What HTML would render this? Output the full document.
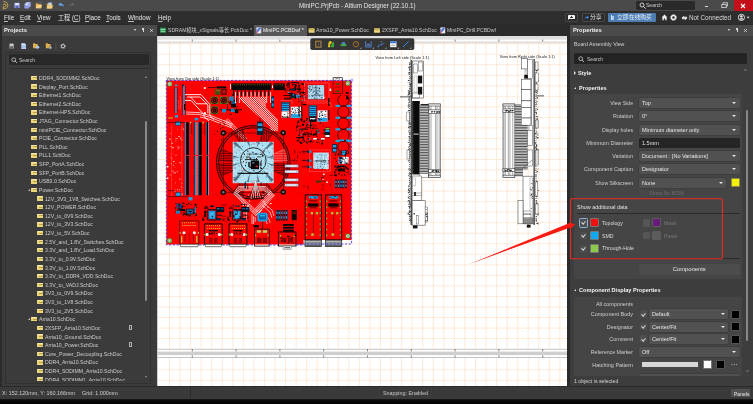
<!DOCTYPE html>
<html lang="en">
<head>
<meta charset="utf-8">
<title>MiniPC.PrjPcb - Altium Designer (22.10.1)</title>
<style>
*{box-sizing:border-box;margin:0;padding:0}
html,body{width:753px;height:404px;overflow:hidden;background:#000}
body{font-family:"Liberation Sans","Noto Sans CJK SC",sans-serif;font-size:7.4px;color:#d8d8d8;line-height:1}
#app{position:relative;width:753px;height:404px;background:#2b2b2b;overflow:hidden;will-change:transform}
.abs{position:absolute}
.t{position:absolute;white-space:nowrap;line-height:10px;height:10px;transform:scaleX(var(--sx,.9));transform-origin:left center}
#titlebar{left:0;top:0;width:753px;height:10.6px;background:#4a4a4a}
#menubar{left:0;top:10.6px;width:753px;height:13.4px;background:#2e2e2e}
#menubar .t{top:2.2px;font-size:6.5px;color:#e6e6e6;--sx:.97}
u{text-decoration-thickness:0.4px;text-underline-offset:0.6px;text-decoration-color:#bbb}
/* left panel */
#left{left:0;top:24px;width:157px;height:362.4px;background:#3b3b3b}
.phead{position:absolute;left:0;top:0;height:12px;background:#4b4b4b;width:100%}
.phead b{position:absolute;left:4px;top:0.6px;font-size:6.1px;line-height:10px;color:#f0f0f0;transform:scaleX(.95);transform-origin:left center}
#tree{position:absolute;left:8px;top:46px;width:141px;height:310.6px;overflow:hidden}
.row{position:absolute;left:0;height:8.62px;width:141px}
.row .fi{position:absolute;top:2.3px;width:5.8px;height:4.3px;background:#ecd67c;border-top:0.8px solid #f4e8a8;border-radius:0.5px}
.row .fi:after{content:"";position:absolute;left:2.4px;top:0.6px;width:3.4px;height:0.8px;background:#a88a34;opacity:.75}
.row span{position:absolute;top:-0.6px;line-height:10px;font-size:5.8px;color:#cecece;white-space:nowrap;transform:scaleX(.89);transform-origin:left center}
.l1 .fi{left:23px}.l1 span{left:31px}
.l2 .fi{left:29px}.l2 span{left:37px}
.tw{position:absolute;left:19.5px;top:3.2px;width:0;height:0;border-left:2.6px solid transparent;border-bottom:2.6px solid #ccc}
.di{position:absolute;left:120.6px;top:1.7px;width:3.6px;height:4.6px;border:0.55px solid #b4b4b4;border-radius:0.4px}
/* tabs */
#tabs{left:157px;top:24px;width:412px;height:13px;background:#2b2b2b}
#tabs .t{top:1px;font-size:5.7px;color:#c8c8c8;--sx:.9}
/* canvas */
#canvas{left:157px;top:36px;width:410px;height:351px;background:#fff;overflow:hidden}
/* right panel */
#right{left:570px;top:24px;width:183px;height:362.4px;background:#3d3d3d}
.lbl{position:absolute;white-space:nowrap;line-height:10px;font-size:5.8px;color:#cfcfcf;text-align:right;width:70px;left:-7px;transform:scaleX(.95);transform-origin:right center}
.dd{position:absolute;height:10px;background:#515151;border-radius:1.5px;box-shadow:0 0 0 0.5px #383838;font-size:5.8px;line-height:10px;color:#e8e8e8;white-space:nowrap}
.dd span,.inp span{position:absolute;left:3px;top:0;transform:scaleX(.955);transform-origin:left center}
.dd:after{content:"";position:absolute;right:3.5px;top:4px;border-left:2px solid transparent;border-right:2px solid transparent;border-top:2.4px solid #e8e8e8}
.inp{position:absolute;height:10px;background:#252525;border-radius:1.5px;font-size:5.8px;line-height:10px;color:#e0e0e0}
.sw{position:absolute;width:9px;height:9px;border:0.7px solid #777;border-radius:1px}
.cb{position:absolute;width:7.5px;height:7.5px;background:#4e4e4e;border-radius:1px}
.cb.on:after{content:"";position:absolute;left:2.7px;top:1.4px;width:1.6px;height:3px;border-right:0.7px solid #d8d8d8;border-bottom:0.7px solid #d8d8d8;transform:rotate(40deg)}
.sec{position:absolute;left:4px;width:168px;background:#454545;border-radius:1px}
.sh{position:absolute;left:7px;font-weight:bold;font-size:6px;line-height:10px;color:#f2f2f2;white-space:nowrap}
.sh span{display:inline-block;transform:scaleX(.93);transform-origin:left center}
.sh i{position:absolute;left:-5px;top:4px;width:0;height:0;border-left:2.4px solid transparent;border-bottom:2.4px solid #ddd}
#status{left:0;top:386.4px;width:753px;height:13px;background:#3a3a3a;border-top:1.9px solid #2a2a2a}
#status .t{top:0.8px;font-size:5.8px;color:#d0d0d0}
</style>
</head>
<body>
<div id="app">

<!-- ===== TITLE BAR ===== -->
<div id="titlebar" class="abs">
  <svg class="abs" style="left:0;top:0" width="80" height="11" viewBox="0 0 80 11">
    <!-- altium logo -->
    <path d="M3.4 1.5 L5.8 2.1 Q7.9 3 7.9 5.3 Q7.9 7.7 5.8 8.5 L3.2 8.9 M3 5.3 Q3.6 3.6 5.2 4 Q6.5 4.8 5.8 6.2 Q4.8 7.2 3.2 6.8 L3.2 8.9" fill="none" stroke="#c8a652" stroke-width="0.95" stroke-linejoin="round"/>
    <!-- save -->
    <rect x="14.3" y="2.7" width="5.4" height="5.4" rx="0.5" fill="#949ce2"/><rect x="15.2" y="3" width="3.6" height="2" fill="#e4e6ff"/><rect x="15.6" y="6" width="2.8" height="2.1" fill="#5a62b4"/>
    <!-- save all -->
    <rect x="26" y="2" width="4.6" height="5" rx="0.5" fill="#aab3f0"/><rect x="24.4" y="3.4" width="4.8" height="5.2" rx="0.5" fill="#8f9be8"/><rect x="25.4" y="3.4" width="2.8" height="1.8" fill="#dfe3ff"/>
    <!-- open -->
    <path d="M35.8 3.2 h2.2 l0.6 0.8 h2.8 v4.2 h-5.6z" fill="#d8a848"/><path d="M36.6 5 h5.4 l-1 3.2 h-5.2z" fill="#f2d282"/><path d="M39.4 2.6 q1.6 -0.8 2.4 0.8" stroke="#5a8ad8" stroke-width="0.6" fill="none"/>
    <!-- open project -->
    <path d="M46.8 3.6 h2 l0.6 0.8 h3 v4 h-5.6z" fill="#d8a848"/><path d="M47.4 5.6 h5.4 l-1 2.8 h-5.2z" fill="#f2d282"/><rect x="48.2" y="2.6" width="3.6" height="2.6" fill="#c8d4e8"/><path d="M50.4 2.2 q1.4 -0.6 2 0.8" stroke="#5a8ad8" stroke-width="0.6" fill="none"/>
    <!-- undo -->
    <path d="M58.4 4.4 L60.6 2.4 L60.6 3.6 Q63.6 3.6 63.8 7 Q62.8 5.2 60.6 5.3 L60.6 6.4 Z" fill="#68a6f2"/>
    <!-- redo -->
    <path d="M74.2 4.4 L72 2.6 L72 3.7 Q69.4 3.7 69 6.6 Q70 5.2 72 5.3 L72 6.2 Z" fill="#666"/>
  </svg>
  <div class="t" style="left:299px;top:0.5px;font-size:6.6px;color:#e4e4e4;--sx:.95">MiniPC.PrjPcb - Altium Designer (22.10.1)</div>
  <div class="abs" style="left:636px;top:0.5px;width:59px;height:9.3px;background:#2a2a2a;border-radius:1.5px"></div>
  <svg class="abs" style="left:639px;top:1.5px" width="8" height="8" viewBox="0 0 8 8"><circle cx="3" cy="3" r="2" fill="none" stroke="#ddd" stroke-width="0.9"/><path d="M4.5 4.5 L6.6 6.6" stroke="#ddd" stroke-width="1"/></svg>
  <div class="t" style="left:646px;top:0px;font-size:5.6px;color:#cfcfcf">Search</div>
  <div class="abs" style="left:704.5px;top:6.2px;width:3.5px;height:1.2px;background:#d8d8d8"></div>
  <svg class="abs" style="left:721px;top:2px" width="8" height="7" viewBox="0 0 8 7"><rect x="2" y="0.8" width="4.4" height="3.2" fill="none" stroke="#d8d8d8" stroke-width="0.8"/><rect x="0.8" y="2.4" width="4.4" height="3.2" fill="#4a4a4a" stroke="#d8d8d8" stroke-width="0.8"/></svg>
  <div class="abs" style="left:734px;top:0;width:19px;height:11px;background:#c40f1a"></div>
  <svg class="abs" style="left:740px;top:2.5px" width="6" height="6" viewBox="0 0 6 6"><path d="M1 1 L5 5 M5 1 L1 5" stroke="#fff" stroke-width="1.1"/></svg>
</div>

<!-- ===== MENU BAR ===== -->
<div id="menubar" class="abs">
  <div class="t" style="left:4px"><u>F</u>ile</div>
  <div class="t" style="left:20px"><u>E</u>dit</div>
  <div class="t" style="left:37px"><u>V</u>iew</div>
  <div class="t" style="left:57.5px;font-size:6.3px">工程 (<u>C</u>)</div>
  <div class="t" style="left:84.5px"><u>P</u>lace</div>
  <div class="t" style="left:106px"><u>T</u>ools</div>
  <div class="t" style="left:127.5px"><u>W</u>indow</div>
  <div class="t" style="left:157.5px"><u>H</u>elp</div>
  <!-- right side -->
  <div class="abs" style="left:565.2px;top:2.6px;width:13px;height:8.6px;background:#2b2b2b;border:0.6px solid #454545;border-radius:1px"></div><div class="abs" style="left:568px;top:4.2px;width:7.4px;height:4.4px;background:#f2f2f2;border-radius:0.6px"></div><div class="abs" style="left:568px;top:8px;border-top:1.6px solid #f2f2f2;border-right:1.8px solid transparent"></div>
  <div class="abs" style="left:570.3px;top:6px;width:2.8px;height:0.8px;background:#333"></div><div class="abs" style="left:571.3px;top:5px;width:0.8px;height:2.8px;background:#333"></div>
  <div class="abs" style="left:581.5px;top:2.6px;width:23px;height:8.6px;background:#2b2b2b;border:0.6px solid #484848;border-radius:1px"></div>
  <svg class="abs" style="left:583.5px;top:4.6px" width="5" height="5" viewBox="0 0 5 5"><path d="M0.4 3.6 Q1.6 1.6 3 1.8 L3 0.6 L4.8 2.4 L3 4 L3 3 Q1.6 2.8 0.4 3.6Z" fill="#3e8cf0"/></svg>
  <div class="t" style="left:589.5px;top:1.9px;font-size:6px;color:#e8e8e8">分享</div>
  <div class="abs" style="left:608px;top:2.6px;width:48px;height:8.6px;background:#4d7db2;border-radius:1px"></div>
  <div class="abs" style="left:610.5px;top:4.6px;width:1px;height:5px;background:#d0e2f8"></div><div class="abs" style="left:612.3px;top:5.1px;width:1.6px;height:4px;background:#a8c8ee"></div>
  <div class="t" style="left:616.5px;top:1.9px;font-size:6px;color:#e8f0fa">立即在线购买</div>
  <svg class="abs" style="left:661px;top:3.8px" width="7" height="7" viewBox="0 0 7 7"><path d="M3.5 0.6 L6.4 3.4 L5.6 3.4 L5.6 6.2 L4.2 6.2 L4.2 4.4 L2.8 4.4 L2.8 6.2 L1.4 6.2 L1.4 3.4 L0.6 3.4Z" fill="#f0f0f0"/></svg>
  <svg class="abs" style="left:670px;top:3.8px" width="7" height="7" viewBox="0 0 7 7"><circle cx="3.5" cy="3.5" r="2" fill="none" stroke="#f0f0f0" stroke-width="1.5"/><circle cx="3.5" cy="3.5" r="2.9" fill="none" stroke="#f0f0f0" stroke-width="0.9" stroke-dasharray="1 1.28"/></svg>
  <svg class="abs" style="left:680.5px;top:4.3px" width="7" height="6" viewBox="0 0 7 6"><path d="M0.6 3 L2.2 1.2 L3.4 1.2 L3.4 2.2 L4.6 2.2 L4.6 1 L6.4 2.8 L4.8 4.8 L3.6 4.8 L3.6 3.8 L2.4 3.8 L2.4 5 Z" fill="#eee"/></svg>
  <div class="t" style="left:688.5px;font-size:6.5px;color:#dcdcdc">Not Connected</div>
  <svg class="abs" style="left:737px;top:2.8px" width="14" height="9" viewBox="0 0 14 9"><circle cx="4.4" cy="4.4" r="3.1" fill="none" stroke="#eee" stroke-width="0.9"/><circle cx="4.4" cy="3.4" r="1.2" fill="#eee"/><path d="M2.2 6.4 Q4.4 3.8 6.6 6.4Z" fill="#eee"/><path d="M9.6 3.8 h3 l-1.5 1.8z" fill="#eee"/></svg>
</div>

<!-- ===== LEFT PANEL ===== -->
<div id="left" class="abs">
  <div class="phead"><b>Projects</b>
    <div class="abs" style="left:133.6px;top:5px;border-left:1.7px solid transparent;border-right:1.7px solid transparent;border-top:2px solid #e8e8e8"></div>
    <div class="abs" style="left:141.8px;top:3.6px;width:2.2px;height:2.8px;background:#dcdcdc"></div><div class="abs" style="left:142.55px;top:6.2px;width:0.7px;height:1.8px;background:#dcdcdc"></div>
    <svg class="abs" style="left:148.6px;top:3.8px" width="5" height="5" viewBox="0 0 5 5"><path d="M1.2 1.2 L3.8 3.8 M3.8 1.2 L1.2 3.8" stroke="#e4e4e4" stroke-width="0.8"/></svg>
  </div>
  <!-- toolbar -->
  <svg class="abs" style="left:0;top:14px" width="80" height="16" viewBox="0 0 80 16">
    <rect x="9.2" y="5.6" width="4.8" height="5.2" rx="0.4" fill="#8e8e8e"/><rect x="10" y="5.9" width="3.2" height="1.7" fill="#d8d8d8"/><rect x="10.2" y="8.8" width="2.8" height="2" fill="#5c5c5c"/>
    <path d="M21.4 5.2 h3.2 l1.4 1.4 v4.4 h-4.6z" fill="#dfe7f8"/><circle cx="24" cy="8.8" r="1.9" fill="#7aa8ea"/><circle cx="24" cy="8.8" r="0.9" fill="#dfe7f8"/>
    <path d="M33 5.2 h1.8 l0.6 0.8 h2.4 v4.2 h-4.8z" fill="#dcae4c"/><path d="M36 8 h2.6 l1 1.2 l-1 1.2 h-2.6z" fill="#a8c8f0"/>
    <path d="M45.8 5.2 h1.8 l0.6 0.8 h2.4 v4.2 h-4.8z" fill="#dcae4c"/><circle cx="50.4" cy="9.6" r="1.6" fill="#8c8c8c"/><circle cx="50.4" cy="9.6" r="0.6" fill="#ccc"/>
    <rect x="55.6" y="4.6" width="0.6" height="7.4" fill="#5a5a5a"/>
    <circle cx="63" cy="8.2" r="1.7" fill="none" stroke="#d0d0d0" stroke-width="1"/><circle cx="63" cy="8.2" r="2.5" fill="none" stroke="#d0d0d0" stroke-width="0.6" stroke-dasharray="0.8 1.16"/>
  </svg>
  <!-- frame -->
  <div class="abs" style="left:4.6px;top:27.6px;width:146.8px;height:332.4px;background:#3b3b3b;border:0.7px solid #313131"></div>
  <!-- search -->
  <div class="abs" style="left:8.8px;top:30.2px;width:140.4px;height:11.3px;background:#282828;border-radius:1.5px"></div>
  <svg class="abs" style="left:10.6px;top:32.6px" width="7" height="7" viewBox="0 0 7 7"><circle cx="2.7" cy="2.7" r="1.9" fill="none" stroke="#ccc" stroke-width="0.8"/><path d="M4.1 4.1 L6 6" stroke="#ccc" stroke-width="0.9"/></svg>
  <div class="t" style="left:18.5px;top:30.8px;font-size:5.6px;color:#c8c8c8">Search</div>
  <div class="abs" style="left:8.6px;top:43.9px;width:140px;height:0.8px;background:#2d2d2d"></div>
  <div id="tree">
<div class="row l1" style="top:3.50px"><i class="fi"></i><span>DDR4_SODIMM2.SchDoc</span></div>
<div class="row l1" style="top:12.12px"><i class="fi"></i><span>Display_Port.SchDoc</span></div>
<div class="row l1" style="top:20.74px"><i class="fi"></i><span>Ethernet1.SchDoc</span></div>
<div class="row l1" style="top:29.36px"><i class="fi"></i><span>Ethernet2.SchDoc</span></div>
<div class="row l1" style="top:37.98px"><i class="fi"></i><span>Ethernet-HPS.SchDoc</span></div>
<div class="row l1" style="top:46.60px"><i class="fi"></i><span>JTAG_Connector.SchDoc</span></div>
<div class="row l1" style="top:55.22px"><i class="fi"></i><span>miniPCIE_Connector.SchDoc</span></div>
<div class="row l1" style="top:63.84px"><i class="fi"></i><span>PCIE_Connector.SchDoc</span></div>
<div class="row l1" style="top:72.46px"><i class="fi"></i><span>PLL.SchDoc</span></div>
<div class="row l1" style="top:81.08px"><i class="fi"></i><span>PLL1.SchDoc</span></div>
<div class="row l1" style="top:89.70px"><i class="fi"></i><span>SFP_PortA.SchDoc</span></div>
<div class="row l1" style="top:98.32px"><i class="fi"></i><span>SFP_PortB.SchDoc</span></div>
<div class="row l1" style="top:106.94px"><i class="fi"></i><span>USB3.0.SchDoc</span></div>
<div class="row l1" style="top:115.56px"><i class="tw"></i><i class="fi"></i><span>Power.SchDoc</span></div>
<div class="row l2" style="top:124.18px"><i class="fi"></i><span>12V_3V3_1V8_Swiches.SchDoc</span></div>
<div class="row l2" style="top:132.80px"><i class="fi"></i><span>12V_POWER.SchDoc</span></div>
<div class="row l2" style="top:141.42px"><i class="fi"></i><span>12V_to_0V9.SchDoc</span></div>
<div class="row l2" style="top:150.04px"><i class="fi"></i><span>12V_to_3V3.SchDoc</span></div>
<div class="row l2" style="top:158.66px"><i class="fi"></i><span>12V_to_5V.SchDoc</span></div>
<div class="row l2" style="top:167.28px"><i class="fi"></i><span>2.5V_and_1.8V_Switches.SchDoc</span></div>
<div class="row l2" style="top:175.90px"><i class="fi"></i><span>3.3V_and_1.8V_Load.SchDoc</span></div>
<div class="row l2" style="top:184.52px"><i class="fi"></i><span>3.3V_to_0.9V.SchDoc</span></div>
<div class="row l2" style="top:193.14px"><i class="fi"></i><span>3.3V_to_1.0V.SchDoc</span></div>
<div class="row l2" style="top:201.76px"><i class="fi"></i><span>3.3V_to_DDR4_VDD.SchDoc</span></div>
<div class="row l2" style="top:210.38px"><i class="fi"></i><span>3.3V_to_VADJ.SchDoc</span></div>
<div class="row l2" style="top:219.00px"><i class="fi"></i><span>3V3_to_0V9.SchDoc</span></div>
<div class="row l2" style="top:227.62px"><i class="fi"></i><span>3V3_to_1V8.SchDoc</span></div>
<div class="row l2" style="top:236.24px"><i class="fi"></i><span>3V3_to_2V5.SchDoc</span></div>
<div class="row l1" style="top:244.86px"><i class="tw"></i><i class="fi"></i><span>Arria10.SchDoc</span></div>
<div class="row l2" style="top:253.48px"><i class="fi"></i><span>2XSFP_Arria10.SchDoc</span><i class="di"></i></div>
<div class="row l2" style="top:262.10px"><i class="fi"></i><span>Arria10_Ground.SchDoc</span></div>
<div class="row l2" style="top:270.72px"><i class="fi"></i><span>Arria10_Power.SchDoc</span><i class="di"></i></div>
<div class="row l2" style="top:279.34px"><i class="fi"></i><span>Core_Power_Decoupling.SchDoc</span></div>
<div class="row l2" style="top:287.96px"><i class="fi"></i><span>DDR4_Arria10.SchDoc</span></div>
<div class="row l2" style="top:296.58px"><i class="fi"></i><span>DDR4_SODIMM_Arria10.SchDoc</span></div>
<div class="row l2" style="top:305.20px"><i class="fi"></i><span>DDR4_SODIMM1_Arria10.SchDoc</span></div>
  </div>
  <!-- scrollbar -->
  <div class="abs" style="left:145px;top:97px;width:2px;height:180px;background:#8a8a8a;border-radius:1px"></div>
  <div class="abs" style="left:145px;top:51.8px;border-left:1.5px solid transparent;border-right:1.5px solid transparent;border-bottom:2px solid #a0a0a0"></div>
  <div class="abs" style="left:145px;top:352.4px;border-left:1.5px solid transparent;border-right:1.5px solid transparent;border-top:2px solid #909090"></div>
</div>

<!-- ===== TABS ===== -->
<div id="tabs" class="abs">
  <div class="abs" style="left:96.5px;top:0;width:53px;height:12.4px;background:#585858"></div>
  <svg class="abs" style="left:0;top:0" width="412" height="13" viewBox="0 0 412 13">
    <rect x="3" y="3.8" width="6" height="5" rx="0.5" fill="#2e9a58"/><rect x="4" y="5" width="1.4" height="1.2" fill="#d8f4e0"/><rect x="6.2" y="5" width="1.8" height="0.8" fill="#d8f4e0"/><rect x="4" y="7" width="4" height="0.7" fill="#a8e0b8"/>
    <rect x="99.4" y="3.4" width="4.8" height="6" fill="#e8e8f2"/><path d="M98.6 9.6 L99.4 6.4 L101 8.2 Z" fill="#d04a6a"/><path d="M99.4 6.4 L102.6 3 L104 4.6 L101 8.2Z" fill="#5a78d8"/>
    <rect x="151.6" y="4.2" width="6" height="4.6" rx="0.5" fill="#e8d27a"/><rect x="151.6" y="5.4" width="6" height="0.8" fill="#b89a3c"/>
    <rect x="217" y="4.2" width="6" height="4.6" rx="0.5" fill="#e8d27a"/><rect x="217" y="5.4" width="6" height="0.8" fill="#b89a3c"/>
    <rect x="283.4" y="3.4" width="4.8" height="6" fill="#e8e8f2"/><path d="M282.6 9.6 L283.4 6.4 L285 8.2 Z" fill="#d04a6a"/><path d="M283.4 6.4 L286.6 3 L288 4.6 L285 8.2Z" fill="#5a78d8"/>
  </svg>
  <div class="t" style="left:10.5px">SDRAM模块_xSignals等长.PcbDoc *</div>
  <div class="t" style="left:106px;color:#f4f4f4">MiniPC.PCBDwf *</div>
  <div class="t" style="left:159px">Arria10_Power.SchDoc</div>
  <div class="t" style="left:224.5px">2XSFP_Arria10.SchDoc</div>
  <div class="t" style="left:290px">MiniPC_Drill.PCBDwf</div>
</div>

<!-- ===== CANVAS ===== -->
<div id="canvas" class="abs">
<svg width="410" height="351" viewBox="157 36 410 351" style="position:absolute;left:0;top:0;font-family:'Liberation Sans',sans-serif">
<rect x="157" y="36" width="410" height="351" fill="#fff"/>
<path d="M169.50 43V349.2M169.50 357.6V387M180.05 43V349.2M180.05 357.6V387M190.60 43V349.2M190.60 357.6V387M201.15 43V349.2M201.15 357.6V387M211.70 43V349.2M211.70 357.6V387M222.25 43V349.2M222.25 357.6V387M232.80 43V349.2M232.80 357.6V387M243.35 43V349.2M243.35 357.6V387M253.90 43V349.2M253.90 357.6V387M264.45 43V349.2M264.45 357.6V387M275.00 43V349.2M275.00 357.6V387M285.55 43V349.2M285.55 357.6V387M296.10 43V349.2M296.10 357.6V387M306.65 43V349.2M306.65 357.6V387M317.20 43V349.2M317.20 357.6V387M327.75 43V349.2M327.75 357.6V387M338.30 43V349.2M338.30 357.6V387M348.85 43V349.2M348.85 357.6V387M359.40 43V349.2M359.40 357.6V387M369.95 43V349.2M369.95 357.6V387M380.50 43V349.2M380.50 357.6V387M391.05 43V349.2M391.05 357.6V387M401.60 43V349.2M401.60 357.6V387M412.15 43V349.2M412.15 357.6V387M422.70 43V349.2M422.70 357.6V387M433.25 43V349.2M433.25 357.6V387M443.80 43V349.2M443.80 357.6V387M454.35 43V349.2M454.35 357.6V387M464.90 43V349.2M464.90 357.6V387M475.45 43V349.2M475.45 357.6V387M486.00 43V349.2M486.00 357.6V387M496.55 43V349.2M496.55 357.6V387M507.10 43V349.2M507.10 357.6V387M517.65 43V349.2M517.65 357.6V387M528.20 43V349.2M528.20 357.6V387M538.75 43V349.2M538.75 357.6V387M549.30 43V349.2M549.30 357.6V387M559.85 43V349.2M559.85 357.6V387M158 54.15H567M158 64.69H567M158 75.22H567M158 85.75H567M158 96.29H567M158 106.82H567M158 117.36H567M158 127.89H567M158 138.43H567M158 148.96H567M158 159.50H567M158 170.03H567M158 180.57H567M158 191.10H567M158 201.64H567M158 212.17H567M158 222.71H567M158 233.24H567M158 243.78H567M158 254.31H567M158 264.85H567M158 275.38H567M158 285.92H567M158 296.46H567M158 306.99H567M158 317.53H567M158 328.06H567M158 338.60H567M158 369.70H567M158 380.20H567" stroke="#ffe1c7" stroke-width="0.7" fill="none"/>
<rect x="157" y="36" width="410" height="3.8" fill="#dedede"/>
<rect x="157" y="39.8" width="410" height="1.5" fill="#fdfdfd"/>
<rect x="157" y="41.3" width="410" height="1.9" fill="#e2e2e2"/>
<rect x="157" y="43.1" width="410" height="0.7" fill="#ffd9c2"/>
<rect x="157" y="348.9" width="410" height="9" fill="#fff"/>
<rect x="157" y="348.8" width="410" height="0.8" fill="#b4b4b4"/>
<rect x="157" y="351.6" width="410" height="3.5" fill="#cfcfcf"/>
<rect x="157" y="357.2" width="410" height="0.8" fill="#b4b4b4"/>
<path d="M192.3 39.6V41.6M192.3 349V351.4M192.3 355.4V357.6M236.1 39.6V41.6M236.1 349V351.4M236.1 355.4V357.6M279.9 39.6V41.6M279.9 349V351.4M279.9 355.4V357.6M323.7 39.6V41.6M323.7 349V351.4M323.7 355.4V357.6M367.5 39.6V41.6M367.5 349V351.4M367.5 355.4V357.6M411.3 39.6V41.6M411.3 349V351.4M411.3 355.4V357.6M455.1 39.6V41.6M455.1 349V351.4M455.1 355.4V357.6M498.9 39.6V41.6M498.9 349V351.4M498.9 355.4V357.6M542.7 39.6V41.6M542.7 349V351.4M542.7 355.4V357.6" stroke="#555" stroke-width="0.7" fill="none"/>
<rect x="157" y="36" width="1" height="351" fill="#cfcfcf"/>
<rect x="310.3" y="38.3" width="104" height="11.8" rx="1.8" fill="#353535"/>
<rect x="315.79999999999995" y="41.2" width="5.2" height="6" fill="none" stroke="#c8923a" stroke-width="0.9"/><rect x="318.79999999999995" y="41.2" width="2.2" height="6" fill="none" stroke="#7a6a5a" stroke-width="0.6"/>
<path d="M328 47.2 L328.4 43.2 Q328.6 41.0 330.6 41.0 Q332.2 41.2 331.8 43.2 L330.2 44.2 L330 47.2Z" fill="#e8c01e"/><path d="M330.4 47.2 L332.2 42.800000000000004 L334 41.6 L334 47.2Z" fill="#3aa83a"/>
<rect x="340.7" y="44.0" width="5.6" height="2.2" fill="#3ea848"/><rect x="341.9" y="42.2" width="3.2" height="1.8" fill="#4a8ae0"/>
<circle cx="355.9" cy="44.2" r="2.7" fill="none" stroke="#c47a28" stroke-width="0.8"/><path d="M355.9 44.2 l1.4 -1.2" stroke="#c47a28" stroke-width="0.6"/>
<path d="M365.59999999999997 41.2 V47.0 H371.2 V41.2" fill="none" stroke="#4a84d8" stroke-width="0.9"/><rect x="366.59999999999997" y="43.6" width="3.6" height="2.6" fill="#5a6a98"/>
<path d="M378.09999999999997 46.6 L380.29999999999995 44.6 H382.29999999999995 L383.9 42.6" fill="none" stroke="#4a8ae0" stroke-width="0.9"/><circle cx="378.09999999999997" cy="46.6" r="0.8" fill="#4a8ae0"/><circle cx="381.29999999999995" cy="41.800000000000004" r="0.6" fill="#9ab"/>
<rect x="390.1" y="41.2" width="6.4" height="6" fill="#f4f4f4"/><rect x="390.1" y="41.2" width="6.4" height="2" fill="#3a78d0"/><rect x="391.3" y="44.800000000000004" width="4" height="0.8" fill="#999"/>
<path d="M403.0 47.0 L408.6 41.400000000000006" stroke="#3a84e0" stroke-width="1"/>
<path d="M361.5 48.800000000000004 h-1.6 l1.6 -1.6z" fill="#bbb"/>
<path d="M374.0 48.800000000000004 h-1.6 l1.6 -1.6z" fill="#bbb"/>
<path d="M386.5 48.800000000000004 h-1.6 l1.6 -1.6z" fill="#bbb"/>
<path d="M398.90000000000003 48.800000000000004 h-1.6 l1.6 -1.6z" fill="#bbb"/>
<path d="M411.40000000000003 48.800000000000004 h-1.6 l1.6 -1.6z" fill="#bbb"/><g id="sideviews">
<text x="375.6" y="59.4" font-size="4.2" fill="#222" textLength="53.5" lengthAdjust="spacingAndGlyphs">View from Left side (Scale 1:1)</text>
<text x="499.8" y="58.4" font-size="4.2" fill="#222" textLength="55" lengthAdjust="spacingAndGlyphs">View from Right side (Scale 1:1)</text>
<rect x="410.60" y="60.00" width="1.30" height="165.00" fill="#3a3a3a" />
<path d="M408.2 149.1h0.8v1.0h-0.8zM409.2 72.5h0.5v1.2h-0.5zM408.3 99.5h1.3v0.9h-1.3zM409.8 138.2h1.0v0.6h-1.0zM409.3 200.9h0.9v1.1h-0.9zM409.3 72.2h1.1v1.0h-1.1zM408.4 67.0h1.2v0.9h-1.2zM409.5 202.6h1.1v1.2h-1.1zM408.6 190.1h0.9v1.2h-0.9zM409.9 77.6h0.6v0.7h-0.6zM410.1 131.8h1.0v0.7h-1.0zM408.9 123.7h0.8v1.0h-0.8zM409.1 206.7h1.0v1.2h-1.0zM409.8 220.6h1.0v0.6h-1.0zM409.8 216.3h1.2v1.0h-1.2zM409.5 95.8h1.2v1.0h-1.2zM408.3 72.2h1.2v1.3h-1.2zM407.8 190.1h0.8v0.6h-0.8zM408.4 185.0h1.2v0.5h-1.2zM409.2 69.2h1.1v0.8h-1.1zM409.9 218.9h0.9v1.3h-0.9zM408.4 74.3h1.0v0.5h-1.0zM408.1 127.3h1.0v0.6h-1.0zM407.7 200.8h0.8v1.3h-0.8zM409.9 122.4h0.9v0.9h-0.9zM409.3 157.3h0.9v1.0h-0.9zM410.0 143.1h0.8v1.1h-0.8zM408.2 110.2h1.3v0.9h-1.3zM409.0 63.8h0.8v1.0h-0.8zM407.7 160.5h1.0v0.5h-1.0zM409.2 136.6h1.0v0.8h-1.0zM409.4 180.1h0.5v0.5h-0.5zM409.4 216.1h0.7v0.9h-0.7zM409.1 113.2h0.8v0.8h-0.8zM408.6 157.3h0.7v0.8h-0.7zM409.6 66.3h1.0v1.1h-1.0zM408.4 97.6h1.1v0.7h-1.1zM408.1 131.6h1.1v0.6h-1.1zM408.4 115.4h1.2v0.9h-1.2zM409.8 89.1h0.8v1.0h-0.8zM409.9 134.2h0.7v0.6h-0.7zM409.0 92.5h1.1v1.2h-1.1zM408.1 106.6h1.1v1.0h-1.1zM409.7 117.2h0.6v0.7h-0.6zM409.7 105.4h0.8v0.8h-0.8zM408.7 127.5h1.2v0.6h-1.2zM407.6 212.9h1.2v1.3h-1.2zM408.7 214.0h1.2v0.7h-1.2zM409.5 195.9h1.0v0.9h-1.0zM408.4 116.6h0.7v0.6h-0.7zM409.1 107.9h1.1v0.5h-1.1zM409.9 173.0h1.2v1.2h-1.2zM409.9 154.3h0.5v1.1h-0.5zM408.0 110.0h1.0v0.9h-1.0zM408.7 212.2h1.0v0.8h-1.0zM408.3 199.9h0.9v1.1h-0.9zM408.5 93.6h0.9v1.2h-0.9zM408.0 188.7h1.2v1.1h-1.2zM409.7 63.2h1.0v1.2h-1.0zM407.7 105.4h0.7v0.9h-0.7zM408.7 137.7h1.1v0.5h-1.1zM407.7 82.3h0.6v0.6h-0.6zM410.1 198.7h0.6v0.9h-0.6zM408.4 112.3h0.8v1.0h-0.8zM409.1 119.7h0.7v0.8h-0.7zM407.9 150.9h1.1v0.8h-1.1zM407.8 90.6h0.8v1.0h-0.8zM409.6 122.8h1.1v1.0h-1.1zM408.7 121.6h0.9v1.1h-0.9zM408.7 173.1h0.9v0.7h-0.9zM409.0 173.2h0.6v0.8h-0.6zM408.7 202.7h1.2v0.8h-1.2zM409.9 188.5h0.7v0.9h-0.7zM407.9 192.1h1.0v1.2h-1.0zM409.7 168.8h1.1v1.0h-1.1zM407.9 156.0h0.5v0.6h-0.5zM409.6 69.1h0.6v0.6h-0.6zM409.9 90.7h0.5v1.2h-0.5zM407.9 197.0h1.0v1.2h-1.0zM410.1 154.7h1.1v0.5h-1.1zM409.6 143.8h1.1v0.6h-1.1zM409.5 211.5h0.5v0.8h-0.5zM409.1 194.5h0.7v0.6h-0.7zM408.2 160.6h1.1v0.8h-1.1zM408.6 125.5h0.8v0.8h-0.8zM407.8 142.0h1.3v0.8h-1.3zM409.5 87.7h1.1v1.1h-1.1zM409.4 144.7h0.9v1.0h-0.9zM409.9 85.9h0.6v1.1h-0.6zM410.0 144.8h0.9v1.1h-0.9zM408.1 104.8h0.7v1.0h-0.7zM408.4 99.2h1.1v1.3h-1.1zM408.4 174.9h0.8v1.2h-0.8zM409.1 104.7h0.7v0.5h-0.7zM408.8 123.2h0.6v0.8h-0.6zM408.4 185.9h0.6v1.3h-0.6zM408.8 157.8h0.9v1.2h-0.9zM409.7 151.1h0.9v1.1h-0.9zM409.8 126.0h1.1v1.3h-1.1zM408.8 98.7h0.7v1.1h-0.7zM409.4 215.4h1.2v0.7h-1.2zM408.1 103.4h0.6v1.1h-0.6zM409.8 206.0h0.7v1.2h-0.7zM408.4 129.7h1.1v0.6h-1.1zM407.8 195.4h0.7v0.8h-0.7zM409.1 170.1h0.5v0.8h-0.5zM408.7 139.7h0.7v1.0h-0.7zM410.1 124.5h0.9v0.6h-0.9zM408.3 168.5h0.6v1.2h-0.6zM410.0 77.5h1.3v0.8h-1.3zM409.6 183.2h0.7v1.0h-0.7zM409.3 191.0h0.7v1.1h-0.7zM410.1 169.7h0.9v0.6h-0.9zM408.9 118.3h1.1v1.0h-1.1zM409.1 91.1h1.0v1.0h-1.0zM408.1 204.4h1.0v0.6h-1.0zM410.0 84.6h0.8v1.1h-0.8zM409.2 150.8h1.0v0.9h-1.0zM408.4 90.2h0.6v1.1h-0.6zM409.6 148.9h1.1v0.8h-1.1zM408.3 123.3h1.2v0.5h-1.2zM408.9 101.6h1.1v0.8h-1.1zM408.5 126.5h0.9v1.1h-0.9zM408.5 197.5h0.6v0.7h-0.6zM407.9 80.0h1.1v1.1h-1.1zM408.1 92.3h0.8v1.1h-0.8zM409.7 181.8h1.0v0.6h-1.0zM408.6 93.0h0.9v1.0h-0.9zM408.1 102.0h1.1v0.5h-1.1zM409.7 204.6h1.3v0.8h-1.3zM409.0 155.3h1.0v1.3h-1.0zM409.4 109.9h1.2v0.9h-1.2zM409.2 178.3h0.5v1.1h-0.5zM409.3 140.7h0.9v0.9h-0.9zM408.1 146.7h0.5v0.9h-0.5zM409.3 133.1h1.0v1.3h-1.0zM409.9 83.7h1.1v1.0h-1.1zM407.7 119.6h0.7v0.6h-0.7zM409.0 210.8h0.8v1.2h-0.8zM409.4 83.5h1.2v1.0h-1.2zM410.0 176.6h1.1v0.8h-1.1zM409.7 211.1h1.2v0.8h-1.2zM409.6 139.6h0.6v0.5h-0.6zM407.8 94.0h0.6v0.9h-0.6zM409.4 148.0h0.8v1.0h-0.8zM408.4 136.3h1.1v0.8h-1.1zM408.1 205.9h1.1v0.8h-1.1zM408.6 146.7h1.0v0.7h-1.0zM407.6 95.4h1.1v0.6h-1.1zM408.8 93.2h0.7v0.6h-0.7z" fill="#333"/>
<rect x="406.80" y="112.00" width="3.00" height="9.00" fill="#fff" stroke="#4a4a4a" stroke-width="0.45" />
<rect x="407.00" y="150.00" width="2.80" height="9.00" fill="#fff" stroke="#4a4a4a" stroke-width="0.45" />
<path d="M409.4 62V222" stroke="#555" stroke-width="0.8" stroke-dasharray="1.2 0.8"/>
<rect x="400.00" y="96.50" width="10.00" height="0.80" fill="#333" />
<rect x="412.30" y="61.00" width="11.20" height="37.00" fill="#fff" stroke="#4a4a4a" stroke-width="0.6" />
<rect x="417.90" y="75.60" width="4.30" height="7.80" fill="#111" />
<rect x="417.90" y="86.80" width="4.30" height="7.70" fill="#111" />
<rect x="413.40" y="64.00" width="4.00" height="9.00" fill="none" stroke="#4a4a4a" stroke-width="0.45" />
<rect x="418.60" y="62.00" width="4.00" height="9.00" fill="none" stroke="#4a4a4a" stroke-width="0.45" />
<rect x="412.30" y="93.00" width="7.00" height="5.00" fill="none" stroke="#4a4a4a" stroke-width="0.45" />
<rect x="414.00" y="76.00" width="3.00" height="16.00" fill="none" stroke="#888" stroke-width="0.4" />
<rect x="412.20" y="101.00" width="7.60" height="73.40" fill="#0a0a0a" />
<path d="M413.2 102V174" stroke="#999" stroke-width="0.5" stroke-dasharray="0.5 0.9"/>
<rect x="413.60" y="133.60" width="5.00" height="1.00" fill="#ddd" />
<rect x="419.80" y="104.00" width="8.90" height="73.20" fill="#fff" />
<path d="M419.8 106.00H428.7M419.8 107.60H428.7M419.8 109.20H428.7M419.8 110.80H428.7M419.8 112.40H428.7M419.8 114.00H428.7M419.8 115.60H428.7M419.8 117.20H428.7M419.8 118.80H428.7M419.8 120.40H428.7M419.8 122.00H428.7M419.8 123.60H428.7M419.8 125.20H428.7M419.8 126.80H428.7M419.8 128.40H428.7M419.8 130.00H428.7M419.8 131.60H428.7M419.8 133.20H428.7M419.8 134.80H428.7M419.8 136.40H428.7M419.8 138.00H428.7M419.8 139.60H428.7M419.8 141.20H428.7M419.8 142.80H428.7M419.8 144.40H428.7M419.8 146.00H428.7M419.8 147.60H428.7M419.8 149.20H428.7M419.8 150.80H428.7M419.8 152.40H428.7M419.8 154.00H428.7M419.8 155.60H428.7M419.8 157.20H428.7M419.8 158.80H428.7M419.8 160.40H428.7M419.8 162.00H428.7M419.8 163.60H428.7M419.8 165.20H428.7M419.8 166.80H428.7M419.8 168.40H428.7M419.8 170.00H428.7M419.8 171.60H428.7M419.8 173.20H428.7" stroke="#111" stroke-width="0.75"/>
<rect x="420.60" y="104.00" width="8.10" height="1.40" fill="#222" />
<rect x="419.80" y="173.60" width="8.90" height="3.60" fill="#fff" stroke="#4a4a4a" stroke-width="0.45" />
<rect x="428.70" y="104.00" width="11.90" height="73.20" fill="#fff" stroke="#4a4a4a" stroke-width="0.6" />
<path d="M429.6 104.3V177M431.0 104.3V177M435.6 104.3V177M437.0 104.3V177M439.2 104.3V177" stroke="#555" stroke-width="0.5"/>
<rect x="428.70" y="104.00" width="11.90" height="2.00" fill="#fff" stroke="#2a2a2a" stroke-width="0.55" />
<rect x="428.70" y="109.90" width="11.90" height="3.60" fill="#fff" stroke="#2a2a2a" stroke-width="0.55" />
<rect x="428.70" y="169.30" width="11.90" height="3.20" fill="#fff" stroke="#2a2a2a" stroke-width="0.55" />
<rect x="428.70" y="175.20" width="11.90" height="2.00" fill="#fff" stroke="#2a2a2a" stroke-width="0.55" />
<path d="M434.0 111.1h0.6v0.7h-0.6zM432.0 111.6h0.6v0.6h-0.6zM434.4 111.5h1.1v0.6h-1.1zM434.0 111.5h0.6v1.3h-0.6zM432.4 111.0h0.9v0.7h-0.9zM435.8 111.4h0.7v0.6h-0.7zM436.7 111.3h1.2v0.9h-1.2zM438.4 111.3h0.8v0.8h-0.8zM437.4 111.8h0.8v0.7h-0.8zM436.3 112.3h1.0v0.6h-1.0zM430.9 111.0h0.7v0.6h-0.7zM431.1 111.8h1.2v0.7h-1.2zM438.8 111.6h1.2v1.2h-1.2zM438.5 110.9h0.8v1.0h-0.8zM438.6 111.0h0.8v1.2h-0.8zM431.6 111.4h0.8v1.1h-0.8z" fill="#111"/>
<path d="M438.4 170.3h1.1v1.1h-1.1zM437.6 170.9h1.2v0.9h-1.2zM434.1 170.4h1.1v0.9h-1.1zM432.9 170.3h1.1v1.0h-1.1zM436.6 170.6h0.9v0.7h-0.9zM436.6 170.1h0.9v1.1h-0.9zM436.3 170.2h0.8v1.2h-0.8zM436.0 171.3h1.2v0.9h-1.2zM438.1 171.1h0.8v0.9h-0.8zM431.2 170.7h1.3v0.7h-1.3zM435.4 170.3h0.7v1.1h-0.7zM432.6 170.2h0.7v1.1h-0.7zM435.5 170.1h0.8v1.3h-0.8zM432.4 170.9h0.9v1.1h-0.9zM435.7 171.2h1.0v0.7h-1.0zM432.1 170.2h1.2v0.7h-1.2z" fill="#111"/>
<rect x="412.20" y="176.00" width="9.10" height="24.60" fill="#fff" stroke="#4a4a4a" stroke-width="0.5" />
<rect x="412.20" y="193.00" width="9.10" height="2.30" fill="#fff" stroke="#4a4a4a" stroke-width="0.4" />
<rect x="414.00" y="192.00" width="2.00" height="4.00" fill="#333" />
<rect x="412.60" y="178.00" width="3.00" height="8.00" fill="none" stroke="#888" stroke-width="0.4" />
<rect x="412.20" y="200.70" width="13.00" height="24.50" fill="#fff" stroke="#4a4a4a" stroke-width="0.6" />
<rect x="425.20" y="207.00" width="2.30" height="15.00" fill="#fff" stroke="#4a4a4a" stroke-width="0.45" />
<path d="M425.3 220.6h0.6v0.9h-0.6zM425.5 214.0h0.6v0.9h-0.6zM426.5 216.3h0.9v0.9h-0.9zM426.0 215.8h0.7v0.6h-0.7zM426.9 215.7h0.9v0.6h-0.9zM426.3 214.0h0.9v0.5h-0.9zM426.0 214.3h0.5v0.8h-0.5zM426.7 213.5h0.8v0.8h-0.8zM425.7 212.6h1.0v0.7h-1.0zM426.1 209.1h0.6v0.6h-0.6zM427.1 217.4h0.9v1.0h-0.9zM426.5 220.1h0.8v0.7h-0.8zM427.1 219.7h1.0v0.7h-1.0zM426.8 213.3h1.0v1.0h-1.0z" fill="#111"/>
<rect x="416.70" y="215.30" width="1.80" height="8.70" fill="#fff" stroke="#4a4a4a" stroke-width="0.45" />
<rect x="413.60" y="213.00" width="1.20" height="1.60" fill="#333" />
<rect x="412.90" y="225.40" width="4.60" height="3.00" fill="#111" />
<rect x="533.50" y="59.00" width="1.30" height="166.00" fill="#3a3a3a" />
<path d="M535.8 213.3h0.6v0.6h-0.6zM536.9 109.0h0.9v1.0h-0.9zM535.1 182.5h0.7v0.8h-0.7zM535.9 182.0h1.1v0.7h-1.1zM535.3 109.8h0.8v0.6h-0.8zM535.4 185.3h1.1v1.3h-1.1zM537.5 203.8h0.8v0.6h-0.8zM535.8 136.5h0.9v0.9h-0.9zM535.9 200.0h0.7v0.9h-0.7zM537.3 192.6h0.7v0.7h-0.7zM537.1 62.6h0.6v0.9h-0.6zM536.4 88.0h0.5v0.7h-0.5zM537.0 136.9h1.3v1.1h-1.3zM537.5 66.7h0.6v0.5h-0.6zM536.1 116.1h0.5v0.9h-0.5zM535.2 111.8h0.7v1.1h-0.7zM536.1 103.4h0.5v0.8h-0.5zM536.6 171.1h1.2v1.1h-1.2zM535.6 83.1h1.1v1.1h-1.1zM536.3 196.5h0.9v0.7h-0.9zM535.4 63.8h1.0v1.2h-1.0zM537.4 137.2h1.0v1.2h-1.0zM537.1 159.2h0.8v0.9h-0.8zM535.4 90.8h1.0v1.3h-1.0zM536.4 127.5h0.8v0.9h-0.8zM537.1 134.8h1.3v0.6h-1.3zM535.8 146.1h0.8v1.2h-0.8zM537.2 212.8h1.0v0.5h-1.0zM536.5 150.6h0.9v0.7h-0.9zM536.8 209.6h0.6v1.0h-0.6zM536.0 144.9h1.2v1.3h-1.2zM536.7 92.8h1.2v0.6h-1.2zM536.0 196.0h0.8v0.7h-0.8zM537.5 214.8h0.8v0.8h-0.8zM535.7 82.4h0.7v1.3h-0.7zM535.2 98.4h0.7v0.6h-0.7zM536.4 182.1h1.2v1.0h-1.2zM537.1 61.9h0.7v1.3h-0.7zM535.2 104.6h0.9v0.7h-0.9zM536.4 68.7h0.7v1.3h-0.7zM535.4 208.6h0.6v1.3h-0.6zM536.8 166.4h0.6v0.5h-0.6zM537.0 89.7h0.7v1.2h-0.7zM537.3 69.0h1.3v0.9h-1.3zM536.0 78.5h0.8v1.3h-0.8zM535.7 82.4h0.6v0.6h-0.6zM535.9 210.1h0.6v0.7h-0.6zM537.4 223.5h1.3v0.7h-1.3zM535.9 216.0h0.9v1.1h-0.9zM535.8 64.5h0.8v1.1h-0.8zM537.0 153.7h0.9v0.9h-0.9zM536.1 148.1h1.2v0.7h-1.2zM536.5 213.0h1.2v0.6h-1.2zM537.5 197.9h0.6v0.7h-0.6zM535.5 69.6h1.3v0.8h-1.3zM537.3 79.7h0.5v1.2h-0.5zM537.1 222.6h1.0v0.9h-1.0zM537.0 76.1h0.9v0.9h-0.9zM535.4 158.9h0.8v0.9h-0.8zM536.0 112.9h0.8v1.0h-0.8zM537.5 213.6h1.2v1.2h-1.2zM535.7 220.2h0.7v0.6h-0.7zM536.3 180.4h0.8v1.0h-0.8zM535.7 218.6h0.9v0.9h-0.9zM536.4 203.6h1.3v0.9h-1.3zM536.1 161.7h0.6v0.8h-0.6zM537.2 187.7h0.5v1.2h-0.5zM536.0 220.9h0.8v0.7h-0.8zM536.4 205.1h0.8v1.2h-0.8zM536.8 119.9h0.7v0.9h-0.7zM536.0 121.7h1.0v1.2h-1.0zM536.5 84.8h0.7v0.8h-0.7zM536.6 83.7h0.6v0.8h-0.6zM535.7 65.8h0.9v1.2h-0.9zM536.4 181.2h1.2v1.2h-1.2zM537.4 132.9h1.0v0.6h-1.0zM537.3 122.7h0.9v1.2h-0.9zM535.7 92.0h1.2v1.0h-1.2zM535.2 65.6h0.8v0.5h-0.8zM537.2 90.9h0.7v0.8h-0.7zM536.3 131.5h1.0v1.0h-1.0zM536.1 76.8h1.3v1.1h-1.3zM535.2 133.0h1.1v1.3h-1.1zM535.2 62.5h0.9v0.8h-0.9zM537.3 195.7h0.8v0.8h-0.8zM536.5 205.1h0.7v0.8h-0.7zM535.2 165.5h0.5v1.2h-0.5zM536.4 154.5h0.6v0.7h-0.6zM536.2 200.8h0.9v0.7h-0.9zM537.6 168.8h0.9v0.7h-0.9zM535.8 207.7h0.6v0.9h-0.6zM536.6 118.8h1.1v1.2h-1.1zM537.2 181.3h0.7v0.5h-0.7zM536.1 111.9h0.7v1.2h-0.7zM535.6 195.1h1.3v0.6h-1.3zM537.4 125.7h0.7v0.6h-0.7zM535.1 142.3h0.8v1.2h-0.8zM537.2 70.3h0.8v0.8h-0.8zM535.5 101.9h0.7v1.1h-0.7zM535.9 79.1h0.7v0.9h-0.7zM536.5 101.0h1.1v0.7h-1.1zM536.7 160.3h0.6v1.1h-0.6zM536.0 148.9h1.0v1.0h-1.0zM536.2 70.1h1.1v1.2h-1.1zM536.3 155.4h0.7v1.2h-0.7zM536.8 97.2h1.2v1.3h-1.2zM535.9 223.3h0.9v0.6h-0.9zM536.9 116.2h1.1v1.0h-1.1zM535.3 147.1h1.2v0.9h-1.2zM536.4 201.7h0.9v0.9h-0.9zM536.5 195.3h0.7v0.6h-0.7zM537.0 151.1h0.7v1.2h-0.7zM537.3 149.3h1.3v1.2h-1.3zM536.9 108.5h0.5v1.0h-0.5zM536.9 118.2h0.9v1.0h-0.9zM535.6 174.7h1.0v0.8h-1.0zM535.3 151.3h0.8v1.1h-0.8zM535.4 125.3h0.7v0.8h-0.7zM536.5 78.4h0.5v0.9h-0.5zM535.5 143.3h0.6v0.6h-0.6zM536.4 211.5h1.2v0.9h-1.2zM536.0 71.8h0.7v0.8h-0.7zM537.4 80.1h1.3v0.9h-1.3zM536.1 103.8h1.3v0.6h-1.3zM536.5 144.3h0.7v0.7h-0.7zM537.6 189.9h1.1v1.2h-1.1zM535.3 175.7h1.1v0.7h-1.1zM536.2 219.8h0.8v1.1h-0.8zM535.4 169.8h0.7v0.9h-0.7zM536.0 202.9h1.1v0.9h-1.1z" fill="#333"/>
<path d="M536 62V222" stroke="#555" stroke-width="0.8" stroke-dasharray="1.2 0.8"/>
<rect x="535.20" y="62.00" width="2.80" height="8.00" fill="#fff" stroke="#4a4a4a" stroke-width="0.45" />
<rect x="535.20" y="73.00" width="3.20" height="9.00" fill="#fff" stroke="#4a4a4a" stroke-width="0.45" />
<rect x="535.40" y="84.00" width="2.60" height="6.00" fill="#fff" stroke="#4a4a4a" stroke-width="0.45" />
<rect x="535.40" y="120.00" width="2.80" height="8.00" fill="#ddd" stroke="#4a4a4a" stroke-width="0.45" />
<rect x="535.40" y="150.00" width="2.80" height="15.00" fill="#ddd" stroke="#4a4a4a" stroke-width="0.45" />
<rect x="535.20" y="182.00" width="2.40" height="14.00" fill="#fff" stroke="#4a4a4a" stroke-width="0.45" />
<rect x="535.40" y="204.00" width="2.60" height="10.00" fill="#fff" stroke="#4a4a4a" stroke-width="0.45" />
<rect x="535.40" y="95.50" width="8.60" height="0.80" fill="#333" />
<rect x="527.50" y="59.20" width="4.90" height="19.30" fill="#fff" stroke="#4a4a4a" stroke-width="0.5" />
<rect x="521.50" y="58.50" width="6.00" height="10.40" fill="#fff" stroke="#4a4a4a" stroke-width="0.6" />
<rect x="524.20" y="74.80" width="3.70" height="3.80" fill="#111" />
<rect x="525.00" y="70.00" width="2.00" height="4.60" fill="#fff" stroke="#4a4a4a" stroke-width="0.4" />
<rect x="521.50" y="79.20" width="10.10" height="10.40" fill="#fff" stroke="#4a4a4a" stroke-width="0.6" />
<rect x="521.50" y="89.60" width="10.10" height="11.20" fill="#fff" stroke="#4a4a4a" stroke-width="0.6" />
<rect x="521.50" y="100.80" width="10.10" height="6.70" fill="#fff" stroke="#4a4a4a" stroke-width="0.6" />
<rect x="521.50" y="107.50" width="10.10" height="10.50" fill="#fff" stroke="#4a4a4a" stroke-width="0.6" />
<rect x="521.50" y="118.00" width="10.10" height="7.20" fill="#fff" stroke="#4a4a4a" stroke-width="0.6" />
<path d="M530.5 79.2V125.2" stroke="#666" stroke-width="0.45"/>
<rect x="514.80" y="104.00" width="6.70" height="21.70" fill="#fff" />
<path d="M514.8 105.00H521.5M514.8 106.60H521.5M514.8 108.20H521.5M514.8 109.80H521.5M514.8 111.40H521.5M514.8 113.00H521.5M514.8 114.60H521.5M514.8 116.20H521.5M514.8 117.80H521.5M514.8 119.40H521.5M514.8 121.00H521.5M514.8 122.60H521.5M514.8 124.20H521.5" stroke="#111" stroke-width="0.75"/>
<rect x="514.80" y="125.70" width="12.90" height="43.60" fill="#fff" />
<path d="M514.8 125.70H527.7M514.8 127.30H527.7M514.8 128.90H527.7M514.8 130.50H527.7M514.8 132.10H527.7M514.8 133.70H527.7M514.8 135.30H527.7M514.8 136.90H527.7M514.8 138.50H527.7M514.8 140.10H527.7M514.8 141.70H527.7M514.8 143.30H527.7M514.8 144.90H527.7M514.8 146.50H527.7M514.8 148.10H527.7M514.8 149.70H527.7M514.8 151.30H527.7M514.8 152.90H527.7M514.8 154.50H527.7M514.8 156.10H527.7M514.8 157.70H527.7M514.8 159.30H527.7M514.8 160.90H527.7M514.8 162.50H527.7M514.8 164.10H527.7M514.8 165.70H527.7M514.8 167.30H527.7M514.8 168.90H527.7" stroke="#111" stroke-width="0.75"/>
<rect x="514.80" y="169.30" width="8.40" height="7.90" fill="#fff" />
<path d="M514.8 169.30H523.0M514.8 170.90H523.0M514.8 172.50H523.0M514.8 174.10H523.0M514.8 175.70H523.0" stroke="#111" stroke-width="0.75"/>
<rect x="527.70" y="130.70" width="4.90" height="14.80" fill="#fff" stroke="#4a4a4a" stroke-width="0.5" />
<rect x="527.70" y="150.00" width="4.90" height="16.00" fill="#fff" stroke="#4a4a4a" stroke-width="0.5" />
<rect x="529.00" y="125.20" width="3.60" height="5.50" fill="#fff" stroke="#4a4a4a" stroke-width="0.45" />
<path d="M523 168 L532 160" stroke="#444" stroke-width="0.5"/>
<rect x="503.00" y="104.00" width="11.80" height="73.20" fill="#fff" stroke="#4a4a4a" stroke-width="0.6" />
<path d="M503.9 104.3V177M505.3 104.3V177M508.3 104.3V177M509.9 104.3V177M512.8 104.3V177" stroke="#555" stroke-width="0.5"/>
<rect x="503.00" y="104.00" width="11.80" height="2.00" fill="#fff" stroke="#2a2a2a" stroke-width="0.55" />
<rect x="503.00" y="108.90" width="11.80" height="3.40" fill="#fff" stroke="#2a2a2a" stroke-width="0.55" />
<rect x="503.00" y="168.30" width="11.80" height="3.00" fill="#fff" stroke="#2a2a2a" stroke-width="0.55" />
<rect x="503.00" y="175.20" width="11.80" height="2.00" fill="#fff" stroke="#2a2a2a" stroke-width="0.55" />
<path d="M510.0 110.4h1.2v0.8h-1.2zM508.9 110.6h0.9v0.6h-0.9zM505.8 110.7h0.7v1.1h-0.7zM508.5 111.1h1.2v1.1h-1.2zM507.5 109.9h1.0v1.1h-1.0zM512.0 110.1h0.7v1.3h-0.7zM510.5 110.5h1.1v0.7h-1.1zM508.9 110.7h1.0v0.7h-1.0zM505.5 110.7h1.2v0.7h-1.2zM504.5 109.9h1.1v0.9h-1.1zM508.1 111.2h1.0v0.8h-1.0zM510.1 109.8h0.8v1.1h-0.8zM505.8 109.8h1.0v0.8h-1.0zM512.4 109.9h1.2v0.9h-1.2zM511.0 110.4h1.1v0.8h-1.1zM506.2 110.4h1.2v0.8h-1.2z" fill="#111"/>
<path d="M506.3 169.7h0.7v0.8h-0.7zM509.1 169.9h1.0v0.8h-1.0zM504.6 169.1h0.8v0.7h-0.8zM509.1 169.5h1.1v1.0h-1.1zM509.8 170.1h1.0v0.9h-1.0zM506.9 169.2h1.2v1.0h-1.2zM505.2 170.4h1.0v1.0h-1.0zM508.0 169.3h1.3v0.7h-1.3zM507.4 170.5h0.7v0.9h-0.7zM508.3 169.4h1.2v0.9h-1.2zM504.5 169.8h0.6v1.1h-0.6zM511.5 170.4h0.6v1.1h-0.6zM506.9 169.8h0.8v0.8h-0.8zM505.5 170.0h0.7v1.3h-0.7zM504.8 170.4h0.7v0.7h-0.7zM510.5 169.8h1.1v1.0h-1.1z" fill="#111"/>
<rect x="523.00" y="176.20" width="10.30" height="47.60" fill="#fff" stroke="#4a4a4a" stroke-width="0.6" />
<rect x="518.00" y="200.70" width="5.00" height="23.10" fill="#fff" stroke="#4a4a4a" stroke-width="0.55" />
<rect x="530.00" y="178.00" width="2.40" height="40.00" fill="none" stroke="#777" stroke-width="0.4" />
<path d="M531.5 183.1h0.8v0.8h-0.8zM532.1 180.2h0.5v0.8h-0.5zM532.1 196.0h0.9v0.8h-0.9zM531.0 197.7h0.8v0.5h-0.8zM530.8 208.0h0.6v0.7h-0.6zM530.7 193.6h0.8v0.9h-0.8zM532.1 198.1h0.6v0.7h-0.6zM530.3 189.1h0.8v0.8h-0.8zM530.7 186.9h0.5v0.6h-0.5zM531.2 189.7h0.9v0.8h-0.9zM530.9 196.4h0.5v0.9h-0.5zM531.7 193.8h0.9v0.6h-0.9zM530.6 188.7h0.6v0.8h-0.6zM531.5 207.7h0.6v0.9h-0.6zM531.2 194.4h0.8v0.7h-0.8zM530.6 195.0h0.8v0.9h-0.8zM532.0 187.4h0.9v0.9h-0.9zM531.6 217.2h0.6v0.9h-0.6z" fill="#222"/>
<rect x="523.60" y="211.00" width="7.40" height="2.60" fill="#fff" stroke="#4a4a4a" stroke-width="0.45" />
<rect x="523.60" y="214.60" width="7.40" height="3.00" fill="#fff" stroke="#4a4a4a" stroke-width="0.45" />
<rect x="523.40" y="218.60" width="9.60" height="5.20" fill="#8a8a8a" stroke="#4a4a4a" stroke-width="0.45" />
<rect x="526.80" y="224.60" width="3.80" height="3.00" fill="#111" />
</g><defs>
<pattern id="hw" width="1.3" height="1.3" patternUnits="userSpaceOnUse" patternTransform="rotate(-45)"><rect width="1.3" height="1.3" fill="#ff0000"/><rect width="0.6" height="1.3" fill="#fff"/></pattern>
<pattern id="hw2" width="1.3" height="1.3" patternUnits="userSpaceOnUse" patternTransform="rotate(45)"><rect width="1.3" height="1.3" fill="#ff0000"/><rect width="0.6" height="1.3" fill="#fff"/></pattern>
<pattern id="hv" width="1.4" height="1.4" patternUnits="userSpaceOnUse"><rect width="1.4" height="1.4" fill="#ff0000"/><rect width="0.7" height="1.4" fill="#fff"/></pattern>
</defs>
<g id="pcb">
<text x="166.6" y="80" font-size="4.2" fill="#222" textLength="52.5" lengthAdjust="spacingAndGlyphs">View from Top side (Scale 1:1)</text>
<path d="M166.4 80.6H351.4V239.9H303.6V244.6H166.4Z" fill="#ff0000"/>
<path d="M249.9 169.8h.7v.7h-.7zM335.3 155.2h.7v.7h-.7zM259.9 174.0h.7v.7h-.7zM201.4 162.3h.7v.7h-.7zM282.0 205.9h.7v.7h-.7zM185.0 130.0h.7v.7h-.7zM184.4 208.5h.7v.7h-.7zM293.5 89.5h.7v.7h-.7zM345.8 232.5h.7v.7h-.7zM286.4 178.4h.7v.7h-.7zM196.5 85.3h.7v.7h-.7zM263.6 92.2h.7v.7h-.7zM202.4 120.5h.7v.7h-.7zM173.4 154.9h.7v.7h-.7zM247.7 213.6h.7v.7h-.7zM262.0 182.2h.7v.7h-.7zM258.5 185.7h.7v.7h-.7zM250.8 126.1h.7v.7h-.7zM348.6 237.3h.7v.7h-.7zM320.1 192.7h.7v.7h-.7zM225.1 118.6h.7v.7h-.7zM220.3 93.9h.7v.7h-.7zM306.7 145.1h.7v.7h-.7zM321.2 142.9h.7v.7h-.7zM341.4 214.3h.7v.7h-.7zM168.1 115.5h.7v.7h-.7zM332.8 155.8h.7v.7h-.7zM345.4 144.6h.7v.7h-.7zM181.2 180.6h.7v.7h-.7zM308.9 124.8h.7v.7h-.7zM183.8 134.6h.7v.7h-.7zM342.5 200.5h.7v.7h-.7zM189.4 121.2h.7v.7h-.7zM186.3 92.3h.7v.7h-.7zM312.3 110.5h.7v.7h-.7zM269.2 152.4h.7v.7h-.7zM202.5 196.4h.7v.7h-.7zM191.7 182.8h.7v.7h-.7zM189.1 148.2h.7v.7h-.7zM206.5 124.8h.7v.7h-.7zM343.7 207.5h.7v.7h-.7zM223.1 220.2h.7v.7h-.7zM206.1 144.1h.7v.7h-.7zM322.6 182.5h.7v.7h-.7zM186.2 236.3h.7v.7h-.7zM206.6 123.0h.7v.7h-.7zM307.9 134.0h.7v.7h-.7zM221.6 94.4h.7v.7h-.7zM184.3 173.3h.7v.7h-.7zM212.0 176.2h.7v.7h-.7zM235.3 153.2h.7v.7h-.7zM341.6 158.0h.7v.7h-.7zM272.0 217.3h.7v.7h-.7zM201.1 106.9h.7v.7h-.7zM332.4 209.8h.7v.7h-.7zM213.2 112.4h.7v.7h-.7zM301.8 228.8h.7v.7h-.7zM203.6 230.3h.7v.7h-.7zM327.7 176.5h.7v.7h-.7zM244.3 99.1h.7v.7h-.7zM175.0 232.2h.7v.7h-.7zM211.2 192.2h.7v.7h-.7zM214.5 210.7h.7v.7h-.7zM276.0 128.5h.7v.7h-.7zM199.8 194.7h.7v.7h-.7zM180.4 118.4h.7v.7h-.7zM269.2 215.1h.7v.7h-.7zM279.2 126.4h.7v.7h-.7zM334.0 114.6h.7v.7h-.7zM171.0 124.7h.7v.7h-.7zM248.7 92.4h.7v.7h-.7zM199.9 140.2h.7v.7h-.7zM271.6 103.4h.7v.7h-.7zM233.5 221.1h.7v.7h-.7zM345.5 184.8h.7v.7h-.7zM293.1 173.6h.7v.7h-.7zM193.4 88.4h.7v.7h-.7zM171.2 224.1h.7v.7h-.7zM294.9 232.2h.7v.7h-.7zM171.8 181.6h.7v.7h-.7zM255.3 196.2h.7v.7h-.7zM225.7 237.9h.7v.7h-.7zM181.6 167.6h.7v.7h-.7zM301.4 222.5h.7v.7h-.7zM301.4 192.1h.7v.7h-.7zM311.6 224.8h.7v.7h-.7zM231.7 189.2h.7v.7h-.7zM331.1 218.0h.7v.7h-.7zM243.5 205.5h.7v.7h-.7zM324.3 171.8h.7v.7h-.7zM281.1 142.3h.7v.7h-.7zM273.5 177.4h.7v.7h-.7zM182.5 182.1h.7v.7h-.7zM347.8 219.4h.7v.7h-.7zM299.8 143.2h.7v.7h-.7zM301.0 173.0h.7v.7h-.7zM247.7 212.9h.7v.7h-.7zM183.2 199.3h.7v.7h-.7zM173.4 176.2h.7v.7h-.7zM255.1 118.7h.7v.7h-.7zM294.4 160.1h.7v.7h-.7zM279.2 225.7h.7v.7h-.7zM214.3 84.8h.7v.7h-.7zM222.5 188.1h.7v.7h-.7zM204.7 109.3h.7v.7h-.7zM331.9 185.3h.7v.7h-.7zM248.0 221.2h.7v.7h-.7zM227.2 186.2h.7v.7h-.7zM203.9 149.8h.7v.7h-.7zM313.9 224.7h.7v.7h-.7zM327.3 142.6h.7v.7h-.7zM273.5 132.1h.7v.7h-.7zM192.6 160.0h.7v.7h-.7zM319.5 214.6h.7v.7h-.7zM296.7 230.3h.7v.7h-.7zM218.1 109.2h.7v.7h-.7zM249.6 125.7h.7v.7h-.7zM206.7 147.2h.7v.7h-.7zM281.3 159.6h.7v.7h-.7zM225.1 213.1h.7v.7h-.7zM345.7 153.1h.7v.7h-.7zM181.5 87.9h.7v.7h-.7zM326.0 89.4h.7v.7h-.7zM296.3 171.4h.7v.7h-.7zM223.9 205.7h.7v.7h-.7zM171.5 104.1h.7v.7h-.7zM250.3 86.8h.7v.7h-.7zM318.2 119.8h.7v.7h-.7zM193.5 90.3h.7v.7h-.7zM281.9 152.2h.7v.7h-.7zM282.0 184.5h.7v.7h-.7zM314.1 231.6h.7v.7h-.7zM291.9 113.9h.7v.7h-.7zM254.0 110.7h.7v.7h-.7zM169.9 156.2h.7v.7h-.7zM297.3 110.8h.7v.7h-.7zM217.3 136.6h.7v.7h-.7zM294.2 163.7h.7v.7h-.7zM279.2 200.2h.7v.7h-.7zM239.2 205.7h.7v.7h-.7zM332.0 96.5h.7v.7h-.7zM336.8 195.0h.7v.7h-.7zM191.5 153.3h.7v.7h-.7zM281.2 224.0h.7v.7h-.7zM236.2 171.2h.7v.7h-.7zM327.2 206.5h.7v.7h-.7zM338.9 154.9h.7v.7h-.7zM285.9 114.8h.7v.7h-.7zM298.7 209.8h.7v.7h-.7zM284.1 194.2h.7v.7h-.7zM206.6 222.5h.7v.7h-.7zM345.5 234.5h.7v.7h-.7zM265.2 205.6h.7v.7h-.7zM226.0 224.0h.7v.7h-.7zM322.9 137.0h.7v.7h-.7zM183.0 151.3h.7v.7h-.7zM267.6 202.1h.7v.7h-.7zM256.2 87.4h.7v.7h-.7zM314.5 92.9h.7v.7h-.7zM312.8 109.8h.7v.7h-.7zM228.6 205.1h.7v.7h-.7zM193.4 106.0h.7v.7h-.7zM261.5 195.2h.7v.7h-.7zM320.0 189.9h.7v.7h-.7zM339.2 159.4h.7v.7h-.7zM339.8 96.3h.7v.7h-.7zM208.1 164.6h.7v.7h-.7zM220.5 196.0h.7v.7h-.7zM283.6 164.0h.7v.7h-.7zM320.7 169.8h.7v.7h-.7zM224.4 142.1h.7v.7h-.7zM321.0 222.6h.7v.7h-.7zM205.7 214.9h.7v.7h-.7zM343.3 164.3h.7v.7h-.7zM271.7 114.1h.7v.7h-.7zM265.0 161.0h.7v.7h-.7zM277.5 87.3h.7v.7h-.7zM343.5 163.0h.7v.7h-.7zM240.5 207.2h.7v.7h-.7zM269.9 159.1h.7v.7h-.7zM293.1 93.2h.7v.7h-.7zM265.5 147.1h.7v.7h-.7zM341.2 226.1h.7v.7h-.7zM216.7 156.3h.7v.7h-.7zM191.0 150.2h.7v.7h-.7zM315.6 222.6h.7v.7h-.7zM254.3 132.2h.7v.7h-.7zM202.7 178.8h.7v.7h-.7zM335.5 103.1h.7v.7h-.7zM309.1 86.5h.7v.7h-.7zM203.1 118.2h.7v.7h-.7zM292.4 132.9h.7v.7h-.7zM232.3 179.1h.7v.7h-.7zM187.0 196.3h.7v.7h-.7zM190.2 162.1h.7v.7h-.7zM213.4 113.6h.7v.7h-.7zM264.0 150.7h.7v.7h-.7zM236.0 147.1h.7v.7h-.7zM263.8 107.8h.7v.7h-.7zM205.0 180.9h.7v.7h-.7zM283.6 165.1h.7v.7h-.7zM322.1 177.8h.7v.7h-.7zM323.1 119.1h.7v.7h-.7zM302.1 208.6h.7v.7h-.7zM331.4 132.0h.7v.7h-.7zM225.0 226.0h.7v.7h-.7zM207.5 237.7h.7v.7h-.7zM328.6 103.8h.7v.7h-.7zM211.3 195.6h.7v.7h-.7zM215.0 98.0h.7v.7h-.7zM318.6 148.4h.7v.7h-.7zM311.0 102.5h.7v.7h-.7zM240.9 189.2h.7v.7h-.7zM171.2 114.1h.7v.7h-.7zM291.5 224.3h.7v.7h-.7zM343.3 100.9h.7v.7h-.7zM259.5 200.5h.7v.7h-.7zM259.0 189.3h.7v.7h-.7zM202.2 93.9h.7v.7h-.7zM187.2 88.8h.7v.7h-.7zM267.9 162.8h.7v.7h-.7zM270.9 105.7h.7v.7h-.7zM201.4 114.6h.7v.7h-.7zM320.1 236.5h.7v.7h-.7zM335.8 97.8h.7v.7h-.7zM179.2 230.5h.7v.7h-.7zM251.6 201.5h.7v.7h-.7zM227.2 155.4h.7v.7h-.7zM261.3 149.7h.7v.7h-.7zM276.8 85.1h.7v.7h-.7zM294.9 213.9h.7v.7h-.7zM200.8 153.4h.7v.7h-.7zM301.8 145.8h.7v.7h-.7zM203.3 108.6h.7v.7h-.7zM260.8 85.4h.7v.7h-.7zM329.7 207.3h.7v.7h-.7zM295.5 216.4h.7v.7h-.7zM281.9 145.7h.7v.7h-.7zM276.5 161.2h.7v.7h-.7zM345.9 207.7h.7v.7h-.7zM214.7 224.3h.7v.7h-.7zM302.7 203.6h.7v.7h-.7zM315.5 145.9h.7v.7h-.7zM330.3 219.4h.7v.7h-.7zM293.8 201.9h.7v.7h-.7zM306.5 145.9h.7v.7h-.7zM298.8 93.9h.7v.7h-.7zM229.9 155.7h.7v.7h-.7zM169.9 138.1h.7v.7h-.7zM283.6 179.7h.7v.7h-.7zM210.0 229.4h.7v.7h-.7zM288.6 135.4h.7v.7h-.7zM287.4 171.3h.7v.7h-.7zM264.5 143.4h.7v.7h-.7zM349.0 182.6h.7v.7h-.7zM294.9 201.1h.7v.7h-.7zM345.4 86.5h.7v.7h-.7zM279.4 197.5h.7v.7h-.7zM214.5 145.2h.7v.7h-.7zM177.1 113.3h.7v.7h-.7zM236.0 98.3h.7v.7h-.7zM213.4 223.4h.7v.7h-.7zM267.6 161.7h.7v.7h-.7zM343.1 171.0h.7v.7h-.7zM348.1 181.9h.7v.7h-.7zM314.5 94.8h.7v.7h-.7zM276.2 200.7h.7v.7h-.7zM176.2 227.2h.7v.7h-.7zM196.9 156.1h.7v.7h-.7zM198.6 159.8h.7v.7h-.7zM278.6 92.1h.7v.7h-.7zM339.1 148.2h.7v.7h-.7zM263.3 175.7h.7v.7h-.7zM234.2 127.3h.7v.7h-.7zM286.6 169.9h.7v.7h-.7zM219.3 194.1h.7v.7h-.7zM221.6 85.2h.7v.7h-.7zM212.3 89.6h.7v.7h-.7zM196.3 200.0h.7v.7h-.7zM238.6 222.1h.7v.7h-.7zM303.5 90.8h.7v.7h-.7zM347.0 229.4h.7v.7h-.7zM181.3 223.4h.7v.7h-.7zM245.7 157.0h.7v.7h-.7zM344.1 120.8h.7v.7h-.7zM262.7 228.3h.7v.7h-.7zM298.8 155.6h.7v.7h-.7zM345.2 209.6h.7v.7h-.7zM277.3 100.8h.7v.7h-.7zM281.0 153.6h.7v.7h-.7zM204.9 91.1h.7v.7h-.7zM263.6 102.3h.7v.7h-.7zM248.2 186.5h.7v.7h-.7zM250.5 123.6h.7v.7h-.7zM273.4 148.0h.7v.7h-.7zM308.8 165.3h.7v.7h-.7zM348.6 230.7h.7v.7h-.7zM300.9 120.0h.7v.7h-.7zM188.6 221.4h.7v.7h-.7zM310.0 179.9h.7v.7h-.7zM233.0 125.1h.7v.7h-.7zM292.0 170.6h.7v.7h-.7zM275.1 181.1h.7v.7h-.7zM304.4 112.4h.7v.7h-.7zM213.1 234.9h.7v.7h-.7zM333.7 219.2h.7v.7h-.7zM175.2 92.4h.7v.7h-.7zM217.0 148.9h.7v.7h-.7zM280.8 98.9h.7v.7h-.7zM266.0 94.2h.7v.7h-.7zM183.6 187.8h.7v.7h-.7zM267.7 180.8h.7v.7h-.7zM235.5 157.2h.7v.7h-.7zM206.1 136.3h.7v.7h-.7zM302.8 213.0h.7v.7h-.7zM181.5 101.6h.7v.7h-.7zM314.5 179.7h.7v.7h-.7zM307.1 116.0h.7v.7h-.7zM244.8 123.0h.7v.7h-.7zM314.6 140.2h.7v.7h-.7zM286.3 236.3h.7v.7h-.7zM226.9 168.0h.7v.7h-.7zM303.0 225.7h.7v.7h-.7zM245.4 140.2h.7v.7h-.7zM185.6 218.7h.7v.7h-.7zM182.2 95.9h.7v.7h-.7zM270.1 158.2h.7v.7h-.7zM292.0 129.3h.7v.7h-.7zM308.4 94.8h.7v.7h-.7zM206.6 185.6h.7v.7h-.7z" fill="#d80000"/>
<path d="M182.8 130.8v8.1M219.2 106.0v5.5M234.3 102.1v8.0M334.3 228.8h9.4M313.4 130.9h5.2M337.2 221.8h4.7M234.2 140.0h5.8M203.3 170.8v8.6M319.4 170.7v4.2M327.4 127.3v3.2M266.5 171.4v9.8M313.6 93.9v6.8M183.2 96.6v8.2M183.3 181.7v4.0M285.5 121.8v4.5M262.4 201.8h5.8M343.3 187.5v6.5M298.5 193.1h9.4M317.5 186.7v9.0M318.9 220.9v9.7M262.8 193.4h8.6M244.1 106.5v8.2M236.0 109.8h4.4M220.9 233.3h3.4M188.8 183.8h8.4M179.3 154.6v7.1M174.6 100.7h4.3M210.6 194.5h7.2M201.5 127.3v4.2M224.4 168.4h8.7M215.1 220.7h9.4M267.1 231.4h6.4M177.0 229.9h8.6M263.5 163.4v4.9M287.0 120.6h3.1M235.3 206.7v8.0M196.5 108.2h5.3M325.3 163.5v7.5M216.2 166.3v4.1M168.2 210.5v8.9M182.9 125.6h8.0M254.9 156.2v9.7M323.2 130.8h8.5M333.9 98.0h8.8M266.4 165.0v4.1M224.4 131.9h3.5M252.6 194.1v5.5M187.1 144.7v6.2M318.2 184.7h3.1M296.5 120.6h6.9M169.9 236.7h8.6M279.5 128.7v5.6M222.0 136.0v5.7M214.4 114.8h8.1M339.1 170.7h8.1M317.7 98.2h4.0M290.7 193.1h4.3M319.5 175.3h3.6M196.4 103.1h5.8M334.6 149.8v6.6" stroke="#e00000" stroke-width="0.5" fill="none"/>
<rect x="175.20" y="87.60" width="1.50" height="25.40" fill="#1aa2e2" />
<path d="M174.29999999999998 87.6V113M177.5 87.6V113" stroke="#000" stroke-width="0.6" stroke-dasharray="0.8 0.7"/>
<rect x="183.20" y="85.60" width="1.50" height="29.40" fill="#1aa2e2" />
<path d="M182.29999999999998 85.6V115M185.5 85.6V115" stroke="#000" stroke-width="0.6" stroke-dasharray="0.8 0.7"/>
<rect x="175.00" y="84.40" width="2.40" height="1.80" fill="#1aa2e2" />
<rect x="175.00" y="115.00" width="3.00" height="2.60" fill="#1aa2e2" />
<rect x="182.00" y="84.60" width="2.00" height="1.60" fill="#0a2a44" />
<rect x="184.00" y="104.00" width="1.20" height="6.00" fill="#000" />
<path d="M178 100 q2 4 0 9 M180 96 q2 6 0 14" stroke="#ff9a9a" stroke-width="0.4" fill="none"/>
<rect x="168.60" y="117.20" width="2.00" height="1.60" fill="#b0b828" />
<rect x="171.20" y="117.20" width="1.40" height="1.60" fill="#b0b828" />
<path d="M185 94.6 H201 L209.8 104.4 V115.6 L214 119.6 M187 97 H199.9 L207.9 105 V113.2 M190.6 97 L196.8 103.8 H207.3 M185 100.4 L191 100.4 L204 114.6 L204 116.6 L209 121" fill="none" stroke="#fff" stroke-width="0.9"/>
<path d="M186 112 L199 112.6 L212 116 L233 124.4 M186 114 L199 114.4 L211 117.6 L232 126 M200 117 L210 119.4 L231 127.6" fill="none" stroke="#fff" stroke-width="0.75"/>
<circle cx="204.8" cy="88" r="1.1" fill="#fff"/>
<circle cx="204.8" cy="113.2" r="1.1" fill="#fff"/>
<rect x="167.50" y="81.70" width="4.60" height="4.60" fill="#4f8a1e" />
<circle cx="169.8" cy="84" r="1.5" fill="none" stroke="#fff" stroke-width="0.6"/><circle cx="169.8" cy="84" r="0.7" fill="#fff"/>
<rect x="345.50" y="81.00" width="4.60" height="4.60" fill="#4f8a1e" />
<circle cx="347.8" cy="83.3" r="1.5" fill="none" stroke="#fff" stroke-width="0.6"/><circle cx="347.8" cy="83.3" r="0.7" fill="#fff"/>
<rect x="167.30" y="238.30" width="4.60" height="4.60" fill="#4f8a1e" />
<circle cx="169.6" cy="240.6" r="1.5" fill="none" stroke="#fff" stroke-width="0.6"/><circle cx="169.6" cy="240.6" r="0.7" fill="#fff"/>
<rect x="345.50" y="233.70" width="4.60" height="4.60" fill="#4f8a1e" />
<circle cx="347.8" cy="236" r="1.5" fill="none" stroke="#fff" stroke-width="0.6"/><circle cx="347.8" cy="236" r="0.7" fill="#fff"/>
<rect x="210.85" y="96.60" width="7.40" height="7.40" fill="#3f8a1c" />
<circle cx="214.55" cy="100.3" r="3.4" fill="#140c08"/><circle cx="214.55" cy="100.3" r="2.35" fill="none" stroke="#e01010" stroke-width="0.75"/><circle cx="214.55" cy="100.3" r="1.5" fill="#140c08"/><circle cx="214.55" cy="100.3" r="0.65" fill="#e00000"/>
<rect x="220.10" y="96.60" width="7.40" height="7.40" fill="#3f8a1c" />
<circle cx="223.8" cy="100.3" r="3.4" fill="#140c08"/><circle cx="223.8" cy="100.3" r="2.35" fill="none" stroke="#e01010" stroke-width="0.75"/><circle cx="223.8" cy="100.3" r="1.5" fill="#140c08"/><circle cx="223.8" cy="100.3" r="0.65" fill="#e00000"/>
<rect x="210.85" y="106.50" width="7.40" height="7.40" fill="#3f8a1c" />
<circle cx="214.55" cy="110.2" r="3.4" fill="#140c08"/><circle cx="214.55" cy="110.2" r="2.35" fill="none" stroke="#e01010" stroke-width="0.75"/><circle cx="214.55" cy="110.2" r="1.5" fill="#140c08"/><circle cx="214.55" cy="110.2" r="0.65" fill="#e00000"/>
<rect x="214.90" y="88.90" width="5.40" height="5.90" fill="#4a4a14" />
<rect x="215.60" y="89.60" width="4.00" height="1.60" fill="#9a5a1a" />
<rect x="215.60" y="92.40" width="4.00" height="1.40" fill="#2a5a1a" />
<rect x="221.30" y="88.90" width="5.40" height="5.90" fill="#4a0808" />
<rect x="222.40" y="90.00" width="3.20" height="3.60" fill="#c01010" />
<rect x="216.80" y="86.40" width="9.40" height="2.00" fill="#0a0606" />
<rect x="208.00" y="87.20" width="9.00" height="0.60" fill="#0a0606" />
<rect x="220.00" y="109.40" width="22.00" height="0.90" fill="#0a0606" />
<rect x="222.00" y="109.00" width="4.00" height="3.50" fill="#1a8ac4" />
<rect x="230.70" y="108.60" width="4.30" height="3.40" fill="#1a8ac4" />
<rect x="235.00" y="110.00" width="3.00" height="3.00" fill="#0a0606" />
<rect x="227.40" y="104.00" width="0.60" height="5.00" fill="#0a0606" />
<rect x="229.00" y="96.50" width="4.60" height="4.50" fill="#1a8ac4" />
<rect x="232.00" y="101.00" width="4.00" height="3.00" fill="#0c5a8c" />
<rect x="231.00" y="104.00" width="5.00" height="3.40" fill="#0a0606" />
<rect x="229.60" y="100.60" width="1.60" height="4.00" fill="#0a0606" />
<rect x="235.60" y="97.60" width="1.20" height="4.00" fill="#0a0606" />
<path d="M235.7 112.1h0.8v0.8h-0.8zM232.1 94.3h0.9v1.1h-0.9zM237.8 111.4h1.1v1.0h-1.1zM228.2 101.3h0.8v1.1h-0.8zM229.1 102.3h1.0v1.2h-1.0zM236.3 107.5h0.6v1.2h-0.6zM237.0 106.1h0.8v1.0h-0.8zM229.4 109.7h1.4v1.0h-1.4zM235.2 112.4h0.7v1.4h-0.7zM234.3 98.4h0.6v0.7h-0.6zM233.8 109.3h0.8v1.3h-0.8zM231.6 104.2h0.6v1.4h-0.6zM229.4 113.9h1.0v1.0h-1.0zM233.6 99.8h1.3v1.4h-1.3zM236.2 107.2h0.6v1.2h-0.6zM230.9 113.7h0.7v1.0h-0.7z" fill="#0a0606"/>
<rect x="231.50" y="83.40" width="39.80" height="6.80" fill="#0a0804" />
<rect x="273.50" y="83.40" width="11.40" height="6.80" fill="#0a0804" />
<path d="M232.6 84.2h0.9v1h-0.9zM234.5 84.2h0.9v1h-0.9zM236.4 84.2h0.9v1h-0.9zM238.3 84.2h0.9v1h-0.9zM240.2 84.2h0.9v1h-0.9zM242.1 84.2h0.9v1h-0.9zM244.0 84.2h0.9v1h-0.9zM245.9 84.2h0.9v1h-0.9zM247.8 84.2h0.9v1h-0.9zM249.7 84.2h0.9v1h-0.9zM251.6 84.2h0.9v1h-0.9zM253.5 84.2h0.9v1h-0.9zM255.4 84.2h0.9v1h-0.9zM257.3 84.2h0.9v1h-0.9zM259.2 84.2h0.9v1h-0.9zM261.1 84.2h0.9v1h-0.9zM263.0 84.2h0.9v1h-0.9zM264.9 84.2h0.9v1h-0.9zM266.8 84.2h0.9v1h-0.9zM268.7 84.2h0.9v1h-0.9zM274.6 84.2h0.9v1h-0.9zM276.5 84.2h0.9v1h-0.9zM278.4 84.2h0.9v1h-0.9zM280.3 84.2h0.9v1h-0.9zM282.2 84.2h0.9v1h-0.9z" fill="#6a6a1a"/>
<rect x="230.20" y="84.00" width="0.80" height="5.00" fill="#fff" />
<rect x="272.00" y="85.40" width="1.00" height="2.60" fill="#fff" />
<path d="M233.6 90.4v5.6M237.5 90.4v5.6M241.4 90.4v5.6M245.3 90.4v5.6M249.2 90.4v5.6M253.1 90.4v5.6M257.0 90.4v5.6M260.9 90.4v5.6M264.8 90.4v5.6M268.7 90.4v5.6" stroke="#1a0000" stroke-width="1.3"/>
<path d="M235.5 92v11M239.4 92v11M243.3 92v11M247.2 92v11M251.1 92v11M255.0 92v11M258.9 92v11M262.8 92v11M266.7 92v11M270.6 92v11" stroke="#fff" stroke-width="0.8"/>
<path d="M238 97 H266 V107.4 L278 119.4 V131 H270.4 V127 L240.6 100 Z" fill="url(#hw)"/>
<path d="M226 119.4 L245.4 139.6 M227.4 118.6 L246.8 138.8 M224.6 120.2 L244 140.4" stroke="#fff" stroke-width="0.7" fill="none"/>
<rect x="271.40" y="96.20" width="2.60" height="12.00" fill="#0a2a44" />
<rect x="271.80" y="98.00" width="1.80" height="3.00" fill="#1aa2e2" />
<rect x="271.80" y="103.40" width="1.80" height="3.00" fill="#1aa2e2" />
<rect x="175.60" y="121.80" width="4.80" height="3.40" fill="#1aa2e2" stroke="#0a3a5a" stroke-width="0.5"/>
<rect x="194.60" y="117.80" width="3.60" height="2.60" fill="#1aa2e2" />
<rect x="167.00" y="122.20" width="18.00" height="0.50" fill="#0a0606" />
<rect x="184.90" y="122.20" width="1.40" height="73.00" fill="#2088c4" />
<rect x="186.20" y="122.20" width="2.60" height="73.00" fill="#040404" />
<rect x="189.60" y="123.20" width="0.50" height="71.00" fill="#0a6aa0" />
<rect x="193.80" y="122.20" width="0.90" height="73.00" fill="#200000" />
<rect x="194.70" y="122.20" width="1.60" height="73.00" fill="#2498d8" />
<rect x="196.30" y="122.20" width="1.50" height="73.00" fill="#e85858" />
<rect x="197.80" y="122.20" width="1.40" height="73.00" fill="#0a5a84" />
<rect x="199.20" y="122.20" width="2.50" height="73.00" fill="#040404" />
<path d="M197 122.2V195.2" stroke="#ffd0d0" stroke-width="0.6" stroke-dasharray="0.7 1.1"/>
<rect x="206.00" y="122.20" width="1.10" height="73.00" fill="#0c5c88" />
<rect x="207.00" y="122.20" width="1.10" height="73.00" fill="#040404" />
<rect x="208.20" y="122.20" width="0.70" height="73.00" fill="#7ac0e4" />
<rect x="184.00" y="154.90" width="26.00" height="0.90" fill="#e81010" />
<rect x="186.00" y="155.00" width="3.00" height="0.70" fill="#666" />
<rect x="199.00" y="155.00" width="3.00" height="0.70" fill="#666" />
<rect x="189.80" y="121.80" width="1.40" height="1.50" fill="#c8d050" />
<rect x="202.40" y="121.80" width="1.40" height="1.50" fill="#c8d050" />
<path d="M191.7 123.4V134.4M204.7 123.4V135" stroke="#100" stroke-width="0.8" stroke-dasharray="1 0.6"/>
<path d="M180.6 139.0h0.8v0.5h-0.8zM169.4 138.6h1.1v1.1h-1.1zM178.2 147.5h0.9v0.9h-0.9zM174.3 167.4h1.0v0.4h-1.0zM171.8 158.8h0.5v0.7h-0.5zM177.0 138.2h0.8v0.6h-0.8zM177.0 149.2h0.8v0.4h-0.8zM178.4 136.1h1.1v0.8h-1.1zM175.6 154.8h0.8v0.9h-0.8zM179.6 178.6h0.7v1.1h-0.7zM180.7 185.9h0.7v0.7h-0.7zM176.9 189.4h0.8v0.8h-0.8zM175.1 189.3h0.6v0.4h-0.6zM179.2 189.0h0.9v0.8h-0.9zM179.5 147.3h0.8v0.4h-0.8zM170.7 157.3h0.8v0.7h-0.8zM169.7 174.6h0.8v0.6h-0.8zM173.3 153.7h0.6v0.4h-0.6zM181.8 193.7h0.9v1.0h-0.9zM174.9 182.4h0.6v0.9h-0.6zM176.9 189.2h0.5v1.0h-0.5zM170.7 163.6h1.1v0.4h-1.1zM172.4 146.9h0.6v0.4h-0.6zM181.5 183.1h0.7v0.6h-0.7zM177.2 129.2h0.4v1.0h-0.4zM173.3 160.9h1.1v1.1h-1.1zM175.6 140.5h0.6v1.0h-0.6zM181.6 139.7h1.0v0.6h-1.0zM175.6 138.0h1.0v1.1h-1.0zM171.8 170.3h0.5v1.0h-0.5zM169.7 133.4h0.9v0.6h-0.9zM181.6 186.9h0.9v0.5h-0.9zM178.7 191.6h0.7v0.5h-0.7zM172.1 147.5h0.9v0.5h-0.9z" fill="#fff"/>
<path d="M171.5 142.5h1.2v1.4h-1.2zM174.2 172.3h1.5v1.1h-1.5zM172.2 147.1h1.5v1.2h-1.5zM172.9 170.8h0.6v1.6h-0.6zM175.2 163.0h1.1v0.5h-1.1zM177.4 145.9h0.8v1.4h-0.8zM170.2 146.0h1.3v0.8h-1.3zM172.9 164.4h0.7v1.5h-0.7zM182.8 128.4h1.0v1.3h-1.0zM174.4 191.0h1.0v0.7h-1.0zM176.8 171.1h0.9v1.2h-0.9zM180.0 162.2h1.1v1.4h-1.1zM178.6 162.4h1.5v0.7h-1.5zM179.9 137.6h1.2v0.8h-1.2z" fill="#ffb4b4"/>
<path d="M171.6 124.5V196M181.8 124.5V196" stroke="#ff7a7a" stroke-width="0.4" fill="none"/>
<rect x="167.00" y="166.00" width="1.40" height="1.40" fill="#fff" />
<rect x="167.00" y="177.60" width="1.40" height="1.40" fill="#fff" />
<rect x="175.90" y="192.70" width="4.70" height="3.30" fill="#1aa2e2" stroke="#0a3a5a" stroke-width="0.5"/>
<rect x="188.50" y="197.10" width="4.00" height="3.30" fill="#1aa2e2" />
<rect x="167.00" y="196.60" width="22.00" height="0.50" fill="#0a0606" />
<rect x="168.00" y="190.60" width="6.00" height="0.50" fill="#0a0606" />
<circle cx="253.2" cy="162.4" r="36.8" fill="none" stroke="#0c0000" stroke-width="0.95"/><circle cx="253.2" cy="162.4" r="34.6" fill="none" stroke="#0c0000" stroke-width="0.9"/><circle cx="253.2" cy="162.4" r="35.7" fill="none" stroke="#a00000" stroke-width="0.9"/>
<rect x="223.3" y="133" width="60" height="59.2" fill="none" stroke="#300" stroke-width="0.5"/>
<clipPath id="w1"><path d="M253.2 162.4L218.8 160.6A34.4 34.4 0 0 1 221.5 149.0Z"/></clipPath>
<path d="M217.2 126.40h72M217.2 128.10h72M217.2 129.80h72M217.2 131.50h72M217.2 133.20h72M217.2 134.90h72M217.2 136.60h72M217.2 138.30h72M217.2 140.00h72M217.2 141.70h72M217.2 143.40h72M217.2 145.10h72M217.2 146.80h72M217.2 148.50h72M217.2 150.20h72M217.2 151.90h72M217.2 153.60h72M217.2 155.30h72M217.2 157.00h72M217.2 158.70h72M217.2 160.40h72M217.2 162.10h72M217.2 163.80h72M217.2 165.50h72M217.2 167.20h72M217.2 168.90h72M217.2 170.60h72M217.2 172.30h72M217.2 174.00h72M217.2 175.70h72M217.2 177.40h72M217.2 179.10h72M217.2 180.80h72M217.2 182.50h72M217.2 184.20h72M217.2 185.90h72M217.2 187.60h72M217.2 189.30h72M217.2 191.00h72M217.2 192.70h72M217.2 194.40h72M217.2 196.10h72M217.2 197.80h72" stroke="#140000" stroke-width="0.6" fill="none" clip-path="url(#w1)"/>
<path d="M253.2 162.4L218.8 160.6M253.2 162.4L221.5 149.0" stroke="#140000" stroke-width="0.5" fill="none"/>
<clipPath id="w2"><path d="M253.2 162.4L221.5 175.8A34.4 34.4 0 0 1 218.8 164.2Z"/></clipPath>
<path d="M217.2 126.40h72M217.2 128.10h72M217.2 129.80h72M217.2 131.50h72M217.2 133.20h72M217.2 134.90h72M217.2 136.60h72M217.2 138.30h72M217.2 140.00h72M217.2 141.70h72M217.2 143.40h72M217.2 145.10h72M217.2 146.80h72M217.2 148.50h72M217.2 150.20h72M217.2 151.90h72M217.2 153.60h72M217.2 155.30h72M217.2 157.00h72M217.2 158.70h72M217.2 160.40h72M217.2 162.10h72M217.2 163.80h72M217.2 165.50h72M217.2 167.20h72M217.2 168.90h72M217.2 170.60h72M217.2 172.30h72M217.2 174.00h72M217.2 175.70h72M217.2 177.40h72M217.2 179.10h72M217.2 180.80h72M217.2 182.50h72M217.2 184.20h72M217.2 185.90h72M217.2 187.60h72M217.2 189.30h72M217.2 191.00h72M217.2 192.70h72M217.2 194.40h72M217.2 196.10h72M217.2 197.80h72" stroke="#140000" stroke-width="0.6" fill="none" clip-path="url(#w2)"/>
<path d="M253.2 162.4L221.5 175.8M253.2 162.4L218.8 164.2" stroke="#140000" stroke-width="0.5" fill="none"/>
<clipPath id="w3"><path d="M253.2 162.4L284.9 149.0A34.4 34.4 0 0 1 287.6 160.6Z"/></clipPath>
<path d="M217.2 126.40h72M217.2 128.10h72M217.2 129.80h72M217.2 131.50h72M217.2 133.20h72M217.2 134.90h72M217.2 136.60h72M217.2 138.30h72M217.2 140.00h72M217.2 141.70h72M217.2 143.40h72M217.2 145.10h72M217.2 146.80h72M217.2 148.50h72M217.2 150.20h72M217.2 151.90h72M217.2 153.60h72M217.2 155.30h72M217.2 157.00h72M217.2 158.70h72M217.2 160.40h72M217.2 162.10h72M217.2 163.80h72M217.2 165.50h72M217.2 167.20h72M217.2 168.90h72M217.2 170.60h72M217.2 172.30h72M217.2 174.00h72M217.2 175.70h72M217.2 177.40h72M217.2 179.10h72M217.2 180.80h72M217.2 182.50h72M217.2 184.20h72M217.2 185.90h72M217.2 187.60h72M217.2 189.30h72M217.2 191.00h72M217.2 192.70h72M217.2 194.40h72M217.2 196.10h72M217.2 197.80h72" stroke="#ff9090" stroke-width="0.6" fill="none" clip-path="url(#w3)"/>
<path d="M253.2 162.4L284.9 149.0M253.2 162.4L287.6 160.6" stroke="#ff9090" stroke-width="0.5" fill="none"/>
<clipPath id="w4"><path d="M253.2 162.4L287.6 164.2A34.4 34.4 0 0 1 284.9 175.8Z"/></clipPath>
<path d="M217.2 126.40h72M217.2 128.10h72M217.2 129.80h72M217.2 131.50h72M217.2 133.20h72M217.2 134.90h72M217.2 136.60h72M217.2 138.30h72M217.2 140.00h72M217.2 141.70h72M217.2 143.40h72M217.2 145.10h72M217.2 146.80h72M217.2 148.50h72M217.2 150.20h72M217.2 151.90h72M217.2 153.60h72M217.2 155.30h72M217.2 157.00h72M217.2 158.70h72M217.2 160.40h72M217.2 162.10h72M217.2 163.80h72M217.2 165.50h72M217.2 167.20h72M217.2 168.90h72M217.2 170.60h72M217.2 172.30h72M217.2 174.00h72M217.2 175.70h72M217.2 177.40h72M217.2 179.10h72M217.2 180.80h72M217.2 182.50h72M217.2 184.20h72M217.2 185.90h72M217.2 187.60h72M217.2 189.30h72M217.2 191.00h72M217.2 192.70h72M217.2 194.40h72M217.2 196.10h72M217.2 197.80h72" stroke="#140000" stroke-width="0.6" fill="none" clip-path="url(#w4)"/>
<path d="M253.2 162.4L287.6 164.2M253.2 162.4L284.9 175.8" stroke="#140000" stroke-width="0.5" fill="none"/>
<clipPath id="w5"><path d="M253.2 162.4L234.0 133.9A34.4 34.4 0 0 1 242.6 129.7Z"/></clipPath>
<path d="M217.20 126.4v72M218.90 126.4v72M220.60 126.4v72M222.30 126.4v72M224.00 126.4v72M225.70 126.4v72M227.40 126.4v72M229.10 126.4v72M230.80 126.4v72M232.50 126.4v72M234.20 126.4v72M235.90 126.4v72M237.60 126.4v72M239.30 126.4v72M241.00 126.4v72M242.70 126.4v72M244.40 126.4v72M246.10 126.4v72M247.80 126.4v72M249.50 126.4v72M251.20 126.4v72M252.90 126.4v72M254.60 126.4v72M256.30 126.4v72M258.00 126.4v72M259.70 126.4v72M261.40 126.4v72M263.10 126.4v72M264.80 126.4v72M266.50 126.4v72M268.20 126.4v72M269.90 126.4v72M271.60 126.4v72M273.30 126.4v72M275.00 126.4v72M276.70 126.4v72M278.40 126.4v72M280.10 126.4v72M281.80 126.4v72M283.50 126.4v72M285.20 126.4v72M286.90 126.4v72M288.60 126.4v72" stroke="#140000" stroke-width="0.6" fill="none" clip-path="url(#w5)"/>
<path d="M253.2 162.4L234.0 133.9M253.2 162.4L242.6 129.7" stroke="#140000" stroke-width="0.5" fill="none"/>
<clipPath id="w6"><path d="M253.2 162.4L263.8 129.7A34.4 34.4 0 0 1 272.4 133.9Z"/></clipPath>
<path d="M217.20 126.4v72M218.90 126.4v72M220.60 126.4v72M222.30 126.4v72M224.00 126.4v72M225.70 126.4v72M227.40 126.4v72M229.10 126.4v72M230.80 126.4v72M232.50 126.4v72M234.20 126.4v72M235.90 126.4v72M237.60 126.4v72M239.30 126.4v72M241.00 126.4v72M242.70 126.4v72M244.40 126.4v72M246.10 126.4v72M247.80 126.4v72M249.50 126.4v72M251.20 126.4v72M252.90 126.4v72M254.60 126.4v72M256.30 126.4v72M258.00 126.4v72M259.70 126.4v72M261.40 126.4v72M263.10 126.4v72M264.80 126.4v72M266.50 126.4v72M268.20 126.4v72M269.90 126.4v72M271.60 126.4v72M273.30 126.4v72M275.00 126.4v72M276.70 126.4v72M278.40 126.4v72M280.10 126.4v72M281.80 126.4v72M283.50 126.4v72M285.20 126.4v72M286.90 126.4v72M288.60 126.4v72" stroke="#140000" stroke-width="0.6" fill="none" clip-path="url(#w6)"/>
<path d="M253.2 162.4L263.8 129.7M253.2 162.4L272.4 133.9" stroke="#140000" stroke-width="0.5" fill="none"/>
<clipPath id="w7"><path d="M253.2 162.4L272.4 190.9A34.4 34.4 0 0 1 263.8 195.1Z"/></clipPath>
<path d="M217.20 126.4v72M218.90 126.4v72M220.60 126.4v72M222.30 126.4v72M224.00 126.4v72M225.70 126.4v72M227.40 126.4v72M229.10 126.4v72M230.80 126.4v72M232.50 126.4v72M234.20 126.4v72M235.90 126.4v72M237.60 126.4v72M239.30 126.4v72M241.00 126.4v72M242.70 126.4v72M244.40 126.4v72M246.10 126.4v72M247.80 126.4v72M249.50 126.4v72M251.20 126.4v72M252.90 126.4v72M254.60 126.4v72M256.30 126.4v72M258.00 126.4v72M259.70 126.4v72M261.40 126.4v72M263.10 126.4v72M264.80 126.4v72M266.50 126.4v72M268.20 126.4v72M269.90 126.4v72M271.60 126.4v72M273.30 126.4v72M275.00 126.4v72M276.70 126.4v72M278.40 126.4v72M280.10 126.4v72M281.80 126.4v72M283.50 126.4v72M285.20 126.4v72M286.90 126.4v72M288.60 126.4v72" stroke="#140000" stroke-width="0.6" fill="none" clip-path="url(#w7)"/>
<path d="M253.2 162.4L272.4 190.9M253.2 162.4L263.8 195.1" stroke="#140000" stroke-width="0.5" fill="none"/>
<clipPath id="w8"><path d="M253.2 162.4L242.6 195.1A34.4 34.4 0 0 1 234.0 190.9Z"/></clipPath>
<path d="M217.20 126.4v72M218.90 126.4v72M220.60 126.4v72M222.30 126.4v72M224.00 126.4v72M225.70 126.4v72M227.40 126.4v72M229.10 126.4v72M230.80 126.4v72M232.50 126.4v72M234.20 126.4v72M235.90 126.4v72M237.60 126.4v72M239.30 126.4v72M241.00 126.4v72M242.70 126.4v72M244.40 126.4v72M246.10 126.4v72M247.80 126.4v72M249.50 126.4v72M251.20 126.4v72M252.90 126.4v72M254.60 126.4v72M256.30 126.4v72M258.00 126.4v72M259.70 126.4v72M261.40 126.4v72M263.10 126.4v72M264.80 126.4v72M266.50 126.4v72M268.20 126.4v72M269.90 126.4v72M271.60 126.4v72M273.30 126.4v72M275.00 126.4v72M276.70 126.4v72M278.40 126.4v72M280.10 126.4v72M281.80 126.4v72M283.50 126.4v72M285.20 126.4v72M286.90 126.4v72M288.60 126.4v72" stroke="#140000" stroke-width="0.6" fill="none" clip-path="url(#w8)"/>
<path d="M253.2 162.4L242.6 195.1M253.2 162.4L234.0 190.9" stroke="#140000" stroke-width="0.5" fill="none"/>
<rect x="232.70" y="141.80" width="41.00" height="41.40" fill="#aae0f4" />
<path d="M250.7 173.5h0.8v0.8h-0.8zM242.5 162.0h0.5v0.7h-0.5zM253.1 143.4h0.7v0.8h-0.7zM256.0 177.6h0.5v0.5h-0.5zM233.7 162.2h0.6v0.6h-0.6zM243.6 174.6h0.4v0.9h-0.4zM255.9 164.2h0.8v0.5h-0.8zM238.9 154.7h0.4v0.6h-0.4zM258.0 163.4h0.5v0.7h-0.5zM236.6 175.5h0.5v0.5h-0.5zM239.4 170.2h0.8v0.8h-0.8zM235.5 158.8h0.6v0.5h-0.6zM272.0 143.7h0.6v0.8h-0.6zM272.6 147.9h0.6v0.8h-0.6zM234.6 151.8h0.8v0.5h-0.8zM248.8 154.2h0.6v0.4h-0.6zM234.4 182.6h0.8v0.8h-0.8zM242.2 152.3h0.7v0.5h-0.7zM251.6 180.0h0.6v0.6h-0.6zM272.4 166.9h0.4v0.6h-0.4zM259.1 144.4h0.6v0.7h-0.6zM267.7 166.1h0.8v0.6h-0.8zM248.8 176.4h0.6v0.8h-0.6zM241.7 156.2h0.5v0.7h-0.5zM239.6 150.3h0.5v0.6h-0.5zM245.4 160.2h0.9v0.7h-0.9zM267.7 150.3h0.6v0.4h-0.6zM260.8 156.8h0.5v0.4h-0.5zM240.3 152.7h0.6v0.9h-0.6zM261.8 153.0h0.6v0.5h-0.6zM270.7 156.7h0.8v0.8h-0.8zM269.5 142.8h0.6v0.6h-0.6zM236.3 178.0h0.6v0.8h-0.6zM253.9 144.2h0.6v0.5h-0.6zM234.6 148.2h0.7v0.4h-0.7zM245.6 159.3h0.7v0.5h-0.7zM261.4 152.6h0.8v0.7h-0.8zM238.9 150.4h0.5v0.8h-0.5zM249.3 157.8h0.8v0.5h-0.8zM244.7 156.1h0.5v0.4h-0.5zM234.0 167.7h0.7v0.8h-0.7zM272.2 154.2h0.7v0.9h-0.7zM241.7 170.1h0.7v0.9h-0.7zM267.9 151.6h0.7v0.4h-0.7zM250.2 158.0h0.4v0.6h-0.4zM246.2 162.3h0.5v0.5h-0.5zM249.2 161.4h0.5v0.7h-0.5zM242.6 145.8h0.6v0.6h-0.6zM239.1 165.8h0.8v0.7h-0.8zM261.1 142.9h0.6v0.6h-0.6zM235.5 158.5h0.4v0.6h-0.4zM256.6 161.1h0.6v0.5h-0.6zM233.9 156.2h0.8v0.7h-0.8zM243.5 169.3h0.5v0.6h-0.5zM257.7 181.0h0.6v0.7h-0.6zM270.9 173.5h0.7v0.7h-0.7zM249.5 159.0h0.5v0.8h-0.5zM268.4 157.6h0.9v0.4h-0.9zM238.5 162.7h0.6v0.6h-0.6zM272.3 148.1h0.5v0.5h-0.5zM260.3 151.6h0.4v0.7h-0.4zM248.8 151.8h0.6v0.7h-0.6zM255.0 167.5h0.7v0.8h-0.7zM271.9 155.6h0.6v0.8h-0.6zM245.6 171.2h0.7v0.7h-0.7zM271.7 175.6h0.5v0.7h-0.5zM252.7 165.0h0.6v0.5h-0.6zM263.1 163.8h0.5v0.5h-0.5zM246.1 149.3h0.7v0.5h-0.7zM235.5 144.8h0.5v0.8h-0.5zM237.5 160.4h0.8v0.6h-0.8zM239.5 177.3h0.8v0.4h-0.8zM243.2 162.7h0.8v0.6h-0.8zM261.8 152.3h0.8v0.6h-0.8zM246.4 173.0h0.8v0.8h-0.8zM255.8 159.2h0.8v0.7h-0.8zM266.4 174.7h0.5v0.6h-0.5zM259.9 151.4h0.5v0.4h-0.5zM256.5 180.4h0.9v0.5h-0.9zM260.6 159.1h0.7v0.6h-0.7zM270.5 182.3h0.4v0.8h-0.4zM237.8 143.7h0.5v0.8h-0.5zM272.9 146.9h0.6v0.4h-0.6zM254.8 161.7h0.6v0.6h-0.6zM265.2 176.2h0.5v0.6h-0.5zM257.8 173.2h0.9v0.6h-0.9zM260.9 164.3h0.8v0.5h-0.8zM240.0 146.4h0.9v0.5h-0.9zM252.6 146.9h0.6v0.4h-0.6zM255.7 147.9h0.7v0.5h-0.7zM242.1 161.7h0.6v0.5h-0.6zM235.1 144.6h0.8v0.6h-0.8zM236.2 149.4h0.6v0.9h-0.6zM241.1 177.4h0.6v0.6h-0.6zM265.4 158.2h0.4v0.7h-0.4zM259.4 167.4h0.5v0.9h-0.5zM267.8 182.6h0.6v0.8h-0.6zM262.1 149.2h0.4v0.5h-0.4zM237.8 145.0h0.6v0.8h-0.6zM245.5 163.0h0.4v0.5h-0.4zM271.6 142.4h0.7v0.8h-0.7zM264.9 172.0h0.6v0.8h-0.6zM266.3 173.3h0.9v0.5h-0.9zM271.2 158.4h0.8v0.5h-0.8zM269.6 143.0h0.7v0.5h-0.7zM248.6 157.1h0.7v0.8h-0.7zM247.7 168.0h0.6v0.5h-0.6zM269.4 155.1h0.4v0.6h-0.4zM262.8 150.6h0.8v0.7h-0.8zM260.3 149.2h0.5v0.5h-0.5zM247.1 159.6h0.4v0.7h-0.4zM249.2 155.1h0.7v0.9h-0.7zM241.2 177.9h0.6v0.8h-0.6zM237.4 182.3h0.6v0.9h-0.6zM241.8 158.7h0.8v0.5h-0.8zM244.0 169.6h0.9v0.6h-0.9zM240.4 156.6h0.9v0.5h-0.9zM258.5 157.4h0.7v0.5h-0.7zM257.8 178.2h0.8v0.7h-0.8zM253.3 165.2h0.5v0.8h-0.5zM260.7 160.5h0.7v0.6h-0.7zM248.5 151.4h0.7v0.7h-0.7zM253.7 143.3h0.7v0.6h-0.7zM256.9 166.3h0.9v0.5h-0.9zM251.8 182.5h0.8v0.6h-0.8zM262.6 182.4h0.6v0.8h-0.6zM238.1 182.4h0.6v0.5h-0.6zM266.8 168.5h0.9v0.8h-0.9zM265.1 162.9h0.9v0.4h-0.9zM268.0 171.0h0.5v0.8h-0.5zM251.3 163.9h0.8v0.5h-0.8zM244.2 168.3h0.4v0.7h-0.4zM264.6 162.0h0.5v0.8h-0.5zM267.4 173.4h0.7v0.9h-0.7zM265.0 148.2h0.6v0.5h-0.6zM234.5 156.1h0.8v0.8h-0.8zM237.7 149.4h0.6v0.8h-0.6zM257.8 178.8h0.4v0.9h-0.4zM241.3 167.7h0.8v0.8h-0.8zM240.9 169.3h0.6v0.4h-0.6zM246.7 154.9h0.7v0.5h-0.7zM257.2 170.4h0.5v0.5h-0.5zM260.9 161.0h0.5v0.5h-0.5zM270.8 166.9h0.6v0.5h-0.6zM273.0 170.2h0.8v0.6h-0.8zM245.5 158.7h0.5v0.7h-0.5zM250.1 175.5h0.6v0.6h-0.6zM253.4 180.4h0.6v0.8h-0.6zM242.4 165.6h0.5v0.8h-0.5zM244.5 176.9h0.7v0.6h-0.7z" fill="#e04848"/>
<path d="M270.5 157.8h0.8v0.8h-0.8zM251.0 144.6h0.7v0.6h-0.7zM250.7 180.9h0.6v0.8h-0.6zM260.0 152.0h0.6v0.5h-0.6zM269.0 152.3h0.7v0.6h-0.7zM266.0 176.7h0.8v0.7h-0.8zM237.0 178.6h0.5v0.6h-0.5zM248.1 171.5h0.8v0.6h-0.8zM269.1 180.7h0.4v0.8h-0.4zM251.9 156.8h0.7v0.6h-0.7zM260.0 166.7h1.0v1.0h-1.0zM272.9 158.1h0.9v0.8h-0.9zM261.2 182.7h0.4v0.7h-0.4zM249.1 168.8h0.5v1.0h-0.5zM241.4 157.1h0.5v0.6h-0.5zM262.8 145.4h0.5v0.8h-0.5zM258.0 172.3h0.6v0.9h-0.6zM262.4 173.7h0.5v0.7h-0.5zM233.6 177.1h1.0v0.9h-1.0zM234.0 156.3h0.7v0.7h-0.7zM237.5 174.2h0.6v0.7h-0.6zM238.0 165.2h0.5v0.5h-0.5zM253.6 154.0h0.9v0.5h-0.9zM249.6 144.2h0.5v0.7h-0.5zM255.4 160.7h0.9v0.5h-0.9zM267.2 148.3h1.0v0.7h-1.0zM249.3 167.0h0.9v1.0h-0.9zM249.6 142.4h0.5v0.9h-0.5zM262.5 171.1h0.5v0.7h-0.5zM234.1 146.5h0.6v1.0h-0.6zM258.9 176.6h0.4v0.6h-0.4zM236.1 152.6h0.5v1.0h-0.5zM246.2 162.0h0.8v0.9h-0.8zM271.0 165.2h0.7v0.9h-0.7zM248.9 154.2h0.8v0.6h-0.8zM247.8 159.5h0.7v0.6h-0.7zM250.3 160.4h0.4v0.9h-0.4zM235.5 163.5h0.7v0.6h-0.7zM242.0 146.0h0.6v0.6h-0.6zM252.5 151.4h0.8v0.7h-0.8zM233.4 158.6h1.0v0.4h-1.0zM256.9 181.2h0.6v0.8h-0.6zM247.8 154.3h0.8v0.8h-0.8zM245.7 162.3h0.7v0.9h-0.7zM235.1 145.8h0.6v0.6h-0.6zM265.0 159.4h0.9v0.6h-0.9zM244.5 169.7h0.5v1.0h-0.5zM266.4 155.4h0.6v0.9h-0.6zM264.7 168.2h0.4v0.9h-0.4zM234.9 167.5h0.7v1.0h-0.7zM258.7 142.9h1.0v0.9h-1.0zM256.3 142.2h0.8v0.7h-0.8zM260.3 182.1h1.0v0.4h-1.0zM264.4 160.0h0.9v0.6h-0.9zM251.0 159.8h0.5v0.6h-0.5zM262.5 144.9h0.5v0.9h-0.5zM259.8 164.4h0.5v0.5h-0.5zM245.5 180.9h0.7v1.0h-0.7zM241.5 158.9h0.7v0.9h-0.7zM238.0 177.6h0.7v0.4h-0.7zM250.4 157.4h0.8v1.0h-0.8zM252.8 170.1h0.6v0.9h-0.6zM237.2 172.3h0.5v0.8h-0.5zM241.1 156.1h0.5v0.6h-0.5zM256.8 163.2h0.6v0.7h-0.6zM266.9 156.6h0.8v0.7h-0.8zM272.4 155.4h0.8v0.5h-0.8zM243.5 171.8h0.7v0.6h-0.7zM235.6 175.7h0.6v0.8h-0.6zM250.4 167.2h0.7v1.0h-0.7z" fill="#2a4858"/>
<path d="M269.6 160.6h0.9v0.7h-0.9zM263.3 146.2h0.7v1.2h-0.7zM234.4 170.5h1.0v0.9h-1.0zM246.4 148.2h1.3v1.1h-1.3zM265.4 146.0h1.1v0.7h-1.1zM241.0 163.8h1.0v0.6h-1.0zM263.7 165.8h1.2v1.2h-1.2zM260.7 156.9h1.3v1.1h-1.3zM244.7 177.0h1.1v0.7h-1.1zM243.0 142.8h0.9v0.7h-0.9zM244.8 152.3h0.6v0.9h-0.6zM244.0 153.6h0.7v0.9h-0.7zM268.1 148.5h1.2v1.2h-1.2zM257.5 164.2h1.1v0.9h-1.1zM259.5 179.5h1.1v0.7h-1.1zM235.2 180.2h0.8v1.1h-0.8zM242.4 160.5h0.8v1.1h-0.8zM270.9 162.6h1.0v0.8h-1.0zM242.3 180.8h0.6v1.3h-0.6zM259.4 144.9h1.2v0.6h-1.2zM255.7 146.9h1.3v0.7h-1.3zM268.1 144.5h1.0v0.6h-1.0zM234.2 165.3h1.3v1.0h-1.3zM267.4 174.0h0.9v0.6h-0.9zM254.2 149.5h0.9v0.8h-0.9zM253.1 150.1h1.1v0.8h-1.1zM252.5 145.2h0.9v0.9h-0.9zM272.1 164.9h0.6v0.7h-0.6zM246.5 170.6h1.3v1.3h-1.3zM271.2 179.8h1.2v1.2h-1.2zM233.8 162.0h1.0v1.0h-1.0zM257.6 167.0h1.2v0.6h-1.2zM253.9 181.1h0.5v0.6h-0.5zM267.9 181.1h0.5v0.5h-0.5zM266.4 170.1h0.9v1.0h-0.9zM263.4 175.0h0.5v0.6h-0.5zM264.9 181.8h1.2v0.8h-1.2zM246.5 156.1h0.5v1.1h-0.5zM243.5 165.9h0.9v0.8h-0.9zM260.1 160.6h0.7v1.2h-0.7zM240.1 148.1h0.7v0.9h-0.7zM264.5 155.6h0.7v1.0h-0.7zM243.5 163.3h0.7v1.2h-0.7zM240.4 151.5h0.7v0.8h-0.7zM262.2 169.5h1.1v0.9h-1.1zM236.2 173.1h0.7v0.7h-0.7zM249.7 182.4h0.8v0.8h-0.8zM269.6 182.4h0.8v0.6h-0.8zM264.7 173.9h0.8v1.1h-0.8zM248.3 153.7h1.0v1.1h-1.0zM252.1 175.4h0.5v0.9h-0.5zM248.3 144.7h1.2v0.6h-1.2zM241.3 177.8h1.3v1.2h-1.3zM246.7 180.0h0.6v1.1h-0.6zM271.0 149.9h0.6v1.0h-0.6zM268.5 171.6h1.3v0.9h-1.3zM248.0 146.9h0.7v1.3h-0.7zM235.9 149.5h0.8v0.5h-0.8zM245.3 149.5h0.6v0.9h-0.6zM254.7 165.2h1.1v0.9h-1.1z" fill="#f0faff"/>
<path d="M262.5 169.7L273.5 179.6L271.2 181.9Z" fill="#35566a" opacity=".8"/>
<path d="M244.1 169.7L235.4 181.9L233.1 179.6Z" fill="#35566a" opacity=".8"/>
<path d="M244.1 151.3L233.1 143.8L235.4 141.5Z" fill="#35566a" opacity=".8"/>
<path d="M262.5 151.3L271.2 141.5L273.5 143.8Z" fill="#35566a" opacity=".8"/>
<path d="M266.1 162.8L273.5 164.4L273.5 166.2Z" fill="#35566a" opacity=".8"/>
<path d="M265.9 157.4L273.5 155.7L273.5 157.6Z" fill="#35566a" opacity=".8"/>
<path d="M240.5 162.8L233.1 166.2L233.1 164.4Z" fill="#35566a" opacity=".8"/>
<path d="M240.7 157.4L233.1 157.6L233.1 155.7Z" fill="#35566a" opacity=".8"/>
<path d="M256.7 173.1L259.7 181.9L257.8 181.9Z" fill="#35566a" opacity=".8"/>
<path d="M249.9 173.1L248.8 181.9L246.9 181.9Z" fill="#35566a" opacity=".8"/>
<path d="M249.9 147.9L246.9 141.5L248.8 141.5Z" fill="#35566a" opacity=".8"/>
<path d="M256.7 147.9L257.8 141.5L259.7 141.5Z" fill="#35566a" opacity=".8"/>
<circle cx="253.3" cy="160.5" r="12.8" fill="none" stroke="#0a0a0a" stroke-width="0.8"/>
<rect x="245.00" y="159.00" width="13.00" height="0.90" fill="#0a0606" opacity=".85"/>
<rect x="247.00" y="153.60" width="12.00" height="0.80" fill="#0a0606" opacity=".6"/>
<rect x="246.00" y="156.40" width="4.00" height="1.00" fill="#0a0606" opacity=".6"/>
<rect x="257.00" y="156.40" width="5.00" height="1.00" fill="#0a0606" opacity=".6"/>
<rect x="250.90" y="160.50" width="8.10" height="8.70" fill="#0a0606" />
<rect x="252.00" y="162.00" width="2.40" height="1.60" fill="#4a7a90" />
<rect x="255.60" y="165.60" width="2.40" height="1.60" fill="#c03030" />
<rect x="248.00" y="162.00" width="2.40" height="5.00" fill="#0a0606" opacity=".7"/>
<rect x="259.60" y="161.60" width="2.00" height="4.60" fill="#0a0606" opacity=".7"/>
<rect x="237.60" y="172.80" width="30.80" height="1.10" fill="#0a0606" />
<path d="M262.9 151.8h0.8v0.7h-0.8zM249.5 166.7h1.4v1.1h-1.4zM246.4 157.3h1.1v0.9h-1.1zM259.6 171.4h1.0v1.1h-1.0zM260.8 160.2h0.8v1.4h-0.8zM263.5 150.5h1.3v1.0h-1.3zM244.1 153.6h0.8v1.3h-0.8zM247.4 150.4h0.8v1.3h-0.8zM253.5 164.4h1.0v0.8h-1.0zM243.3 156.7h0.6v0.8h-0.6zM256.0 158.1h1.0v1.2h-1.0zM249.7 157.8h1.4v1.1h-1.4zM251.8 161.9h1.0v0.9h-1.0zM262.2 155.1h1.4v1.4h-1.4zM261.5 153.6h1.1v1.5h-1.1zM249.1 153.8h1.3v0.8h-1.3zM255.3 153.5h1.5v0.9h-1.5zM245.0 165.1h0.9v1.1h-0.9zM253.4 170.3h1.1v0.9h-1.1zM243.0 160.9h0.8v1.1h-0.8zM256.3 160.2h0.7v1.0h-0.7zM253.1 164.1h1.5v0.9h-1.5zM252.3 151.9h1.3v0.8h-1.3zM260.4 167.6h0.8v1.4h-0.8zM253.6 159.4h1.1v1.5h-1.1zM253.3 160.6h0.9v1.4h-0.9zM253.6 157.5h0.8v0.8h-0.8zM260.5 167.7h1.5v1.4h-1.5zM257.4 167.5h1.2v1.3h-1.2zM259.8 153.9h1.3v0.9h-1.3z" fill="#0a0606"/>
<circle cx="223.3" cy="133" r="2.7" fill="#0a0606"/><circle cx="223.3" cy="133" r="1.3" fill="#6e6e6e"/>
<circle cx="283.2" cy="132.8" r="2.7" fill="#0a0606"/><circle cx="283.2" cy="132.8" r="1.3" fill="#6e6e6e"/>
<circle cx="223.3" cy="192.3" r="2.7" fill="#0a0606"/><circle cx="223.3" cy="192.3" r="1.3" fill="#6e6e6e"/>
<circle cx="283.2" cy="192" r="2.7" fill="#0a0606"/><circle cx="283.2" cy="192" r="1.3" fill="#6e6e6e"/>
<rect x="257.00" y="121.60" width="6.00" height="13.40" fill="#082238" />
<rect x="257.60" y="123.40" width="4.80" height="2.60" fill="#1aa2e2" />
<rect x="257.60" y="128.40" width="4.80" height="2.60" fill="#1aa2e2" />
<rect x="259.60" y="118.00" width="0.70" height="4.00" fill="#0a0606" />
<path d="M238.6 186.5 H265.8 L274.5 195.4 L256 215.8 L233.7 193.6 Z" fill="none" stroke="#fff" stroke-width="0.65"/>
<path d="M239.3 187.8 H265.1 L273.2 195.4 L256 213.9 L234.9 193.6 Z" fill="none" stroke="#fff" stroke-width="0.65"/>
<path d="M240.1 189.0 H264.3 L272.0 195.4 L256 212.1 L236.2 193.6 Z" fill="none" stroke="#fff" stroke-width="0.65"/>
<path d="M240.8 190.2 H263.6 L270.8 195.4 L256 210.2 L237.4 193.6 Z" fill="none" stroke="#fff" stroke-width="0.65"/>
<path d="M274.5 195.4 L256 215.8 L251.8 211.2 L269.6 191.6 Z" fill="url(#hw2)" opacity=".85"/>
<path d="M252 214 V224 M253.6 216 V224 M255.2 217 V222 M258 214 L262 210 M250 204 L246 208 V214 M260 216 C266 214 270 218 270 223 M258 219 C264 217 267 220 267 224 M249 207 L244 212 L244 220 M247 209 L246 220 M262 205 L270 212 L272 218 M264 203 L272 210 L274 216" stroke="#fff" stroke-width="0.65" fill="none"/>
<path d="M255.6 180.6L249.6 198M255.6 180.6L252.0 198M255.6 180.6L254.4 198M255.6 180.6L256.8 198M255.6 180.6L259.2 198M255.6 180.6L261.6 198" stroke="#0a0000" stroke-width="0.6" fill="none"/>
<path d="M255.6 180.6L250.8 198M255.6 180.6L253.2 198M255.6 180.6L255.6 198M255.6 180.6L258.0 198M255.6 180.6L260.4 198" stroke="#fff" stroke-width="0.6" fill="none"/>
<path d="M247 198.4 H264" stroke="#200" stroke-width="0.6"/>
<path d="M244.8 210.1h0.5v0.9h-0.5zM248.4 207.0h1.0v1.2h-1.0zM269.6 203.5h0.6v1.0h-0.6zM239.9 211.6h1.2v0.7h-1.2zM242.7 204.7h1.1v1.3h-1.1zM258.4 191.0h1.1v0.5h-1.1zM267.2 206.4h1.1v1.2h-1.1zM256.5 210.6h1.0v0.9h-1.0zM249.8 196.5h0.5v0.6h-0.5zM264.6 193.5h1.0v1.1h-1.0zM261.0 200.4h0.8v0.7h-0.8zM242.7 203.5h1.0v1.3h-1.0zM247.9 210.3h1.2v0.7h-1.2zM270.3 202.9h1.3v1.1h-1.3zM248.0 194.7h0.9v0.9h-0.9zM237.3 208.7h0.9v0.9h-0.9zM262.8 194.0h0.7v1.0h-0.7zM244.7 195.9h0.6v0.5h-0.6zM248.8 200.6h1.3v1.0h-1.3zM250.9 197.8h0.7v0.9h-0.7zM270.5 190.9h0.8v1.0h-0.8zM263.4 201.3h1.0v1.3h-1.0zM268.5 194.0h0.9v1.3h-0.9zM255.0 192.5h1.1v0.5h-1.1zM241.4 201.2h0.7v1.1h-0.7zM262.2 195.7h1.1v1.0h-1.1z" fill="#fff"/>
<rect x="244.60" y="182.40" width="1.40" height="6.00" fill="#0a2a44" />
<rect x="247.40" y="184.40" width="0.80" height="5.00" fill="#0a0606" />
<rect x="304.40" y="83.00" width="24.60" height="18.00" fill="none" stroke="#ff9090" stroke-width="0.45"/>
<rect x="307.40" y="84.60" width="17.40" height="15.20" fill="#c01010" />
<rect x="307.90" y="85.10" width="16.30" height="14.10" fill="#acd6ee" />
<path d="M319.0 91.6h0.7v0.5h-0.7zM315.4 98.4h1.0v0.4h-1.0zM309.1 89.0h0.9v0.7h-0.9zM310.0 91.1h0.8v0.9h-0.8zM314.3 94.2h0.9v0.8h-0.9zM308.7 95.0h0.5v0.4h-0.5zM315.4 85.5h0.5v0.7h-0.5zM315.3 86.7h1.1v1.0h-1.1zM315.6 93.4h0.6v1.1h-0.6zM309.9 89.5h0.6v1.0h-0.6zM315.9 90.9h0.7v1.0h-0.7zM312.0 96.1h0.9v0.7h-0.9zM313.7 91.3h0.7v0.6h-0.7zM317.7 90.9h0.6v0.9h-0.6zM315.1 91.8h1.0v0.7h-1.0zM313.9 97.6h1.1v0.9h-1.1zM314.3 94.5h0.9v0.6h-0.9zM319.3 98.3h0.9v0.9h-0.9zM314.8 94.3h0.6v0.9h-0.6zM316.4 98.7h0.6v0.9h-0.6zM308.3 91.0h0.9v0.6h-0.9zM317.6 88.3h0.7v1.1h-0.7zM311.1 97.8h0.4v0.8h-0.4zM320.8 96.8h0.7v0.8h-0.7zM319.1 95.7h0.9v0.8h-0.9zM311.9 95.0h0.8v0.8h-0.8zM323.4 87.2h0.9v0.6h-0.9zM319.3 98.3h0.6v0.8h-0.6zM316.2 92.1h0.5v0.8h-0.5zM321.9 94.4h0.6v1.0h-0.6zM314.6 87.3h0.8v0.7h-0.8zM316.3 98.9h0.8v1.1h-0.8zM313.5 95.7h0.5v0.6h-0.5zM318.8 94.8h1.0v0.7h-1.0zM312.3 90.2h0.8v0.4h-0.8zM313.8 94.3h0.5v0.6h-0.5zM321.6 98.1h0.6v0.5h-0.6zM309.8 86.5h1.0v0.9h-1.0zM312.1 92.0h0.9v0.4h-0.9zM320.8 97.1h0.5v0.9h-0.5zM318.9 89.9h1.0v0.6h-1.0zM315.4 89.6h0.7v1.0h-0.7zM316.9 93.6h1.1v0.6h-1.1zM311.5 93.8h0.5v1.1h-0.5zM313.3 91.3h0.7v1.0h-0.7zM322.3 94.6h0.5v0.6h-0.5zM319.0 88.3h1.0v1.0h-1.0zM311.5 90.3h0.6v0.9h-0.6zM308.7 94.8h0.4v1.0h-0.4zM316.5 93.3h0.5v0.4h-0.5zM313.5 98.8h0.8v1.0h-0.8zM309.0 86.7h0.4v0.9h-0.4zM310.8 89.0h0.9v0.9h-0.9zM313.0 91.7h0.6v0.8h-0.6zM313.6 90.2h0.6v0.6h-0.6zM312.1 85.5h0.6v0.8h-0.6zM312.2 86.8h1.0v0.7h-1.0zM316.0 89.6h1.0v0.9h-1.0zM317.7 94.3h0.9v0.8h-0.9zM314.4 90.6h0.8v0.7h-0.8zM316.3 92.6h1.0v1.0h-1.0zM311.5 85.6h0.6v0.4h-0.6zM320.4 93.8h0.6v0.5h-0.6zM321.6 96.8h0.9v0.9h-0.9zM319.6 91.5h0.7v0.8h-0.7zM321.7 98.9h1.0v1.0h-1.0zM309.2 88.7h1.1v0.8h-1.1zM316.0 89.5h1.0v0.8h-1.0zM323.4 86.3h1.1v0.4h-1.1zM310.3 90.6h0.8v0.5h-0.8zM316.8 98.2h0.7v0.9h-0.7zM317.2 93.3h0.5v0.7h-0.5zM322.0 94.5h0.6v0.7h-0.6zM316.5 89.9h0.8v0.8h-0.8zM308.3 88.3h0.9v0.6h-0.9zM309.1 95.7h0.6v1.1h-0.6zM316.7 86.7h0.8v0.6h-0.8zM320.7 95.2h0.9v0.4h-0.9zM308.5 96.2h0.5v0.5h-0.5zM308.5 87.5h0.7v1.1h-0.7zM313.0 88.9h1.0v0.5h-1.0zM317.9 93.7h1.1v0.4h-1.1zM316.8 90.5h1.0v0.6h-1.0zM319.2 87.8h0.7v1.1h-0.7zM311.7 89.1h1.0v0.9h-1.0zM309.0 87.9h0.6v0.6h-0.6zM321.2 94.9h1.1v0.9h-1.1zM317.8 90.5h0.9v0.7h-0.9zM308.9 92.0h0.7v0.8h-0.7zM308.8 85.7h1.1v0.7h-1.1z" fill="#284a60"/>
<path d="M313.1 87.3h1.0v1.2h-1.0zM310.8 92.2h0.9v1.1h-0.9zM316.8 88.6h0.7v1.1h-0.7zM309.2 97.1h0.5v0.7h-0.5zM315.3 96.9h1.0v1.1h-1.0zM319.9 95.2h0.5v1.2h-0.5zM310.3 87.5h0.5v0.5h-0.5zM321.7 90.5h0.6v0.5h-0.6zM321.2 93.5h1.2v0.5h-1.2zM309.8 89.2h0.7v0.6h-0.7zM311.1 94.1h0.6v0.6h-0.6zM316.4 90.4h0.6v1.0h-0.6zM315.9 90.6h0.9v0.5h-0.9zM317.6 87.9h0.8v0.5h-0.8zM321.8 93.4h0.8v0.9h-0.8zM322.7 87.1h0.8v1.1h-0.8zM313.8 95.0h1.2v0.5h-1.2zM312.4 89.3h1.1v1.1h-1.1zM318.9 98.0h0.6v0.8h-0.6zM321.3 95.8h0.6v1.3h-0.6zM319.6 97.2h0.8v1.0h-0.8zM323.0 97.6h1.0v1.2h-1.0zM323.6 96.8h1.0v1.3h-1.0zM310.2 90.8h1.0v0.6h-1.0z" fill="#f0faff"/>
<path d="M316 85.4V99M312 88H320M311 95.6H321" stroke="#1a2a3a" stroke-width="0.6" opacity=".7"/>
<rect x="333.10" y="77.70" width="9.20" height="15.60" fill="none" stroke="#111" stroke-width="0.7"/>
<rect x="333.50" y="80.80" width="8.40" height="12.20" fill="#ff0000" />
<rect x="335.60" y="83.20" width="4.40" height="1.60" fill="#4a4a0e" />
<rect x="335.60" y="90.40" width="4.40" height="1.60" fill="#4a4a0e" />
<rect x="335.00" y="86.60" width="5.60" height="0.80" fill="#8a0000" />
<rect x="336.00" y="78.40" width="3.60" height="2.20" fill="#f4f4f4" stroke="#444" stroke-width="0.4"/>
<rect x="345.80" y="92.00" width="3.00" height="3.60" fill="#1c1008" />
<rect x="346.00" y="96.40" width="2.60" height="3.00" fill="#0a0606" />
<rect x="329.60" y="88.60" width="1.60" height="2.40" fill="#fff" />
<rect x="288.40" y="82.60" width="1.20" height="5.00" fill="#0a0606" />
<rect x="291.00" y="82.20" width="8.00" height="1.00" fill="#0a0606" />
<rect x="294.60" y="84.00" width="1.40" height="6.60" fill="#0a0606" />
<rect x="298.60" y="84.60" width="1.00" height="8.00" fill="#0a0606" />
<rect x="301.60" y="83.40" width="2.40" height="1.40" fill="#0a0606" />
<rect x="289.60" y="88.60" width="6.00" height="1.60" fill="#0a2a44" />
<rect x="296.60" y="88.40" width="4.60" height="1.60" fill="#0a0606" />
<rect x="290.40" y="93.60" width="5.40" height="4.60" fill="#08283a" />
<rect x="296.40" y="94.60" width="3.40" height="3.00" fill="#1aa2e2" />
<rect x="283.40" y="95.20" width="8.00" height="0.80" fill="#0a0606" />
<rect x="300.60" y="92.00" width="4.60" height="1.00" fill="#0a0606" />
<rect x="284.00" y="97.60" width="7.00" height="2.00" fill="#0a0606" opacity=".7"/>
<path d="M300.6 83.2h1.3v0.8h-1.3zM291.5 93.5h0.7v1.0h-0.7zM302.1 100.8h0.8v0.9h-0.8zM298.9 85.6h1.5v0.7h-1.5zM296.1 88.4h0.5v0.5h-0.5zM285.0 88.2h0.8v1.7h-0.8zM297.8 83.2h1.4v0.8h-1.4zM294.6 95.7h1.5v1.6h-1.5zM293.4 88.0h1.0v0.9h-1.0zM299.8 90.8h1.3v0.7h-1.3zM300.7 100.4h0.7v1.2h-0.7zM288.2 82.7h1.0v0.7h-1.0zM299.6 92.9h1.3v1.7h-1.3zM286.2 83.9h0.5v1.1h-0.5zM301.5 95.0h1.2v1.5h-1.2zM292.4 84.1h1.3v0.5h-1.3zM289.6 82.6h0.7v0.6h-0.7zM295.6 84.4h1.2v1.5h-1.2zM291.9 84.3h1.3v1.4h-1.3zM302.7 92.5h1.2v1.5h-1.2zM298.5 100.5h0.8v1.4h-0.8zM297.7 90.9h0.5v1.1h-0.5zM290.3 93.4h1.1v1.1h-1.1zM286.2 84.5h1.2v1.3h-1.2zM304.8 97.1h0.8v1.0h-0.8zM295.1 97.3h1.0v1.6h-1.0zM294.7 89.6h1.1v0.9h-1.1zM305.0 82.9h1.0v0.6h-1.0zM298.6 84.9h0.7v1.0h-0.7zM297.0 96.5h1.0v0.9h-1.0zM292.4 98.9h0.8v0.5h-0.8zM302.7 91.2h0.7v0.7h-0.7zM302.8 96.2h0.6v1.3h-0.6zM289.3 90.5h1.2v0.6h-1.2zM303.7 88.4h0.7v1.4h-0.7zM287.2 82.7h1.3v1.1h-1.3zM303.0 97.0h0.7v0.6h-0.7zM297.1 90.9h0.9v1.6h-0.9zM289.2 94.2h0.6v1.6h-0.6zM304.0 93.7h0.9v1.4h-0.9zM303.1 97.1h0.5v1.1h-0.5zM287.8 92.4h1.6v1.5h-1.6zM290.0 92.5h0.9v0.7h-0.9zM299.9 96.4h0.9v1.0h-0.9z" fill="#0a0606"/>
<path d="M298.5 97.3h1.3v0.9h-1.3zM287.7 91.7h1.6v1.3h-1.6zM297.6 93.6h1.2v1.0h-1.2zM303.5 96.1h0.9v1.5h-0.9zM296.8 96.1h1.6v1.4h-1.6zM301.8 99.7h1.2v1.4h-1.2zM292.7 94.1h1.2v1.4h-1.2z" fill="#1aa2e2"/>
<path d="M292.1 88.3v5.4M298.5 97.2v2.8M290.0 87.7v2.4M303.4 87.4h1.6M287.8 93.5h5.6M290.1 95.7v2.9M292.1 90.5h2.8M293.5 87.0h4.9M297.8 96.4h3.3M287.4 83.4v5.2M285.3 90.2h4.4M285.7 89.6v3.4" stroke="#0a0606" stroke-width="0.5" fill="none"/>
<rect x="281.60" y="102.20" width="7.60" height="9.00" fill="#1aa2e2" />
<rect x="281.60" y="103.20" width="7.60" height="0.75" fill="#0a3c70" />
<rect x="281.60" y="105.20" width="7.60" height="0.75" fill="#0a3c70" />
<rect x="281.60" y="107.20" width="7.60" height="0.75" fill="#0a3c70" />
<rect x="281.60" y="109.20" width="7.60" height="0.75" fill="#0a3c70" />
<rect x="281.6" y="102.2" width="7.6" height="9" fill="none" stroke="#111" stroke-width="0.4"/>
<rect x="290.80" y="106.70" width="10.10" height="11.10" fill="#f6fcff" />
<rect x="290.80" y="114.20" width="10.10" height="3.60" fill="#1aa2e2" />
<path d="M294.3 113.3h1.1v0.9h-1.1zM292.3 112.5h0.5v0.8h-0.5zM292.0 107.7h0.7v0.5h-0.7zM299.8 111.0h1.1v1.2h-1.1zM297.8 111.4h0.8v1.0h-0.8zM297.0 108.2h0.8v0.7h-0.8zM295.7 111.9h1.0v0.9h-1.0zM298.1 112.6h0.5v0.5h-0.5zM291.6 108.2h1.2v0.6h-1.2zM295.0 110.2h0.9v0.6h-0.9zM298.0 109.3h1.1v1.0h-1.1zM291.2 110.8h0.5v1.1h-0.5zM291.8 108.9h1.0v0.9h-1.0zM297.0 109.9h0.8v0.6h-0.8zM295.2 108.8h0.9v0.5h-0.9zM292.4 108.4h0.8v0.9h-0.8zM291.2 113.7h1.1v0.7h-1.1zM292.6 112.6h1.2v0.5h-1.2zM297.8 112.6h1.1v0.6h-1.1zM292.2 108.2h0.6v1.1h-0.6zM299.1 110.3h0.5v0.7h-0.5zM293.3 111.4h1.0v1.0h-1.0zM295.0 110.2h0.8v0.7h-0.8zM295.2 111.7h1.0v0.7h-1.0zM296.1 108.1h0.4v0.7h-0.4zM294.3 107.3h0.5v0.7h-0.5zM299.4 112.7h0.4v0.7h-0.4zM294.4 109.2h0.5v0.9h-0.5z" fill="#101820"/>
<rect x="281.60" y="111.40" width="7.60" height="6.40" fill="#f6fcff" />
<path d="M287.5 114.1h0.5v0.5h-0.5zM282.1 116.1h0.6v0.9h-0.6zM287.2 112.5h0.5v0.6h-0.5zM287.1 116.0h0.6v0.7h-0.6zM284.3 114.5h1.0v0.6h-1.0zM287.3 117.0h0.8v1.1h-0.8zM288.2 112.9h1.1v0.5h-1.1zM287.3 112.7h0.6v0.7h-0.6zM287.5 115.7h0.5v1.0h-0.5zM287.7 114.8h0.4v0.6h-0.4zM283.9 114.3h1.1v0.8h-1.1zM287.4 112.4h0.6v0.9h-0.6z" fill="#123"/>
<rect x="281.60" y="116.40" width="7.60" height="1.40" fill="#0a0606" opacity=".6"/>
<rect x="309.00" y="105.20" width="7.40" height="11.10" fill="#1aa2e2" />
<rect x="309.00" y="106.20" width="7.40" height="0.75" fill="#0a3c70" />
<rect x="309.00" y="108.20" width="7.40" height="0.75" fill="#0a3c70" />
<rect x="309.00" y="110.20" width="7.40" height="0.75" fill="#0a3c70" />
<rect x="309.00" y="112.20" width="7.40" height="0.75" fill="#0a3c70" />
<rect x="309.00" y="114.20" width="7.40" height="0.75" fill="#0a3c70" />
<rect x="309" y="105.2" width="7.4" height="11.1" fill="none" stroke="#111" stroke-width="0.4"/>
<rect x="317.60" y="110.40" width="9.80" height="11.10" fill="#f6fcff" />
<rect x="317.60" y="117.90" width="9.80" height="3.60" fill="#1aa2e2" />
<path d="M320.9 112.3h0.5v0.4h-0.5zM321.5 114.5h0.7v0.9h-0.7zM320.4 110.9h0.9v0.7h-0.9zM322.1 113.3h0.6v0.4h-0.6zM320.5 112.8h0.5v0.4h-0.5zM322.0 110.9h1.1v0.7h-1.1zM321.7 114.3h0.4v0.5h-0.4zM324.6 114.5h0.8v0.7h-0.8zM324.3 114.2h1.0v1.1h-1.0zM325.5 115.7h0.9v0.8h-0.9zM322.5 114.7h0.8v1.1h-0.8zM325.2 111.1h1.0v0.9h-1.0zM323.0 116.9h0.4v0.8h-0.4zM321.2 117.2h0.5v0.9h-0.5zM319.2 115.9h0.8v1.0h-0.8zM320.6 116.7h0.4v0.6h-0.4zM324.2 116.7h1.0v0.6h-1.0zM318.7 115.6h1.0v0.4h-1.0zM325.9 114.3h0.4v0.8h-0.4zM320.8 111.5h1.1v1.1h-1.1zM319.0 113.8h0.6v0.9h-0.6zM318.9 113.0h0.7v0.8h-0.7zM321.7 114.8h1.2v1.1h-1.2zM325.6 116.4h0.6v0.6h-0.6zM321.9 115.1h0.9v0.7h-0.9zM326.3 112.9h0.4v0.5h-0.4zM319.8 115.7h1.1v0.4h-1.1z" fill="#101820"/>
<rect x="309.00" y="116.30" width="7.40" height="5.60" fill="#0c1a2a" />
<rect x="310.00" y="118.00" width="5.40" height="1.40" fill="#eef" />
<rect x="298.60" y="106.00" width="1.00" height="10.60" fill="#0a0606" />
<rect x="301.40" y="102.00" width="1.00" height="20.00" fill="#0a0606" opacity=".8"/>
<rect x="303.00" y="104.00" width="3.40" height="1.20" fill="#0a0606" />
<rect x="328.00" y="98.00" width="1.40" height="8.00" fill="#0a0606" />
<rect x="328.40" y="110.00" width="1.00" height="10.00" fill="#0a0606" />
<path d="M280.4 100.6H292V104.4M306 103H331V108" stroke="#ff9a9a" stroke-width="0.4" fill="none"/>
<path d="M302.6 124.1h1.5v1.7h-1.5zM303.4 120.6h1.8v1.8h-1.8zM316.1 129.8h1.5v1.5h-1.5zM310.3 124.8h1.2v1.4h-1.2zM305.1 134.0h0.7v1.8h-0.7zM301.9 123.7h1.7v1.7h-1.7zM321.9 139.0h1.6v1.6h-1.6zM311.9 119.9h1.5v1.6h-1.5zM319.5 119.1h0.6v1.4h-0.6zM309.7 140.3h1.8v1.1h-1.8zM314.9 134.6h1.4v1.0h-1.4zM313.9 119.7h1.7v1.4h-1.7zM318.5 129.6h0.8v1.1h-0.8zM315.1 131.7h0.6v0.5h-0.6zM307.1 124.1h0.8v0.8h-0.8zM307.6 135.4h1.7v1.4h-1.7zM296.6 139.7h1.3v1.5h-1.3zM313.2 126.9h0.9v0.6h-0.9zM314.6 119.4h1.4v1.7h-1.4zM314.7 133.2h1.6v1.7h-1.6zM318.8 142.8h1.1v0.5h-1.1zM313.2 134.0h1.6v1.3h-1.6zM306.2 118.1h1.6v1.3h-1.6zM323.6 132.8h1.6v1.5h-1.6zM323.7 129.6h1.7v1.0h-1.7zM296.3 126.1h1.0v1.8h-1.0zM307.1 124.9h1.4v0.6h-1.4zM304.6 127.9h0.7v1.3h-0.7zM307.8 138.1h0.9v1.8h-0.9zM301.5 131.3h0.8v0.5h-0.8zM304.4 140.4h0.9v1.1h-0.9zM310.7 124.7h1.2v0.6h-1.2zM305.8 125.1h1.6v1.5h-1.6zM315.6 132.9h1.6v1.5h-1.6zM297.5 121.3h1.5v1.6h-1.5zM323.7 137.4h0.7v1.2h-0.7zM313.5 133.1h0.7v1.8h-0.7zM310.3 124.7h1.8v1.0h-1.8zM298.0 134.7h0.8v0.8h-0.8zM304.5 133.2h0.9v1.4h-0.9zM321.3 142.8h1.7v1.7h-1.7zM303.1 138.6h0.6v1.3h-0.6zM298.1 120.5h1.7v0.7h-1.7zM316.1 131.2h0.5v1.5h-0.5zM297.7 140.2h1.6v1.1h-1.6zM308.5 118.7h1.4v0.6h-1.4zM310.7 141.1h1.4v0.7h-1.4zM316.2 135.5h0.9v1.5h-0.9zM312.2 128.3h1.2v0.9h-1.2zM304.0 140.2h1.0v1.5h-1.0zM306.3 122.8h0.5v1.8h-0.5zM317.0 142.5h1.3v0.6h-1.3zM300.6 119.2h1.3v1.3h-1.3zM322.8 125.4h0.8v0.8h-0.8zM300.1 118.7h1.1v1.0h-1.1zM306.3 141.8h0.9v1.6h-0.9zM310.9 120.6h0.5v1.3h-0.5zM320.5 119.3h1.4v0.8h-1.4zM315.2 138.8h1.4v0.8h-1.4zM300.4 142.2h1.7v1.7h-1.7zM311.2 119.3h1.0v1.7h-1.0zM297.9 125.4h0.6v1.6h-0.6zM305.9 120.1h1.0v0.8h-1.0zM308.1 133.4h1.4v0.6h-1.4zM311.0 119.4h1.1v1.6h-1.1zM303.3 138.6h0.8v1.0h-0.8zM318.2 118.1h1.2v1.2h-1.2zM316.0 141.7h1.4v0.8h-1.4zM301.6 130.0h0.9v1.2h-0.9zM298.5 135.3h1.0v0.6h-1.0zM299.4 141.4h1.6v1.6h-1.6zM306.9 142.6h0.7v1.4h-0.7zM322.4 123.2h0.5v0.7h-0.5zM298.3 138.1h1.3v1.1h-1.3zM299.2 134.1h0.7v0.7h-0.7zM312.6 134.1h1.5v1.6h-1.5zM299.8 125.6h0.7v1.1h-0.7zM296.8 139.7h1.4v1.6h-1.4zM309.7 140.8h1.6v1.6h-1.6zM318.6 123.4h0.9v0.6h-0.9z" fill="#0a0606"/>
<path d="M316.6 129.9h1.5v0.9h-1.5zM308.9 138.2h1.5v1.3h-1.5zM319.3 139.4h0.8v1.2h-0.8zM300.5 134.2h1.5v1.1h-1.5zM302.4 132.0h0.7v1.0h-0.7zM300.8 128.8h1.3v1.3h-1.3zM318.6 129.6h1.0v0.6h-1.0zM317.1 132.0h1.0v0.7h-1.0zM309.5 121.3h0.7v0.7h-0.7zM308.8 122.9h1.3v1.1h-1.3zM318.9 131.6h0.7v0.8h-0.7zM318.3 132.3h1.2v1.2h-1.2z" fill="#1aa2e2"/>
<path d="M297.3 123.0v4.2M322.4 132.8h1.6M311.6 128.2h6.7M301.7 118.4v2.1M320.4 121.8v2.1M302.9 133.4v6.6M303.8 133.2v3.4M303.2 139.7v3.3M305.7 141.9h4.9M314.1 125.8h2.6M313.1 124.0v2.5M300.0 136.9h3.4M322.1 138.7v4.3M312.9 141.4v1.6M305.1 127.5h4.8M314.0 139.6h5.6M296.8 127.2v4.2M311.3 130.9v5.0M315.0 131.9h4.8M299.5 129.0v6.4M304.2 132.4h4.6M301.0 137.7h2.4" stroke="#0a0606" stroke-width="0.55" fill="none"/>
<rect x="300.00" y="128.60" width="8.00" height="1.00" fill="#0a0606" />
<rect x="303.00" y="133.60" width="9.00" height="1.00" fill="#0a0606" />
<rect x="296.00" y="137.00" width="8.00" height="0.90" fill="#0a0606" />
<rect x="310.00" y="121.00" width="1.00" height="8.00" fill="#0a0606" />
<rect x="325.00" y="127.60" width="5.00" height="9.80" fill="#0a1626" />
<rect x="325.40" y="128.00" width="4.20" height="1.50" fill="#8ab030" />
<rect x="325.40" y="130.00" width="4.20" height="2.00" fill="#1aa2e2" />
<rect x="325.40" y="135.00" width="4.20" height="2.00" fill="#eef6ff" />
<rect x="313.20" y="138.00" width="3.60" height="1.60" fill="#fff" />
<rect x="321.00" y="138.00" width="3.60" height="1.60" fill="#fff" />
<circle cx="343.4" cy="100.3" r="5.7" fill="none" stroke="#100" stroke-width="0.75"/>
<circle cx="343.4" cy="111.9" r="5.7" fill="none" stroke="#100" stroke-width="0.75"/>
<circle cx="343.4" cy="123.5" r="5.7" fill="none" stroke="#100" stroke-width="0.75"/>
<circle cx="343.4" cy="135.2" r="5.7" fill="none" stroke="#100" stroke-width="0.75"/>
<circle cx="343.4" cy="146.9" r="5.7" fill="none" stroke="#100" stroke-width="0.75"/>
<rect x="335.50" y="104.80" width="4.50" height="2.20" fill="#1aa2e2" />
<rect x="346.60" y="104.80" width="4.40" height="2.20" fill="#1aa2e2" />
<rect x="335.50" y="116.70" width="4.50" height="2.20" fill="#1aa2e2" />
<rect x="346.60" y="116.70" width="4.40" height="2.20" fill="#1aa2e2" />
<rect x="335.50" y="128.20" width="4.50" height="2.20" fill="#1aa2e2" />
<rect x="346.60" y="128.20" width="4.40" height="2.20" fill="#1aa2e2" />
<rect x="335.50" y="139.90" width="4.50" height="2.20" fill="#1aa2e2" />
<rect x="346.60" y="139.90" width="4.40" height="2.20" fill="#1aa2e2" />
<rect x="340.60" y="93.80" width="10.00" height="1.60" fill="#ff0000" />
<rect x="309.40" y="150.00" width="21.00" height="21.40" fill="none" stroke="#ff7a7a" stroke-width="0.4"/>
<rect x="313.20" y="152.50" width="15.60" height="16.50" fill="#b4dcf0" />
<path d="M317.5 155.9h0.5v0.4h-0.5zM321.1 155.4h0.8v0.8h-0.8zM322.6 160.3h0.8v0.6h-0.8zM320.3 163.6h0.5v0.8h-0.5zM322.1 168.2h0.8v0.7h-0.8zM324.8 157.3h0.6v0.7h-0.6zM324.3 164.1h0.5v1.0h-0.5zM327.9 160.6h1.0v0.8h-1.0zM319.1 154.1h0.4v0.8h-0.4zM324.0 162.5h0.9v0.7h-0.9zM324.4 162.3h0.8v0.7h-0.8zM323.3 161.6h0.5v0.8h-0.5zM323.8 159.5h1.0v0.7h-1.0zM315.9 160.8h0.6v0.5h-0.6zM326.6 155.5h0.8v0.5h-0.8zM321.1 168.5h0.5v0.9h-0.5zM313.5 168.2h0.9v0.7h-0.9zM322.8 160.0h0.5v0.6h-0.5zM319.9 166.5h0.5v0.7h-0.5zM320.4 161.5h0.9v0.8h-0.9zM318.2 167.9h0.8v0.6h-0.8zM321.5 166.5h0.4v0.8h-0.4zM320.6 157.3h0.5v0.5h-0.5zM319.9 159.4h0.8v0.6h-0.8zM322.6 160.2h0.9v0.9h-0.9zM316.9 168.2h0.7v0.6h-0.7zM317.2 164.0h0.7v0.8h-0.7zM317.2 166.4h0.6v0.9h-0.6zM319.9 159.1h0.7v0.7h-0.7zM321.5 161.6h1.0v0.8h-1.0zM314.8 168.4h0.4v0.4h-0.4zM325.5 157.1h0.4v0.5h-0.4zM320.7 166.1h0.4v0.5h-0.4zM313.6 153.6h0.6v0.7h-0.6zM327.7 163.0h0.9v0.8h-0.9zM326.9 163.4h0.5v0.6h-0.5zM320.5 154.4h1.0v0.7h-1.0zM316.4 160.5h0.9v0.6h-0.9zM322.1 154.2h0.5v0.5h-0.5zM320.9 163.6h0.5v0.8h-0.5zM322.1 164.6h1.0v0.6h-1.0zM328.1 159.9h0.7v0.5h-0.7zM314.7 163.0h0.5v0.4h-0.5zM314.6 161.3h0.5v0.6h-0.5zM324.8 159.8h0.5v0.8h-0.5zM328.1 162.6h0.7v0.7h-0.7zM323.8 166.0h0.9v0.5h-0.9zM324.9 154.3h0.5v0.7h-0.5zM316.1 161.6h0.6v1.0h-0.6zM319.8 165.7h1.0v0.7h-1.0zM324.8 160.5h0.6v0.5h-0.6zM323.1 167.4h0.8v0.6h-0.8zM321.2 158.4h0.6v0.9h-0.6zM313.5 160.4h0.7v0.5h-0.7zM324.2 156.7h0.6v0.5h-0.6zM322.2 159.5h0.8v0.7h-0.8zM325.0 161.5h0.5v0.7h-0.5zM317.1 157.4h1.0v0.7h-1.0zM324.3 155.2h0.8v0.5h-0.8zM316.7 154.7h0.4v0.9h-0.4z" fill="#284a60"/>
<path d="M327.7 158.5h0.5v1.1h-0.5zM323.2 153.4h1.1v0.6h-1.1zM316.8 165.1h1.1v0.7h-1.1zM320.9 165.4h1.0v0.9h-1.0zM316.1 153.8h0.7v0.9h-0.7zM322.2 160.0h1.0v1.0h-1.0zM323.0 159.2h1.2v0.9h-1.2zM326.4 168.4h1.2v1.1h-1.2zM323.6 161.5h0.7v0.6h-0.7zM323.2 156.6h1.0v0.9h-1.0zM322.4 159.5h0.7v0.7h-0.7zM323.7 166.8h0.8v0.8h-0.8zM320.0 159.5h1.0v1.1h-1.0zM324.8 165.6h1.1v1.3h-1.1zM320.0 159.8h1.0v0.8h-1.0zM325.7 159.3h0.9v0.9h-0.9zM318.8 152.9h0.7v0.9h-0.7zM327.5 154.9h1.2v1.3h-1.2zM325.1 157.1h0.5v1.2h-0.5zM314.4 157.4h1.3v1.0h-1.3zM325.6 166.0h0.6v0.9h-0.6zM314.8 158.7h0.9v1.2h-0.9z" fill="#f0faff"/>
<rect x="315.40" y="160.40" width="11.00" height="1.00" fill="#0a0606" opacity=".7"/>
<rect x="307.20" y="150.40" width="2.20" height="2.60" fill="#0a2a44" />
<rect x="309.60" y="150.60" width="1.80" height="2.20" fill="#1aa2e2" />
<rect x="302.00" y="151.40" width="5.00" height="0.60" fill="#0a0606" />
<rect x="307.20" y="159.40" width="2.20" height="2.60" fill="#0a2a44" />
<rect x="309.60" y="159.60" width="1.80" height="2.20" fill="#1aa2e2" />
<rect x="302.00" y="160.40" width="5.00" height="0.60" fill="#0a0606" />
<rect x="307.20" y="165.60" width="2.20" height="2.60" fill="#0a2a44" />
<rect x="309.60" y="165.80" width="1.80" height="2.20" fill="#1aa2e2" />
<rect x="302.00" y="166.60" width="5.00" height="0.60" fill="#0a0606" />
<rect x="332.40" y="143.90" width="4.40" height="8.60" fill="#0a2a44" />
<rect x="333.00" y="145.00" width="3.20" height="2.40" fill="#1aa2e2" />
<rect x="333.00" y="149.00" width="3.20" height="2.40" fill="#1aa2e2" />
<rect x="339.00" y="139.40" width="5.00" height="1.60" fill="#1aa2e2" />
<rect x="346.00" y="139.40" width="3.00" height="1.60" fill="#1aa2e2" />
<rect x="341.60" y="150.60" width="4.60" height="4.40" fill="#1aa2e2" stroke="#012" stroke-width="0.4"/>
<rect x="338.70" y="156.80" width="10.00" height="7.00" fill="#f8fbff" />
<rect x="338.70" y="156.80" width="2.60" height="7.00" fill="#2a70d0" />
<path d="M343.5 161.4h0.6v0.7h-0.6zM342.0 160.9h1.0v1.1h-1.0zM344.3 163.0h1.1v1.0h-1.1zM347.2 158.5h0.7v0.9h-0.7zM345.4 163.1h1.0v0.5h-1.0zM347.6 160.2h0.7v1.1h-0.7zM345.6 162.5h0.9v0.7h-0.9zM344.6 160.2h0.8v1.0h-0.8zM342.6 158.9h0.6v0.5h-0.6zM345.0 161.8h0.8v1.2h-0.8zM345.5 161.4h0.7v1.2h-0.7zM343.8 162.5h0.7v1.3h-0.7zM346.0 158.5h1.1v0.6h-1.1zM344.1 159.7h0.8v0.8h-0.8z" fill="#78a"/>
<path d="M336.4 160.4h0.6v1.6h-0.6zM339.3 168.5h1.1v1.9h-1.1zM347.2 168.3h1.7v1.8h-1.7zM348.0 160.7h1.3v0.6h-1.3zM339.5 158.5h1.4v0.5h-1.4zM345.3 151.9h1.1v1.2h-1.1zM346.6 166.4h0.7v1.4h-0.7zM337.5 166.0h1.1v1.8h-1.1zM340.7 157.1h0.9v1.8h-0.9zM339.2 156.3h1.2v1.4h-1.2zM348.1 152.1h1.0v1.5h-1.0zM341.4 168.0h1.4v0.6h-1.4zM334.8 154.6h0.9v0.8h-0.9zM338.3 153.0h0.5v1.2h-0.5zM345.4 154.1h0.6v1.5h-0.6zM335.2 153.6h1.2v0.9h-1.2zM345.8 163.2h1.2v1.0h-1.2zM334.4 171.3h1.0v1.7h-1.0zM335.6 161.2h1.3v0.7h-1.3zM335.1 174.3h1.8v1.9h-1.8zM342.2 169.1h1.3v1.2h-1.3zM336.6 166.7h1.1v1.5h-1.1zM334.6 157.6h0.7v1.6h-0.7zM341.2 157.4h1.6v1.2h-1.6zM338.4 160.2h0.5v0.6h-0.5zM334.6 175.0h1.7v1.3h-1.7zM348.1 164.0h1.5v0.6h-1.5zM340.5 165.9h1.1v1.4h-1.1zM339.1 167.0h0.8v1.2h-0.8zM340.4 163.7h0.6v0.8h-0.6zM344.7 154.3h1.2v1.9h-1.2zM343.1 169.1h1.6v1.9h-1.6zM339.8 160.3h1.6v0.5h-1.6zM341.0 157.1h1.3v1.5h-1.3zM346.9 163.2h1.5v0.6h-1.5zM343.9 174.2h1.4v1.2h-1.4zM341.7 160.7h0.8v0.8h-0.8zM345.9 163.4h0.6v1.4h-0.6zM346.5 166.9h0.8v1.8h-0.8zM336.7 163.2h1.1v0.7h-1.1zM338.0 154.8h0.7v0.6h-0.7zM343.7 167.3h0.9v1.8h-0.9zM340.3 161.9h1.8v1.4h-1.8zM341.0 169.4h1.5v0.9h-1.5zM335.0 169.0h1.5v1.3h-1.5zM335.8 169.4h0.7v1.6h-0.7zM343.3 166.6h0.6v1.0h-0.6zM345.0 152.9h0.6v1.1h-0.6zM346.8 166.4h0.8v0.6h-0.8zM346.6 171.9h1.5v0.8h-1.5zM345.3 150.3h0.7v0.9h-0.7zM348.4 150.9h0.7v1.5h-0.7zM345.4 157.0h0.6v1.7h-0.6zM348.6 173.6h1.3v0.6h-1.3zM345.1 166.9h1.7v1.6h-1.7zM341.5 175.4h1.1v1.1h-1.1zM343.6 170.5h1.3v1.8h-1.3zM338.1 173.3h1.7v1.0h-1.7zM334.4 165.6h1.4v1.8h-1.4zM342.4 168.8h1.6v0.7h-1.6zM344.0 161.4h0.8v0.9h-0.8zM339.4 169.1h1.3v0.9h-1.3z" fill="#0a0606"/>
<path d="M334.8 170.9v5.0M345.8 153.5h3.1M338.5 171.8h2.8M340.8 153.2v2.1M343.1 165.0v2.3M341.8 159.3h2.9M341.2 160.8v4.3M338.1 166.6v3.0M337.1 166.3v4.9M342.0 173.9v2.1M339.4 158.4h4.5M336.7 154.3h4.6M347.8 171.4h1.2M338.8 153.3v2.4M338.5 152.2h5.9M345.6 162.9h3.4M341.1 167.5v2.1M339.1 168.3h2.3" stroke="#0a0606" stroke-width="0.55" fill="none"/>
<rect x="336.60" y="165.60" width="9.00" height="1.40" fill="#0a0606" />
<rect x="338.00" y="169.00" width="7.00" height="2.20" fill="#0a0606" />
<rect x="335.00" y="179.40" width="1.80" height="8.80" fill="#091c30" />
<rect x="335.30" y="180.80" width="1.20" height="2.20" fill="#1aa2e2" />
<rect x="335.30" y="184.60" width="1.20" height="2.20" fill="#1aa2e2" />
<rect x="337.50" y="179.40" width="1.80" height="8.80" fill="#091c30" />
<rect x="337.80" y="180.80" width="1.20" height="2.20" fill="#1aa2e2" />
<rect x="337.80" y="184.60" width="1.20" height="2.20" fill="#1aa2e2" />
<rect x="340.00" y="179.40" width="1.80" height="8.80" fill="#091c30" />
<rect x="340.30" y="180.80" width="1.20" height="2.20" fill="#1aa2e2" />
<rect x="340.30" y="184.60" width="1.20" height="2.20" fill="#1aa2e2" />
<rect x="342.50" y="179.40" width="1.80" height="8.80" fill="#091c30" />
<rect x="342.80" y="180.80" width="1.20" height="2.20" fill="#1aa2e2" />
<rect x="342.80" y="184.60" width="1.20" height="2.20" fill="#1aa2e2" />
<rect x="345.00" y="179.40" width="1.80" height="8.80" fill="#091c30" />
<rect x="345.30" y="180.80" width="1.20" height="2.20" fill="#1aa2e2" />
<rect x="345.30" y="184.60" width="1.20" height="2.20" fill="#1aa2e2" />
<rect x="284.70" y="164.60" width="13.80" height="2.80" fill="#bcc6de" />
<rect x="287.00" y="165.30" width="9.00" height="1.30" fill="#eef2fa" />
<rect x="284.2" y="164.1" width="14.5" height="3.8" fill="none" stroke="#111" stroke-width="0.4" stroke-dasharray="0.8 0.6"/>
<rect x="284.70" y="170.20" width="13.80" height="2.80" fill="#bcc6de" />
<rect x="287.00" y="170.90" width="9.00" height="1.30" fill="#eef2fa" />
<rect x="284.2" y="169.7" width="14.5" height="3.8" fill="none" stroke="#111" stroke-width="0.4" stroke-dasharray="0.8 0.6"/>
<rect x="284.70" y="178.50" width="13.80" height="2.80" fill="#bcc6de" />
<rect x="287.00" y="179.20" width="9.00" height="1.30" fill="#eef2fa" />
<rect x="284.2" y="178.0" width="14.5" height="3.8" fill="none" stroke="#111" stroke-width="0.4" stroke-dasharray="0.8 0.6"/>
<rect x="284.70" y="183.70" width="13.80" height="2.80" fill="#bcc6de" />
<rect x="287.00" y="184.40" width="9.00" height="1.30" fill="#eef2fa" />
<rect x="284.2" y="183.2" width="14.5" height="3.8" fill="none" stroke="#111" stroke-width="0.4" stroke-dasharray="0.8 0.6"/>
<rect x="316.00" y="180.60" width="5.00" height="2.00" fill="#3c3408" />
<rect x="323.00" y="173.60" width="1.60" height="1.60" fill="#fff" />
<rect x="326.00" y="181.60" width="2.00" height="1.20" fill="#fff" />
<rect x="322.60" y="179.00" width="1.00" height="1.00" fill="#fff" />
<rect x="305.20" y="194.90" width="16.20" height="45.00" fill="none" stroke="#140000" stroke-width="1"/>
<rect x="309.00" y="196.00" width="9.00" height="2.60" fill="#1aa2e2" />
<path d="M309.9 197.9h0.9v0.9h-0.9zM313.7 196.4h0.8v0.7h-0.8zM315.8 197.6h0.7v0.6h-0.7zM310.4 196.4h0.7v0.6h-0.7zM317.2 196.3h0.8v0.5h-0.8zM310.1 198.2h0.6v0.7h-0.6zM314.1 197.1h0.6v0.6h-0.6zM315.0 197.0h0.7v0.8h-0.7z" fill="#0a0606"/>
<rect x="308.00" y="203.40" width="10.40" height="3.20" fill="#0a0606" />
<rect x="309.20" y="200.40" width="8.00" height="1.00" fill="#500" />
<rect x="309.80" y="207.40" width="7.00" height="0.90" fill="#400" />
<rect x="305.70" y="200.60" width="1.40" height="1.70" fill="#86a428" />
<rect x="319.50" y="200.60" width="1.40" height="1.70" fill="#86a428" />
<rect x="305.70" y="206.40" width="1.40" height="1.70" fill="#86a428" />
<rect x="319.50" y="206.40" width="1.40" height="1.70" fill="#86a428" />
<rect x="305.70" y="212.00" width="1.40" height="1.70" fill="#86a428" />
<rect x="319.50" y="212.00" width="1.40" height="1.70" fill="#86a428" />
<rect x="305.70" y="217.60" width="1.40" height="1.70" fill="#86a428" />
<rect x="319.50" y="217.60" width="1.40" height="1.70" fill="#86a428" />
<rect x="305.70" y="223.20" width="1.40" height="1.70" fill="#86a428" />
<rect x="319.50" y="223.20" width="1.40" height="1.70" fill="#86a428" />
<rect x="305.70" y="228.80" width="1.40" height="1.70" fill="#86a428" />
<rect x="319.50" y="228.80" width="1.40" height="1.70" fill="#86a428" />
<rect x="305.70" y="234.40" width="1.40" height="1.70" fill="#86a428" />
<rect x="319.50" y="234.40" width="1.40" height="1.70" fill="#86a428" />
<rect x="310.80" y="212.00" width="2.20" height="2.40" fill="#a8c830" />
<rect x="315.80" y="212.00" width="2.20" height="2.40" fill="#a8c830" />
<rect x="311.20" y="233.40" width="2.60" height="2.40" fill="#a8c830" />
<path d="M313.4 215V232.6" stroke="#100" stroke-width="0.7" stroke-dasharray="1.2 0.7"/>
<rect x="305.00" y="240.10" width="16.40" height="6.50" fill="#8c8c8c" stroke="#1c1c1c" stroke-width="0.7"/>
<rect x="305.60" y="240.80" width="15.20" height="1.20" fill="#b0b0b0" />
<rect x="305.80" y="245.20" width="14.80" height="0.80" fill="#555" />
<rect x="325.50" y="194.90" width="16.20" height="45.00" fill="none" stroke="#140000" stroke-width="1"/>
<rect x="329.30" y="196.00" width="9.00" height="2.60" fill="#1aa2e2" />
<path d="M330.1 197.1h0.6v0.9h-0.6zM334.7 196.6h0.7v0.5h-0.7zM333.8 196.4h0.6v0.7h-0.6zM334.0 196.7h0.7v0.6h-0.7zM335.4 196.3h0.8v0.7h-0.8zM331.0 196.8h0.8v0.5h-0.8zM337.2 196.7h0.7v0.5h-0.7zM333.3 198.3h0.6v0.6h-0.6z" fill="#0a0606"/>
<rect x="328.30" y="203.40" width="10.40" height="3.20" fill="#0a0606" />
<rect x="329.50" y="200.40" width="8.00" height="1.00" fill="#500" />
<rect x="330.10" y="207.40" width="7.00" height="0.90" fill="#400" />
<rect x="326.00" y="200.60" width="1.40" height="1.70" fill="#86a428" />
<rect x="339.80" y="200.60" width="1.40" height="1.70" fill="#86a428" />
<rect x="326.00" y="206.40" width="1.40" height="1.70" fill="#86a428" />
<rect x="339.80" y="206.40" width="1.40" height="1.70" fill="#86a428" />
<rect x="326.00" y="212.00" width="1.40" height="1.70" fill="#86a428" />
<rect x="339.80" y="212.00" width="1.40" height="1.70" fill="#86a428" />
<rect x="326.00" y="217.60" width="1.40" height="1.70" fill="#86a428" />
<rect x="339.80" y="217.60" width="1.40" height="1.70" fill="#86a428" />
<rect x="326.00" y="223.20" width="1.40" height="1.70" fill="#86a428" />
<rect x="339.80" y="223.20" width="1.40" height="1.70" fill="#86a428" />
<rect x="326.00" y="228.80" width="1.40" height="1.70" fill="#86a428" />
<rect x="339.80" y="228.80" width="1.40" height="1.70" fill="#86a428" />
<rect x="326.00" y="234.40" width="1.40" height="1.70" fill="#86a428" />
<rect x="339.80" y="234.40" width="1.40" height="1.70" fill="#86a428" />
<rect x="331.10" y="212.00" width="2.20" height="2.40" fill="#a8c830" />
<rect x="336.10" y="212.00" width="2.20" height="2.40" fill="#a8c830" />
<rect x="331.50" y="233.40" width="2.60" height="2.40" fill="#a8c830" />
<path d="M333.7 215V232.6" stroke="#100" stroke-width="0.7" stroke-dasharray="1.2 0.7"/>
<rect x="325.30" y="240.10" width="16.40" height="6.50" fill="#8c8c8c" stroke="#1c1c1c" stroke-width="0.7"/>
<rect x="325.90" y="240.80" width="15.20" height="1.20" fill="#b0b0b0" />
<rect x="326.10" y="245.20" width="14.80" height="0.80" fill="#555" />
<rect x="275.90" y="210.00" width="1.80" height="10.60" fill="#091c30" />
<rect x="276.20" y="211.60" width="1.20" height="2.40" fill="#1aa2e2" />
<rect x="276.20" y="216.20" width="1.20" height="2.40" fill="#1aa2e2" />
<rect x="278.35" y="210.00" width="1.80" height="10.60" fill="#091c30" />
<rect x="278.65" y="211.60" width="1.20" height="2.40" fill="#1aa2e2" />
<rect x="278.65" y="216.20" width="1.20" height="2.40" fill="#1aa2e2" />
<rect x="280.80" y="210.00" width="1.80" height="10.60" fill="#091c30" />
<rect x="281.10" y="211.60" width="1.20" height="2.40" fill="#1aa2e2" />
<rect x="281.10" y="216.20" width="1.20" height="2.40" fill="#1aa2e2" />
<rect x="283.25" y="210.00" width="1.80" height="10.60" fill="#091c30" />
<rect x="283.55" y="211.60" width="1.20" height="2.40" fill="#1aa2e2" />
<rect x="283.55" y="216.20" width="1.20" height="2.40" fill="#1aa2e2" />
<rect x="285.70" y="210.00" width="1.80" height="10.60" fill="#091c30" />
<rect x="286.00" y="211.60" width="1.20" height="2.40" fill="#1aa2e2" />
<rect x="286.00" y="216.20" width="1.20" height="2.40" fill="#1aa2e2" />
<rect x="291.70" y="210.00" width="5.10" height="10.20" fill="#160a06" />
<rect x="292.60" y="211.40" width="3.40" height="2.60" fill="#6a1208" />
<rect x="292.60" y="215.60" width="3.40" height="2.60" fill="#000" />
<rect x="283.00" y="224.00" width="10.70" height="1.90" fill="#0a0606" />
<rect x="283.00" y="226.80" width="10.70" height="1.90" fill="#0a0606" />
<rect x="283.00" y="229.60" width="10.70" height="2.20" fill="#0a0606" />
<rect x="278.40" y="232.00" width="17.60" height="14.00" fill="none" stroke="#140000" stroke-width="0.9"/>
<rect x="281.40" y="237.60" width="5.00" height="5.00" fill="#8a0000" />
<rect x="288.00" y="237.60" width="5.00" height="5.00" fill="#8a0000" />
<rect x="280.00" y="235.00" width="1.40" height="2.00" fill="#9cb82c" />
<rect x="293.60" y="235.00" width="1.40" height="2.00" fill="#9cb82c" />
<path d="M288.2 240.7h0.7v0.8h-0.7zM289.1 235.9h0.6v1.3h-0.6zM293.0 242.7h1.5v0.8h-1.5zM284.6 240.2h1.2v1.2h-1.2zM288.3 235.8h0.8v0.7h-0.8zM280.9 240.0h0.7v1.5h-0.7zM294.4 234.8h1.6v1.2h-1.6zM280.1 237.6h1.0v0.9h-1.0zM281.0 235.9h0.6v1.0h-0.6zM287.2 235.8h1.5v1.5h-1.5zM287.5 242.6h1.0v1.4h-1.0zM291.7 237.2h1.3v1.0h-1.3z" fill="#0a0606"/>
<rect x="283.00" y="246.00" width="8.40" height="3.40" fill="#e4e4e4" stroke="#555" stroke-width="0.4"/>
<rect x="284.40" y="247.20" width="5.60" height="1.00" fill="#555" />
<rect x="257.40" y="212.70" width="10.20" height="8.70" fill="#1aa2e2" rx="1.6"/>
<rect x="259.00" y="214.20" width="7.00" height="5.60" fill="#0a64a8" rx="0.8"/>
<rect x="259.80" y="215.00" width="5.40" height="1.40" fill="#2ab0ee" />
<rect x="253.40" y="225.00" width="5.60" height="2.40" fill="#0a0606" rx="0.8"/>
<rect x="262.40" y="222.00" width="0.70" height="7.00" fill="#0a0606" />
<rect x="254.60" y="229.10" width="14.60" height="17.00" fill="none" stroke="#140000" stroke-width="0.8"/>
<rect x="256.80" y="230.20" width="4.40" height="2.60" fill="#b4d468" />
<rect x="262.80" y="230.20" width="4.40" height="2.60" fill="#b4d468" />
<rect x="257.00" y="237.60" width="4.40" height="5.40" fill="#8a0000" />
<rect x="262.60" y="237.60" width="4.40" height="5.40" fill="#8a0000" />
<rect x="255.00" y="234.40" width="1.20" height="2.00" fill="#9cb82c" />
<rect x="267.60" y="234.40" width="1.20" height="2.00" fill="#9cb82c" />
<path d="M178.6 208.2h0.7v1.5h-0.7zM180.3 209.3h1.6v1.3h-1.6zM194.1 212.3h1.5v1.5h-1.5zM189.5 214.9h1.3v1.4h-1.3zM186.5 209.8h1.8v0.9h-1.8zM179.0 209.3h0.9v1.5h-0.9zM188.4 202.6h0.8v1.4h-0.8zM183.3 211.7h1.2v0.7h-1.2zM189.5 215.6h0.6v1.4h-0.6zM187.9 210.8h1.2v1.2h-1.2zM195.8 214.3h1.1v1.6h-1.1zM189.0 213.4h1.9v0.6h-1.9zM179.5 205.7h1.6v1.8h-1.6zM179.8 209.1h1.7v1.5h-1.7zM187.3 214.6h1.8v0.6h-1.8zM195.3 206.5h1.4v1.6h-1.4zM181.2 206.7h1.8v1.6h-1.8zM195.5 203.9h1.4v1.5h-1.4zM195.1 212.3h0.9v0.6h-0.9zM178.6 206.1h1.3v1.0h-1.3zM178.1 203.8h1.5v1.6h-1.5zM177.6 209.5h1.9v1.0h-1.9zM186.2 213.5h0.5v1.7h-0.5zM191.3 212.5h1.0v1.2h-1.0zM194.8 203.4h0.6v1.4h-0.6zM195.0 204.6h0.8v1.1h-0.8zM191.6 210.2h1.4v0.6h-1.4zM179.2 210.4h1.5v0.6h-1.5zM176.9 206.8h1.1v1.0h-1.1zM178.6 203.6h1.4v1.8h-1.4zM188.3 214.9h0.7v1.4h-0.7zM182.7 214.0h1.3v1.4h-1.3zM194.2 215.4h0.7v1.1h-0.7zM176.8 210.1h0.8v1.5h-0.8zM182.5 202.7h1.7v0.7h-1.7zM180.6 209.6h0.6v1.6h-0.6zM190.0 204.2h1.4v0.7h-1.4zM186.1 203.9h0.9v1.1h-0.9zM186.4 211.4h1.8v1.0h-1.8zM182.4 205.4h1.5v1.0h-1.5zM179.4 205.2h1.1v1.7h-1.1zM184.2 213.5h1.2v1.3h-1.2zM180.4 208.1h1.5v0.6h-1.5zM184.5 206.0h0.9v1.0h-0.9zM179.2 210.3h0.6v0.8h-0.6zM180.5 205.0h1.7v1.5h-1.7zM193.6 204.4h0.8v0.9h-0.8zM185.7 213.8h1.7v1.7h-1.7zM175.4 203.0h1.0v1.1h-1.0zM175.1 207.3h0.7v1.7h-0.7z" fill="#0a0606"/>
<path d="M179.4 206.9v2.5M177.4 208.5h2.7M195.9 212.2h0.1M195.5 215.5h0.5M176.0 209.9v3.5M196.0 213.5v2.5M187.9 203.1v2.6M191.7 212.5h4.0M194.7 206.6v4.3M185.3 209.7v4.8M183.3 214.0h2.5M181.7 203.2h3.2M195.3 213.6h0.7M180.5 213.0h2.9" stroke="#0a0606" stroke-width="0.55" fill="none"/>
<rect x="176.60" y="203.60" width="2.00" height="5.00" fill="#0a4a8a" />
<rect x="179.60" y="203.60" width="2.00" height="5.00" fill="#0a4a8a" />
<rect x="176.00" y="210.60" width="4.00" height="3.00" fill="#1a80c0" />
<rect x="181.00" y="209.00" width="4.00" height="2.00" fill="#0a0606" />
<rect x="186.30" y="208.60" width="7.40" height="5.90" fill="#0c1c2c" />
<rect x="187.30" y="209.60" width="5.40" height="3.90" fill="#1a80c0" />
<rect x="188.40" y="210.60" width="3.20" height="1.90" fill="#0c1c2c" />
<rect x="194.60" y="207.00" width="1.40" height="6.00" fill="#1a80c0" />
<path d="M179.6 220.9H198.9V244.4H179.6Z" fill="none" stroke="#140000" stroke-width="0.6"/>
<path d="M182.0 222.3h1v1h-1zM182.3 225.1h1v1h-1zM184.1 222.3h1v1h-1zM184.4 225.1h1v1h-1zM186.1 222.3h1v1h-1zM186.4 225.1h1v1h-1zM188.2 222.3h1v1h-1zM188.5 225.1h1v1h-1zM190.2 222.3h1v1h-1zM190.5 225.1h1v1h-1zM192.3 222.3h1v1h-1zM192.6 225.1h1v1h-1zM194.3 222.3h1v1h-1zM194.6 225.1h1v1h-1z" fill="#e4d028"/>
<circle cx="184.0" cy="232.8" r="1.5" fill="#fff"/><circle cx="194.3" cy="232.8" r="1.5" fill="#fff"/>
<rect x="179.40" y="231.90" width="1.40" height="1.80" fill="#9cb82c" />
<rect x="197.70" y="231.90" width="1.40" height="1.80" fill="#9cb82c" />
<rect x="181.00" y="235.90" width="1.30" height="6.80" fill="#c8c828" />
<rect x="196.20" y="235.90" width="1.30" height="6.80" fill="#c8c828" />
<rect x="184.60" y="233.90" width="1.00" height="8.00" fill="#900" />
<rect x="192.90" y="233.90" width="1.00" height="8.00" fill="#900" />
<rect x="188.85" y="232.90" width="0.80" height="10.00" fill="#a00" />
<path d="M179.79999999999998 244.2 H198.70000000000002 L197.70000000000002 246.7 H180.79999999999998 Z" fill="#fff" stroke="#111" stroke-width="0.6"/>
<path d="M204.4 223.9H222.20000000000002V244.4H204.4Z" fill="none" stroke="#140000" stroke-width="1.0"/>
<path d="M206.8 225.3h1v1h-1zM207.1 228.1h1v1h-1zM208.9 225.3h1v1h-1zM209.2 228.1h1v1h-1zM210.9 225.3h1v1h-1zM211.2 228.1h1v1h-1zM213.0 225.3h1v1h-1zM213.3 228.1h1v1h-1zM215.0 225.3h1v1h-1zM215.3 228.1h1v1h-1zM217.1 225.3h1v1h-1zM217.4 228.1h1v1h-1zM219.1 225.3h1v1h-1zM219.4 228.1h1v1h-1z" fill="#e4d028"/>
<circle cx="207.20000000000002" cy="234.6" r="1.5" fill="#fff"/><circle cx="219.4" cy="234.6" r="1.5" fill="#fff"/>
<rect x="204.20" y="233.70" width="1.40" height="1.80" fill="#9cb82c" />
<rect x="221.00" y="233.70" width="1.40" height="1.80" fill="#9cb82c" />
<rect x="208.80" y="230.10" width="9.00" height="1.20" fill="#0a0606" />
<path d="M212.6 232.6h0.7v0.9h-0.7zM213.9 233.1h0.9v1.3h-0.9zM210.9 233.2h0.7v1.2h-0.7zM213.7 231.4h1.2v1.2h-1.2zM209.7 233.5h1.3v0.8h-1.3zM216.1 233.1h1.0v0.9h-1.0zM211.5 233.3h1.1v1.3h-1.1zM209.1 232.6h1.1v0.8h-1.1zM208.6 233.6h1.1v1.1h-1.1zM211.7 232.2h1.2v0.7h-1.2z" fill="#0a0606"/>
<rect x="209.00" y="237.90" width="3.60" height="5.00" fill="#a00000" />
<rect x="214.00" y="237.90" width="3.60" height="5.00" fill="#a00000" />
<path d="M204.6 244.2 H222.00000000000003 L221.00000000000003 246.7 H205.6 Z" fill="#fff" stroke="#111" stroke-width="0.6"/>
<path d="M229 223.9H246.9V244.4H229Z" fill="none" stroke="#140000" stroke-width="1.0"/>
<path d="M231.4 225.3h1v1h-1zM231.7 228.1h1v1h-1zM233.5 225.3h1v1h-1zM233.8 228.1h1v1h-1zM235.5 225.3h1v1h-1zM235.8 228.1h1v1h-1zM237.6 225.3h1v1h-1zM237.9 228.1h1v1h-1zM239.6 225.3h1v1h-1zM239.9 228.1h1v1h-1zM241.7 225.3h1v1h-1zM242.0 228.1h1v1h-1zM243.7 225.3h1v1h-1zM244.0 228.1h1v1h-1z" fill="#e4d028"/>
<circle cx="231.8" cy="234.6" r="1.5" fill="#fff"/><circle cx="244.1" cy="234.6" r="1.5" fill="#fff"/>
<rect x="228.80" y="233.70" width="1.40" height="1.80" fill="#9cb82c" />
<rect x="245.70" y="233.70" width="1.40" height="1.80" fill="#9cb82c" />
<rect x="233.40" y="230.10" width="9.10" height="1.20" fill="#0a0606" />
<path d="M240.2 233.0h0.9v1.3h-0.9zM239.3 233.6h0.7v0.9h-0.7zM235.9 232.4h1.1v1.3h-1.1zM242.0 233.5h1.3v1.1h-1.3zM240.3 231.2h0.9v0.9h-0.9zM234.0 233.6h0.9v0.8h-0.9zM233.8 232.5h0.8v1.3h-0.8zM239.3 232.2h0.7v0.6h-0.7zM239.8 232.7h0.9v1.0h-0.9zM237.1 233.6h0.6v0.8h-0.6z" fill="#0a0606"/>
<rect x="233.60" y="237.90" width="3.60" height="5.00" fill="#a00000" />
<rect x="238.70" y="237.90" width="3.60" height="5.00" fill="#a00000" />
<path d="M229.2 244.2 H246.70000000000002 L245.70000000000002 246.7 H230.2 Z" fill="#fff" stroke="#111" stroke-width="0.6"/>
<rect x="207.20" y="209.60" width="9.60" height="10.60" fill="none" stroke="#060610" stroke-width="0.8" rx="1.2"/>
<rect x="208.60" y="210.80" width="6.70" height="8.20" fill="#1aa2e2" />
<rect x="209.80" y="212.40" width="4.30" height="5.00" fill="#3ab6f2" />
<rect x="208.60" y="210.80" width="6.70" height="8.20" fill="none" stroke="#0a3a6a" stroke-width="0.5"/>
<rect x="216.20" y="207.00" width="8.00" height="5.20" fill="#08121e" />
<rect x="217.00" y="208.00" width="2.60" height="1.40" fill="#1a70b0" />
<rect x="220.60" y="208.00" width="2.60" height="1.40" fill="#1a70b0" />
<rect x="203.60" y="207.60" width="5.00" height="1.00" fill="#0a0606" />
<rect x="204.20" y="211.00" width="1.60" height="6.00" fill="#0a0606" />
<rect x="217.20" y="214.60" width="5.00" height="1.00" fill="#0a0606" />
<rect x="216.60" y="218.00" width="4.00" height="2.40" fill="#0a2a44" />
<rect x="209.60" y="205.60" width="5.00" height="1.20" fill="#0a2a44" />
<rect x="202.20" y="218.60" width="2.00" height="2.00" fill="#0a0606" />
<rect x="232.40" y="209.60" width="9.60" height="10.60" fill="none" stroke="#060610" stroke-width="0.8" rx="1.2"/>
<rect x="233.80" y="210.80" width="6.70" height="8.20" fill="#1aa2e2" />
<rect x="235.00" y="212.40" width="4.30" height="5.00" fill="#3ab6f2" />
<rect x="233.80" y="210.80" width="6.70" height="8.20" fill="none" stroke="#0a3a6a" stroke-width="0.5"/>
<rect x="241.40" y="207.00" width="8.00" height="5.20" fill="#08121e" />
<rect x="242.20" y="208.00" width="2.60" height="1.40" fill="#1a70b0" />
<rect x="245.80" y="208.00" width="2.60" height="1.40" fill="#1a70b0" />
<rect x="228.80" y="207.60" width="5.00" height="1.00" fill="#0a0606" />
<rect x="229.40" y="211.00" width="1.60" height="6.00" fill="#0a0606" />
<rect x="242.40" y="214.60" width="5.00" height="1.00" fill="#0a0606" />
<rect x="241.80" y="218.00" width="4.00" height="2.40" fill="#0a2a44" />
<rect x="234.80" y="205.60" width="5.00" height="1.20" fill="#0a2a44" />
<rect x="227.40" y="218.60" width="2.00" height="2.00" fill="#0a0606" />
<path d="M239.9 209.7h0.9v1.0h-0.9zM215.5 217.7h0.6v1.1h-0.6zM236.0 210.2h1.3v0.9h-1.3zM231.5 205.8h0.8v1.1h-0.8zM231.0 212.3h0.5v1.1h-0.5zM243.4 208.9h0.7v1.2h-0.7zM212.4 205.8h0.6v1.2h-0.6zM244.2 217.9h1.1v1.5h-1.1zM242.6 208.8h0.9v1.6h-0.9zM247.2 215.5h1.2v0.9h-1.2zM205.4 209.9h0.8v1.2h-0.8zM233.1 215.3h1.5v0.5h-1.5zM211.1 205.8h0.9v1.5h-0.9zM223.9 218.4h0.7v0.9h-0.7zM240.1 209.3h1.3v1.2h-1.3zM233.1 204.5h0.9v1.6h-0.9zM219.4 209.0h1.6v1.1h-1.6zM235.1 212.7h1.2v0.9h-1.2zM214.5 209.2h0.8v1.3h-0.8zM205.3 206.1h1.1v1.6h-1.1zM239.3 216.0h1.3v0.7h-1.3zM226.0 204.3h1.1v0.5h-1.1zM206.7 206.2h0.9v1.0h-0.9zM211.7 205.4h0.6v1.5h-0.6zM249.3 220.4h0.7v0.7h-0.7zM244.1 204.3h0.7v1.2h-0.7zM248.3 220.7h1.4v0.8h-1.4zM236.9 220.9h1.5v1.6h-1.5zM238.3 218.2h1.3v1.0h-1.3zM229.1 220.7h1.1v0.5h-1.1zM222.9 219.7h1.3v1.0h-1.3zM246.8 217.6h0.7v1.3h-0.7zM243.6 204.1h1.5v1.0h-1.5zM242.6 204.2h0.9v0.8h-0.9zM211.7 215.8h1.4v1.2h-1.4zM245.6 206.1h0.8v0.9h-0.8zM239.8 217.3h1.6v1.5h-1.6zM227.0 217.3h1.4v1.1h-1.4zM234.3 219.4h1.4v0.7h-1.4zM202.5 216.7h1.4v0.7h-1.4zM242.7 217.6h0.7v0.7h-0.7zM233.2 215.2h0.7v1.5h-0.7zM211.6 219.0h1.5v0.6h-1.5zM235.3 213.9h1.5v1.0h-1.5zM221.2 208.2h1.4v0.9h-1.4zM245.6 204.6h1.5v0.5h-1.5z" fill="#0a0606"/>
<path d="M236.5 221.1v0.9M221.3 205.2h4.5M240.3 204.6h2.5M241.0 204.4h2.1M219.9 219.2h4.6M237.4 210.4v4.3M204.4 212.5h3.3M228.2 216.4v3.2M241.5 216.3h2.6M214.3 221.1v0.9M248.3 216.6v3.1M225.6 221.1v0.9M234.5 215.3v2.5M222.0 216.2h4.3" stroke="#0a0606" stroke-width="0.5" fill="none"/>
<path d="M219.4 123.6h1.4v0.9h-1.4zM221.0 139.2h1.2v1.3h-1.2zM222.1 120.8h0.8v0.6h-0.8zM220.0 127.9h0.9v1.4h-0.9zM222.7 121.6h0.7v1.1h-0.7zM222.3 127.0h0.9v0.9h-0.9zM225.6 131.0h0.5v0.9h-0.5zM217.0 130.8h0.9v1.2h-0.9zM231.3 134.3h1.1v1.0h-1.1zM214.3 134.1h0.7v0.8h-0.7zM223.7 123.8h1.3v1.0h-1.3zM231.5 118.5h0.9v0.8h-0.9z" fill="#0a0606"/>
<path d="M297.5 155.0v3.8M294.8 149.4v4.2M291.4 160.4h2.7M296.8 160.2v1.8M298.2 152.2h2.9M294.9 158.7v3.3M302.0 152.9h3.8M304.1 158.7v2.5" stroke="#0a0606" stroke-width="0.5" fill="none"/>
<path d="M322.4 181.2h3.4M323.0 184.1v3.1M330.1 183.6v2.5M322.0 175.9h2.8M321.3 177.3h2.2M308.1 185.3v3.7M321.3 189.2h2.5M321.5 178.1v3.4M329.7 175.3h3.8M302.7 186.3h2.4" stroke="#0a0606" stroke-width="0.5" fill="none"/>
<path d="M166.3 80.4H351.6V244H297M166.3 80.4V244.9H179" fill="none" stroke="#2828f0" stroke-width="0.8" stroke-dasharray="2.2 1.6"/>
<path d="M199 245H204M222.6 245H229M247 245H254.4M269.4 245H278M296.4 245H304.4" fill="none" stroke="#2828f0" stroke-width="0.8" stroke-dasharray="2.2 1.6"/>
<circle cx="351.8" cy="80.2" r="1.2" fill="none" stroke="#5a5af0" stroke-width="0.5"/>
</g></svg>

</div>
<div class="abs" style="left:567px;top:24px;width:3px;height:363px;background:#2a2a2a"></div>

<!-- ===== RIGHT PANEL ===== -->
<div id="right" class="abs">
<div class="phead"><b style="left:2.5px">Properties</b>
<div class="abs" style="left:158px;top:5px;border-left:1.7px solid transparent;border-right:1.7px solid transparent;border-top:2px solid #e8e8e8"></div>
<div class="abs" style="left:166.2px;top:3.6px;width:2.2px;height:2.8px;background:#dcdcdc"></div><div class="abs" style="left:166.95px;top:6.2px;width:0.7px;height:1.8px;background:#dcdcdc"></div>
<svg class="abs" style="left:173.4px;top:3.6px" width="5" height="5" viewBox="0 0 5 5"><path d="M1.2 1.2 L3.8 3.8 M3.8 1.2 L1.2 3.8" stroke="#e4e4e4" stroke-width="0.8"/></svg></div>
<div class="t" style="left:4px;top:15px;font-size:5.8px;color:#d0d0d0">Board Assembly View</div>
<div class="abs" style="left:4px;top:29.4px;width:173px;height:10.8px;background:#232323;border-radius:1.5px"></div>
<svg class="abs" style="left:8.4px;top:31.6px" width="7" height="7" viewBox="0 0 7 7"><circle cx="2.7" cy="2.7" r="1.9" fill="none" stroke="#ccc" stroke-width="0.8"/><path d="M4.1 4.1 L6 6" stroke="#ccc" stroke-width="0.9"/></svg>
<div class="t" style="left:16.5px;top:29.8px;font-size:5.6px;color:#c8c8c8">Search</div>
<div class="sh" style="left:8px;top:44px"><i style="left:-4.4px;top:3px;border:0;border-top:2px solid transparent;border-bottom:2px solid transparent;border-left:2.4px solid #ddd"></i><span>Style</span></div>
<div class="sh" style="left:8.5px;top:59.3px"><i></i><span>Properties</span></div>
<div class="sec" style="top:70px;height:184.6px"></div>
<div class="lbl" style="top:74.2px;transform:scaleX(0.884)">View Side</div>
<div class="dd" style="left:69px;top:74.2px;width:100.6px"><span>Top</span></div>
<div class="lbl" style="top:87.3px;transform:scaleX(0.926)">Rotation</div>
<div class="dd" style="left:69px;top:87.3px;width:100.6px"><span>0°</span></div>
<div class="lbl" style="top:100.6px;transform:scaleX(0.902)">Display holes</div>
<div class="dd" style="left:69px;top:100.6px;width:100.6px"><span>Minimum diameter only</span></div>
<div class="lbl" style="top:113.7px;transform:scaleX(0.96)">Minimum Diameter</div>
<div class="inp" style="left:69px;top:113.7px;width:100.6px"><span>1.5mm</span></div>
<div class="lbl" style="top:127.0px;transform:scaleX(0.926)">Variation</div>
<div class="dd" style="left:69px;top:127.0px;width:100.6px"><span>Document : [No Variations]</span></div>
<div class="lbl" style="top:140.2px;transform:scaleX(0.95)">Component Caption</div>
<div class="dd" style="left:69px;top:140.2px;width:100.6px"><span>Designator</span></div>
<div class="lbl" style="top:153.5px;transform:scaleX(0.879)">Show Silkscreen</div>
<div class="dd" style="left:69px;top:153.5px;width:87.3px"><span>None</span></div>
<div class="sw" style="left:160.6px;top:154.0px;background:#f4f400;border-color:#8a8a40"></div>
<div class="cb" style="left:69.5px;top:165.6px;background:#484848;height:7px;width:7px"></div>
<div class="t" style="left:79px;top:164.2px;font-size:5.8px;color:#6e6e6e">Show No BOM</div>
<div class="t" style="left:6.8px;top:177.7px;font-size:5.8px;color:#e0e0e0;--sx:.94">Show additional data</div>
<div class="abs" style="left:7px;top:188.6px;width:163px;height:0.8px;background:#2a2a2a"></div>
<div class="cb on" style="left:9.6px;top:195.0px"></div>
<div class="sw" style="left:20.4px;top:194.3px;background:#f01010"></div>
<div class="t" style="left:32.4px;top:193.8px;font-size:5.8px;color:#dcdcdc">Topology</div>
<div class="cb" style="left:72.6px;top:195.0px;background:#555"></div>
<div class="sw" style="left:82.4px;top:194.3px;background:#6a1a78;border-color:#5c5c5c"></div>
<div class="t" style="left:94px;top:193.8px;font-size:5.8px;color:#777">Mask</div>
<div class="cb on" style="left:9.6px;top:207.8px"></div>
<div class="sw" style="left:20.4px;top:207.1px;background:#12a8f4"></div>
<div class="t" style="left:32.4px;top:206.6px;font-size:5.8px;color:#dcdcdc">SMD</div>
<div class="cb" style="left:72.6px;top:207.8px;background:#555"></div>
<div class="sw" style="left:82.4px;top:207.1px;background:#5c5c5c;border-color:#5c5c5c"></div>
<div class="t" style="left:94px;top:206.6px;font-size:5.8px;color:#777">Paste</div>
<div class="cb on" style="left:9.6px;top:220.6px"></div>
<div class="sw" style="left:20.4px;top:219.9px;background:#8cc84a"></div>
<div class="t" style="left:32.4px;top:219.4px;font-size:5.8px;color:#dcdcdc">Through-Hole</div>
<div class="abs" style="left:8.6px;top:194.0px;width:9.5px;height:9.5px;border:0.8px solid #8fb4dc;border-radius:1.5px"></div>
<div class="abs" style="left:7px;top:233.9px;width:163px;height:0.8px;background:#2a2a2a"></div>
<div class="abs" style="left:69px;top:240.0px;width:100.6px;height:11px;background:#4c4c4c;border-radius:1.5px;text-align:center;font-size:5.8px;line-height:11px;color:#e6e6e6">Components</div>
<div class="sh" style="left:8.5px;top:261.2px"><i></i><span>Component Display Properties</span></div>
<div class="sec" style="top:272.5px;height:79.6px;overflow:hidden"><div class="dd" style="left:65px;top:77px;width:100.6px"></div></div>
<div class="lbl" style="top:274.9px;transform:scaleX(.936)">All components</div>
<div class="lbl" style="top:285.0px;transform:scaleX(0.942)">Component Body</div>
<div class="cb on" style="left:69.5px;top:286.4px"></div>
<div class="dd" style="left:78.7px;top:285.0px;width:79.6px"><span>Default</span></div>
<div class="sw" style="left:160.6px;top:285.5px;background:#000;border-color:#555"></div>
<div class="lbl" style="top:297.5px;transform:scaleX(0.934)">Designator</div>
<div class="cb on" style="left:69.5px;top:298.9px"></div>
<div class="dd" style="left:78.7px;top:297.5px;width:79.6px"><span>Center/Fit</span></div>
<div class="sw" style="left:160.6px;top:298.0px;background:#000;border-color:#555"></div>
<div class="lbl" style="top:310.0px;transform:scaleX(0.947)">Comment</div>
<div class="cb on" style="left:69.5px;top:311.4px"></div>
<div class="dd" style="left:78.7px;top:310.0px;width:79.6px"><span>Center/Fit</span></div>
<div class="sw" style="left:160.6px;top:310.5px;background:#000;border-color:#555"></div>
<div class="lbl" style="top:322.8px;transform:scaleX(0.909)">Reference Marker</div>
<div class="dd" style="left:69px;top:322.8px;width:100.6px"><span>Off</span></div>
<div class="lbl" style="top:335.5px;transform:scaleX(.942)">Hatching Pattern</div>
<div class="abs" style="left:71.6px;top:337.7px;width:56px;height:5.6px;background:#d6d6d6"></div>
<div class="sw" style="left:133px;top:336.0px;background:#fff"></div>
<div class="sw" style="left:145.6px;top:336.0px;background:#000;border-color:#555"></div>
<div class="t" style="left:161px;top:335.7px;font-size:7px;color:#e0e0e0;letter-spacing:0.2px">···</div>
<div class="t" style="left:4px;top:352.2px;font-size:5.8px;color:#d4d4d4">1 object is selected</div>
<div class="abs" style="left:176.2px;top:86px;width:2px;height:230.5px;background:#888;border-radius:1px"></div>
<div class="abs" style="left:173.6px;top:44.5px;width:3px;height:3px;border-left:0.7px solid #777;border-top:0.7px solid #777;transform:rotate(45deg) scale(.8)"></div>
<div class="abs" style="left:175.6px;top:345px;width:3px;height:3px;border-right:0.7px solid #777;border-bottom:0.7px solid #777;transform:rotate(45deg) scale(.8)"></div>
</div>

<!-- ===== STATUS ===== -->
<div id="status" class="abs">
  <div class="t" style="left:2.4px;--sx:.935">X: 152.120mm, Y: 160.166mm</div>
  <div class="t" style="left:81.7px;--sx:.935">Grid: 1.000mm</div>
  <div class="t" style="left:383.2px;font-size:5.6px;color:#c8c8c8;--sx:.95">Snapping: Enabled</div>
  <div class="abs" style="left:731px;top:2px;width:18.5px;height:8px;background:#505050;border-radius:1px"></div><div class="abs" style="left:190px;top:0.5px;width:0.6px;height:10px;background:#2c2c2c"></div>
  <div class="t" style="left:733.5px;top:1.2px;font-size:5.6px;color:#e8e8e8">Panels</div>
</div>
<div class="abs" style="left:0;top:399.3px;width:753px;height:4.7px;background:linear-gradient(#1a1a1a,#050505 40%)"></div>

<div class="abs" style="left:0;top:24px;width:1.5px;height:363px;background:#2b2b2b"></div>
<div class="abs" style="left:0;top:24px;width:753px;height:0.6px;background:#2b2b2b"></div>
<!-- red annotation -->
<svg class="abs" style="left:0;top:0;pointer-events:none" width="753" height="404" viewBox="0 0 753 404">
  <rect x="570.4" y="198.8" width="152" height="60" rx="1.6" fill="none" stroke="#ee2a22" stroke-width="1.1"/>
  <path d="M469 264.3 L569.6 223.1 L569.3 222.4 L575.2 224.2 L570.9 228.5 L570.3 227.4 Z" fill="#fb1a12"/>
</svg>
</div>
</body>
</html>
